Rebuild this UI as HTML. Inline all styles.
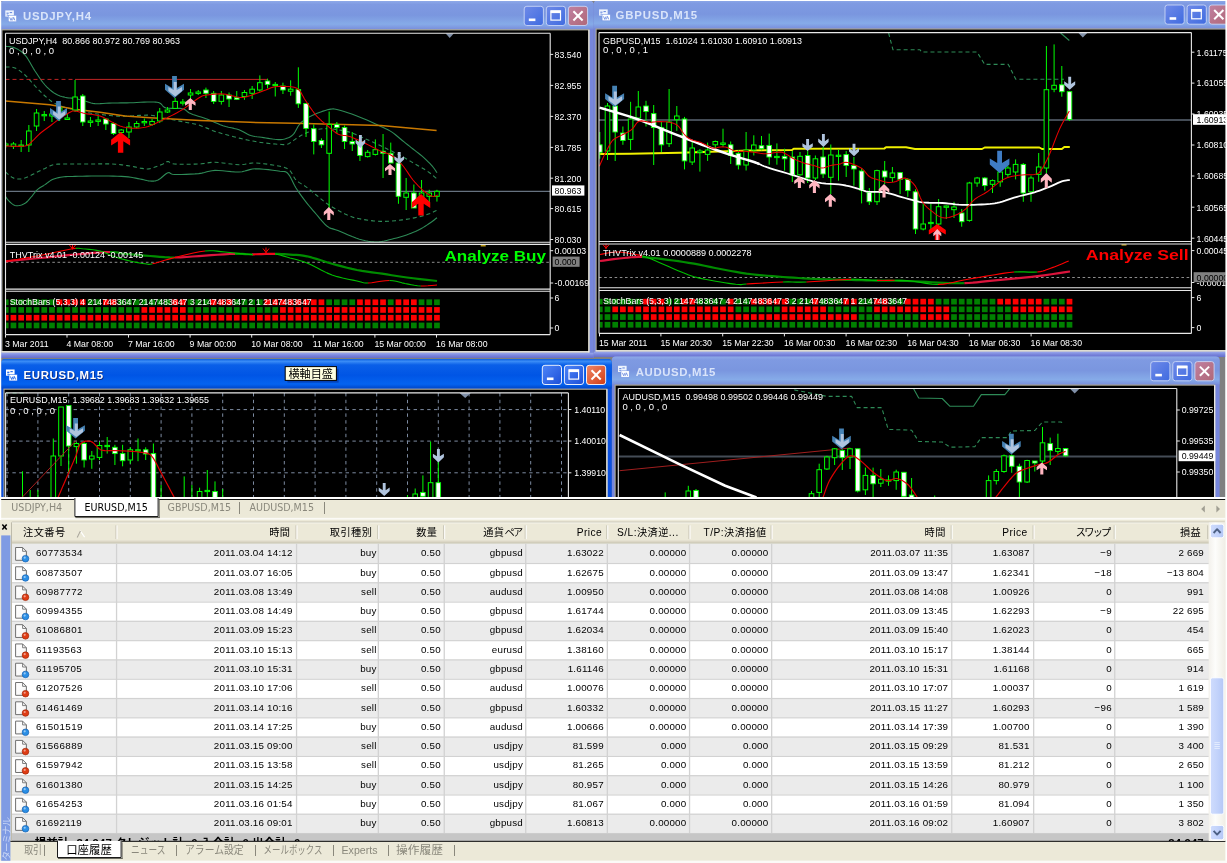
<!DOCTYPE html>
<html lang="ja"><head><meta charset="utf-8"><title>MetaTrader 4</title><style>
html,body{margin:0;padding:0;background:#fff;}
#root{will-change:transform;position:relative;width:1227px;height:863px;overflow:hidden;background:#ece9d8;font-family:"Liberation Sans","Noto Sans CJK JP",sans-serif;}
#root svg{position:absolute;left:0;top:0;}
#ui div,#ui span{position:absolute;white-space:nowrap;}
.ctab{font-family:"DejaVu Sans Condensed","DejaVu Sans","Liberation Sans",sans-serif;font-size:10.6px;line-height:13px;text-align:center;}
.btab{font-size:11.2px;line-height:13px;text-align:center;letter-spacing:-0.4px;}
.th{font-size:10.2px;line-height:14px;color:#000;letter-spacing:0.45px;}
.kn{letter-spacing:-1.7px;}
.td{font-size:9.8px;line-height:14px;color:#000;letter-spacing:0.2px;}
.r{text-align:right;}
.sumclip{overflow:hidden;}
.sum{font-size:11.4px;font-weight:bold;line-height:14px;color:#000;letter-spacing:0.1px;}
.vtxt{transform:rotate(-90deg);transform-origin:center;font-size:9.6px;color:#c9d6f6;width:60px;height:11px;line-height:11px;letter-spacing:-1.1px;text-align:left;}
</style></head><body>
<div id="root">
<svg width="1227" height="863" viewBox="0 0 1227 863">
<defs><linearGradient id="gA" x1="0" y1="0" x2="0" y2="1"><stop offset="0" stop-color="#0a5fe0"/><stop offset="0.08" stop-color="#3a8cf6"/><stop offset="0.2" stop-color="#0a5fe8"/><stop offset="0.55" stop-color="#0055e5"/><stop offset="0.85" stop-color="#0463f0"/><stop offset="1" stop-color="#0046c8"/></linearGradient><linearGradient id="gI" x1="0" y1="0" x2="0" y2="1"><stop offset="0" stop-color="#8ea9e8"/><stop offset="0.12" stop-color="#7f9ae2"/><stop offset="0.5" stop-color="#7a96df"/><stop offset="0.82" stop-color="#86abe8"/><stop offset="1" stop-color="#7a8fdc"/></linearGradient><linearGradient id="bbI" x1="0" y1="0" x2="0" y2="1"><stop offset="0" stop-color="#9aa8ec"/><stop offset="0.5" stop-color="#7a86dc"/><stop offset="1" stop-color="#666ecc"/></linearGradient><linearGradient id="bI" x1="0" y1="0" x2="1" y2="1"><stop offset="0" stop-color="#6f8ae8"/><stop offset="1" stop-color="#3f6be0"/></linearGradient><linearGradient id="bA" x1="0" y1="0" x2="1" y2="1"><stop offset="0" stop-color="#4f86f8"/><stop offset="1" stop-color="#1c4fd8"/></linearGradient><linearGradient id="cI" x1="0" y1="0" x2="1" y2="1"><stop offset="0" stop-color="#c080a0"/><stop offset="1" stop-color="#b06878"/></linearGradient><linearGradient id="cA" x1="0" y1="0" x2="1" y2="1"><stop offset="0" stop-color="#f08868"/><stop offset="1" stop-color="#d03c14"/></linearGradient></defs>
<rect x="0" y="0" width="1227" height="863" fill="#ffffff"/>
<rect x="1" y="1" width="1224.6" height="500" fill="#808080"/>
<path d="M0 358 L0 5 Q0 1 4 1 L589.8 1 Q593.8 1 593.8 5 L593.8 358 Z" fill="#7686dc"/>
<rect x="0" y="352.8" width="593.8" height="5.2" fill="url(#bbI)"/>
<path d="M0 29.2 L0 5 Q0 1 4 1 L589.8 1 Q593.8 1 593.8 5 L593.8 29.2 Z" fill="url(#gI)"/>
<rect x="1.3" y="29.2" width="588.1" height="323.2" fill="#a9a695"/>
<rect x="2.5" y="30.4" width="585.9" height="320.8" fill="#000000"/>
<rect x="588.3" y="29.8" width="1.2" height="322.6" fill="#f4f2e8"/>
<rect x="1.3" y="351.2" width="588.1" height="1.3" fill="#f4f2e8"/>
<rect x="5.3" y="10.4" width="8.6" height="6.2" fill="#eef3fd"/>
<rect x="6.5" y="12.6" width="2.2" height="1.2" fill="#6f8fe0"/>
<rect x="9.7" y="12" width="2.4" height="1.1" fill="#6f8fe0"/>
<rect x="6.7" y="14.6" width="1.4" height="1" fill="#6f8fe0"/>
<rect x="8.3" y="15.4" width="8.2" height="6.4" fill="#ffffff" stroke="#6f8fe0" stroke-width="0.5"/>
<path d="M9.7 17.4 l1.3 3 l1.3 -3 M12.5 20.4 l1.2 -3 l1.2 3" fill="none" stroke="#6f8fe0" stroke-width="0.9"/>
<text x="23" y="20.3" font-family='"Liberation Sans", "Noto Sans CJK JP", sans-serif' font-size="11.4" fill="#d9e4fa" textLength="68" lengthAdjust="spacing" font-weight="bold">USDJPY,H4</text>
<rect x="524.2" y="6.3" width="19.2" height="19.2" fill="url(#bI)" stroke="#c9d6f6" stroke-width="0.9" rx="2.6"/>
<rect x="528.8" y="18.5" width="6.6" height="2.6" fill="#ffffff"/>
<rect x="546.3" y="6.3" width="19.2" height="19.2" fill="url(#bI)" stroke="#c9d6f6" stroke-width="0.9" rx="2.6"/>
<rect x="550.9" y="10.9" width="9.6" height="9.2" fill="none" stroke="#ffffff" stroke-width="1.2"/>
<rect x="550.7" y="10.5" width="10" height="2.6" fill="#ffffff"/>
<rect x="568.4" y="6.3" width="19.2" height="19.2" fill="url(#cI)" stroke="#c9d6f6" stroke-width="0.9" rx="2.6"/>
<line x1="573.4" y1="11.3" x2="582.6" y2="20.5" stroke="#ffffff" stroke-width="2"/>
<line x1="582.6" y1="11.3" x2="573.4" y2="20.5" stroke="#ffffff" stroke-width="2"/>
<clipPath id="cp1"><rect x="5.5" y="33" width="544.7" height="303"/></clipPath><g clip-path="url(#cp1)">
<line x1="5.5" y1="191.4" x2="550.2" y2="191.4" stroke="#66727f" stroke-width="1.3"/>
<polyline points="5.5,46.2 6.53,46.34 7.94,46.47 9.62,46.66 11.44,46.95 13.28,47.38 15,48 16.64,48.76 18.3,49.61 19.97,50.61 21.65,51.81 23.33,53.25 25,55 26.67,57.17 28.33,59.74 30,62.56 31.67,65.48 33.33,68.34 35,71 36.67,73.51 38.33,76.01 40,78.46 41.67,80.81 43.33,83 45,85 46.67,86.8 48.33,88.45 50,89.94 51.67,91.3 53.33,92.51 55,93.6 56.67,94.53 58.33,95.29 60,95.91 61.67,96.43 63.33,96.88 65,97.3 66.67,97.64 68.33,97.87 70,98.03 71.67,98.17 73.33,98.35 75,98.6 76.67,98.93 78.33,99.31 80,99.72 81.67,100.14 83.33,100.58 85,101 86.59,101.46 88.07,101.97 89.56,102.49 91.15,102.96 92.93,103.35 95,103.6 97.42,103.68 100.11,103.62 103,103.47 106,103.29 109.03,103.11 112,103 114.92,102.95 117.85,102.93 120.81,102.91 123.81,102.9 126.87,102.86 130,102.8 133.34,102.68 136.9,102.51 140.52,102.32 144.02,102.16 147.24,102.04 150,102 152.25,102.02 154.12,102.05 155.71,102.14 157.1,102.3 158.4,102.58 159.7,103 160.83,103.65 161.67,104.53 162.42,105.52 163.27,106.5 164.4,107.37 166,108 168.26,108.32 171.06,108.4 174.14,108.36 177.24,108.31 180.12,108.39 182.5,108.7 184.24,109.27 185.52,110 186.57,110.86 187.61,111.77 188.88,112.71 190.6,113.6 192.83,114.46 195.4,115.31 198.19,116.19 201.1,117.09 204.01,118.02 206.8,119 209.5,120.07 212.21,121.23 214.91,122.43 217.61,123.61 220.31,124.72 223,125.7 225.73,126.52 228.51,127.2 231.29,127.81 234,128.41 236.59,129.05 239,129.8 241.17,130.7 243.14,131.71 244.99,132.78 246.79,133.81 248.64,134.74 250.6,135.5 252.69,136.06 254.83,136.47 257.01,136.79 259.21,137.05 261.42,137.3 263.6,137.6 265.82,137.96 268.11,138.34 270.41,138.71 272.63,139.05 274.72,139.32 276.6,139.5 278.23,139.6 279.66,139.65 280.94,139.64 282.17,139.54 283.4,139.33 284.7,139 286.1,138.57 287.54,138.05 288.98,137.43 290.4,136.67 291.75,135.77 293,134.7 294.12,133.35 295.14,131.73 296.1,129.96 297.03,128.16 297.99,126.47 299,125 300.03,123.78 301.03,122.7 302.05,121.73 303.14,120.82 304.34,119.92 305.7,119 307.24,118.05 308.92,117.11 310.72,116.19 312.6,115.29 314.54,114.42 316.5,113.6 318.57,112.78 320.77,111.94 323.04,111.14 325.27,110.41 327.39,109.82 329.3,109.4 330.83,109.12 332,108.94 333.06,108.89 334.23,109 335.77,109.29 337.9,109.8 340.74,110.57 344.11,111.58 347.85,112.77 351.76,114.1 355.67,115.49 359.4,116.9 363.1,118.4 366.93,120.07 370.77,121.81 374.46,123.52 377.85,125.11 380.8,126.5 383.21,127.61 385.19,128.49 386.87,129.26 388.4,130.02 389.93,130.86 391.6,131.9 393.39,133.15 395.17,134.53 396.96,136.01 398.74,137.52 400.52,139.04 402.3,140.5 404.08,141.92 405.86,143.34 407.64,144.75 409.43,146.16 411.21,147.58 413,149 414.82,150.43 416.68,151.86 418.54,153.29 420.37,154.73 422.13,156.17 423.8,157.6 425.39,159.06 426.94,160.54 428.43,162.03 429.83,163.49 431.13,164.89 432.3,166.2 433.36,167.48 434.32,168.76 435.18,169.99 435.92,171.09 436.53,172.02 437,172.7" fill="none" stroke="#2e8b57" stroke-width="1.1" stroke-linejoin="round"/>
<polyline points="5.5,196.6 5.97,197.21 6.6,198.06 7.36,199.06 8.21,200.12 9.1,201.13 10,202 10.9,202.8 11.84,203.62 12.83,204.39 13.88,205.06 15,205.55 16.2,205.8 17.55,205.79 19.04,205.57 20.6,205.18 22.16,204.65 23.65,204.01 25,203.3 26.18,202.48 27.26,201.52 28.26,200.46 29.23,199.32 30.2,198.16 31.2,197 32.22,195.8 33.21,194.53 34.21,193.22 35.23,191.93 36.29,190.71 37.4,189.6 38.59,188.63 39.84,187.76 41.12,186.95 42.43,186.18 43.73,185.41 45,184.6 46.22,183.74 47.39,182.84 48.56,181.95 49.76,181.09 51.02,180.29 52.4,179.6 53.87,179 55.41,178.48 57.02,178.02 58.7,177.63 60.46,177.29 62.3,177 64.11,176.78 65.87,176.64 67.71,176.56 69.75,176.51 72.14,176.47 75,176.4 78.45,176.31 82.42,176.21 86.73,176.13 91.21,176.05 95.69,176.01 100,176 104.28,176.02 108.7,176.06 113.12,176.12 117.41,176.23 121.41,176.38 125,176.6 128.14,176.9 130.93,177.28 133.44,177.71 135.74,178.16 137.91,178.6 140,179 141.98,179.39 143.78,179.81 145.44,180.21 147,180.57 148.51,180.84 150,181 151.43,181.08 152.74,181.12 154.01,181.08 155.27,180.9 156.58,180.56 158,180 159.58,179.06 161.29,177.73 163.04,176.23 164.78,174.77 166.42,173.56 167.9,172.8 168.97,172.6 169.66,172.8 170.25,173.26 171.04,173.8 172.33,174.26 174.4,174.5 177.51,174.53 181.48,174.48 185.94,174.36 190.53,174.17 194.91,173.91 198.7,173.6 201.79,173.14 204.44,172.53 206.87,171.84 209.29,171.2 211.93,170.68 215,170.4 218.64,170.44 222.71,170.76 226.99,171.2 231.27,171.64 235.34,171.96 239,172 242.09,171.68 244.76,171.08 247.22,170.35 249.69,169.63 252.37,169.06 255.5,168.8 259.31,168.88 263.69,169.19 268.28,169.65 272.76,170.19 276.78,170.74 280,171.2 282.29,171.46 283.89,171.56 285.03,171.65 285.94,171.91 286.86,172.51 288,173.6 289.31,175.31 290.6,177.54 291.89,180.1 293.21,182.81 294.57,185.51 296,188 297.51,190.32 299.07,192.62 300.67,194.89 302.32,197.15 304,199.38 305.7,201.6 307.44,203.8 309.22,205.99 311.04,208.16 312.87,210.31 314.69,212.42 316.5,214.5 318.29,216.62 320.07,218.79 321.86,220.94 323.64,222.96 325.42,224.78 327.2,226.3 328.86,227.4 330.37,228.13 331.87,228.65 333.53,229.13 335.49,229.72 337.9,230.6 340.91,231.85 344.43,233.36 348.25,234.99 352.16,236.6 355.95,238.05 359.4,239.2 362.53,240.07 365.5,240.77 368.35,241.31 371.11,241.7 373.82,241.92 376.5,242 379.13,241.87 381.69,241.54 384.18,241.04 386.65,240.45 389.11,239.82 391.6,239.2 394.13,238.58 396.69,237.92 399.24,237.21 401.76,236.47 404.22,235.7 406.6,234.9 408.9,234.08 411.14,233.22 413.33,232.34 415.46,231.42 417.51,230.48 419.5,229.5 421.43,228.47 423.31,227.37 425.12,226.24 426.85,225.12 428.48,224.03 430,223 431.45,221.99 432.85,220.95 434.16,219.94 435.31,219.03 436.28,218.26 437,217.7" fill="none" stroke="#2e8b57" stroke-width="1.1" stroke-linejoin="round"/>
<polyline points="5.5,67 6.53,67.04 7.94,67.04 9.62,67.06 11.44,67.19 13.28,67.47 15,68 16.64,68.77 18.3,69.74 19.97,70.88 21.65,72.15 23.33,73.53 25,75 26.67,76.61 28.33,78.41 30,80.31 31.67,82.26 33.33,84.18 35,86 36.67,87.75 38.33,89.5 40,91.21 41.67,92.88 43.33,94.48 45,96 46.67,97.45 48.33,98.86 50,100.19 51.67,101.44 53.33,102.59 55,103.6 56.67,104.46 58.33,105.17 60,105.77 61.67,106.3 63.33,106.8 65,107.3 66.67,107.79 68.33,108.22 70,108.62 71.67,109.01 73.33,109.4 75,109.8 76.61,110.22 78.15,110.65 79.69,111.08 81.3,111.5 83.04,111.91 85,112.3 87.21,112.67 89.63,113.01 92.19,113.35 94.81,113.67 97.44,113.99 100,114.3 102.5,114.62 105,114.95 107.5,115.27 110,115.57 112.5,115.82 115,116 117.44,116.11 119.81,116.16 122.19,116.16 124.63,116.12 127.21,116.07 130,116 133.09,115.87 136.44,115.64 139.94,115.4 143.44,115.2 146.84,115.11 150,115.2 152.89,115.5 155.61,115.97 158.22,116.54 160.78,117.18 163.35,117.81 166,118.4 168.72,118.94 171.47,119.49 174.24,120.04 177,120.6 179.76,121.15 182.5,121.7 185.22,122.21 187.92,122.69 190.61,123.16 193.3,123.67 196,124.27 198.7,125 201.41,125.91 204.14,126.97 206.86,128.12 209.59,129.29 212.3,130.4 215,131.4 217.68,132.28 220.34,133.09 222.99,133.85 225.65,134.58 228.31,135.29 231,136 233.71,136.72 236.44,137.42 239.19,138.11 241.93,138.78 244.67,139.41 247.4,140 250.11,140.55 252.81,141.07 255.5,141.55 258.19,142 260.89,142.42 263.6,142.8 266.42,143.16 269.36,143.5 272.31,143.8 275.15,144.06 277.75,144.26 280,144.4 281.82,144.51 283.29,144.6 284.52,144.63 285.64,144.57 286.76,144.37 288,144 289.33,143.39 290.67,142.58 292,141.62 293.33,140.61 294.67,139.61 296,138.7 297.28,137.86 298.5,137.04 299.72,136.23 301,135.44 302.41,134.66 304,133.9 305.82,133.13 307.82,132.34 309.95,131.56 312.14,130.84 314.35,130.21 316.5,129.7 318.54,129.3 320.5,128.97 322.47,128.74 324.54,128.6 326.79,128.59 329.3,128.7 332.24,128.98 335.57,129.41 339.08,129.97 342.56,130.6 345.8,131.25 348.6,131.9 350.77,132.49 352.44,133.06 353.87,133.65 355.33,134.33 357.08,135.16 359.4,136.2 362.35,137.48 365.74,138.96 369.43,140.59 373.27,142.31 377.1,144.07 380.8,145.8 384.48,147.57 388.29,149.44 392.09,151.34 395.78,153.21 399.22,154.98 402.3,156.6 404.92,158.03 407.17,159.31 409.18,160.5 411.07,161.64 412.97,162.79 415,164 417.2,165.26 419.46,166.53 421.73,167.8 423.95,169.07 426.06,170.34 428,171.6 429.84,172.93 431.63,174.36 433.31,175.77 434.81,177.09 436.07,178.2 437,179" fill="none" stroke="#2e8b57" stroke-width="1.1" stroke-linejoin="round" stroke-dasharray="4 3"/>
<polyline points="5.5,172 6.26,172.66 7.3,173.61 8.53,174.71 9.87,175.84 11.22,176.84 12.5,177.6 13.72,178.12 14.97,178.5 16.22,178.77 17.49,178.94 18.75,179.01 20,179 21.21,178.9 22.38,178.7 23.54,178.4 24.74,178.01 26.02,177.55 27.4,177 28.94,176.32 30.63,175.5 32.39,174.6 34.15,173.67 35.84,172.79 37.4,172 38.81,171.32 40.12,170.69 41.36,170.1 42.57,169.53 43.77,168.97 45,168.4 46.22,167.79 47.39,167.16 48.56,166.54 49.76,165.95 51.02,165.43 52.4,165 53.73,164.68 54.96,164.45 56.25,164.29 57.79,164.17 59.75,164.08 62.3,164 65.6,163.94 69.53,163.93 73.87,163.94 78.43,163.96 82.98,163.99 87.3,164 91.51,163.98 95.8,163.93 100.09,163.88 104.27,163.85 108.27,163.88 112,164 115.46,164.21 118.72,164.5 121.79,164.85 124.69,165.23 127.42,165.62 130,166 132.39,166.4 134.59,166.85 136.62,167.31 138.52,167.75 140.3,168.12 142,168.4 143.51,168.62 144.78,168.81 145.94,168.94 147.11,168.97 148.42,168.87 150,168.6 151.97,168.09 154.26,167.34 156.69,166.47 159.08,165.56 161.24,164.7 163,164 164.27,163.4 165.17,162.83 165.86,162.31 166.45,161.89 167.08,161.6 167.9,161.5 168.68,161.66 169.29,162.06 169.94,162.59 170.86,163.17 172.27,163.67 174.4,164 177.51,164.16 181.48,164.25 185.94,164.26 190.53,164.22 194.91,164.13 198.7,164 201.79,163.77 204.44,163.41 206.87,163 209.29,162.63 211.93,162.37 215,162.3 218.64,162.51 222.71,162.95 226.99,163.5 231.27,164.05 235.34,164.49 239,164.7 242.09,164.6 244.76,164.25 247.22,163.79 249.69,163.35 252.37,163.04 255.5,163 259.29,163.25 263.63,163.7 268.18,164.29 272.64,164.96 276.69,165.65 280,166.3 282.5,166.87 284.42,167.4 285.93,167.96 287.19,168.6 288.36,169.39 289.6,170.4 290.81,171.72 291.85,173.3 292.79,175.04 293.74,176.82 294.78,178.51 296,180 297.41,181.25 298.95,182.35 300.57,183.36 302.26,184.36 303.98,185.42 305.7,186.6 307.44,187.92 309.22,189.32 311.04,190.77 312.87,192.26 314.69,193.74 316.5,195.2 318.29,196.66 320.07,198.15 321.86,199.64 323.64,201.1 325.42,202.49 327.2,203.8 328.98,205.01 330.77,206.13 332.55,207.2 334.33,208.22 336.12,209.22 337.9,210.2 339.68,211.18 341.46,212.16 343.24,213.1 345.03,214 346.81,214.84 348.6,215.6 350.27,216.27 351.8,216.85 353.33,217.38 355.01,217.86 356.99,218.33 359.4,218.8 362.35,219.32 365.74,219.86 369.43,220.39 373.27,220.86 377.1,221.21 380.8,221.4 384.43,221.41 388.12,221.27 391.81,221.01 395.45,220.68 398.96,220.3 402.3,219.9 405.49,219.47 408.6,218.96 411.59,218.41 414.42,217.84 417.07,217.26 419.5,216.7 421.68,216.15 423.63,215.6 425.39,215.05 427.01,214.5 428.53,213.95 430,213.4 431.45,212.82 432.85,212.21 434.16,211.59 435.31,211.03 436.28,210.55 437,210.2" fill="none" stroke="#2e8b57" stroke-width="1.1" stroke-linejoin="round" stroke-dasharray="4 3"/>
<line x1="5.5" y1="79.4" x2="75" y2="79.4" stroke="#c02424" stroke-width="1" stroke-dasharray="4 3"/>
<line x1="75" y1="79.4" x2="268" y2="79.4" stroke="#c02424" stroke-width="1"/>
<polyline points="5.5,101 50,104.8 75,109.3 100,112.3 125,116 150,117.8 200,120.5 250,122.3 295,123.3 380.8,125.5 436.6,130.4" fill="none" stroke="#c87800" stroke-width="1.5" stroke-linejoin="round"/>
<line x1="5.75" y1="142" x2="5.75" y2="148" stroke="#00ff00" stroke-width="1"/>
<rect x="3.45" y="144" width="4.6" height="1.6" fill="#000000" stroke="#00ff00" stroke-width="1"/>
<line x1="13.45" y1="142" x2="13.45" y2="149" stroke="#00ff00" stroke-width="1"/>
<rect x="11.15" y="144" width="4.6" height="2.4" fill="#000000" stroke="#00ff00" stroke-width="1"/>
<line x1="21.15" y1="140" x2="21.15" y2="152" stroke="#00ff00" stroke-width="1"/>
<rect x="18.85" y="145" width="4.6" height="1.2" fill="#000000" stroke="#00ff00" stroke-width="1"/>
<line x1="28.85" y1="125" x2="28.85" y2="152" stroke="#00ff00" stroke-width="1"/>
<rect x="26.55" y="131" width="4.6" height="14" fill="#000000" stroke="#00ff00" stroke-width="1"/>
<line x1="36.55" y1="109" x2="36.55" y2="131" stroke="#00ff00" stroke-width="1"/>
<rect x="34.25" y="113" width="4.6" height="13" fill="#000000" stroke="#00ff00" stroke-width="1"/>
<line x1="44.25" y1="111" x2="44.25" y2="121" stroke="#00ff00" stroke-width="1"/>
<rect x="41.95" y="114.6" width="4.6" height="1.2" fill="#000000" stroke="#00ff00" stroke-width="1"/>
<line x1="51.95" y1="110" x2="51.95" y2="122" stroke="#00ff00" stroke-width="1"/>
<rect x="49.65" y="114" width="4.6" height="2" fill="#000000" stroke="#00ff00" stroke-width="1"/>
<line x1="59.65" y1="101" x2="59.65" y2="121" stroke="#00ff00" stroke-width="1"/>
<rect x="57.35" y="108" width="4.6" height="8" fill="#000000" stroke="#00ff00" stroke-width="1"/>
<line x1="67.35" y1="114" x2="67.35" y2="120" stroke="#00ff00" stroke-width="1"/>
<rect x="65.05" y="118" width="4.6" height="1.5" fill="#000000" stroke="#00ff00" stroke-width="1"/>
<line x1="75.05" y1="80" x2="75.05" y2="112" stroke="#00ff00" stroke-width="1"/>
<rect x="72.75" y="97" width="4.6" height="13" fill="#000000" stroke="#00ff00" stroke-width="1"/>
<line x1="82.75" y1="94" x2="82.75" y2="126" stroke="#00ff00" stroke-width="1"/>
<rect x="80.45" y="96" width="4.6" height="26" fill="#ffffff" stroke="#00ff00" stroke-width="0.9"/>
<line x1="90.45" y1="117" x2="90.45" y2="127" stroke="#00ff00" stroke-width="1"/>
<rect x="88.15" y="121" width="4.6" height="1.4" fill="#000000" stroke="#00ff00" stroke-width="1"/>
<line x1="98.15" y1="116" x2="98.15" y2="126" stroke="#00ff00" stroke-width="1"/>
<rect x="95.85" y="120" width="4.6" height="1.4" fill="#000000" stroke="#00ff00" stroke-width="1"/>
<line x1="105.85" y1="118" x2="105.85" y2="130" stroke="#00ff00" stroke-width="1"/>
<rect x="103.55" y="119" width="4.6" height="5" fill="#ffffff" stroke="#00ff00" stroke-width="0.9"/>
<line x1="113.55" y1="122" x2="113.55" y2="135" stroke="#00ff00" stroke-width="1"/>
<rect x="111.25" y="123.5" width="4.6" height="10" fill="#ffffff" stroke="#00ff00" stroke-width="0.9"/>
<line x1="121.25" y1="129" x2="121.25" y2="134" stroke="#00ff00" stroke-width="1"/>
<rect x="118.95" y="130" width="4.6" height="2.5" fill="#000000" stroke="#00ff00" stroke-width="1"/>
<line x1="128.95" y1="122" x2="128.95" y2="138" stroke="#00ff00" stroke-width="1"/>
<rect x="126.65" y="127" width="4.6" height="5" fill="#000000" stroke="#00ff00" stroke-width="1"/>
<line x1="136.65" y1="121" x2="136.65" y2="128.5" stroke="#00ff00" stroke-width="1"/>
<rect x="134.35" y="123.5" width="4.6" height="3.5" fill="#000000" stroke="#00ff00" stroke-width="1"/>
<line x1="144.35" y1="118.5" x2="144.35" y2="126" stroke="#00ff00" stroke-width="1"/>
<rect x="142.05" y="121.5" width="4.6" height="1.3" fill="#000000" stroke="#00ff00" stroke-width="1"/>
<line x1="152.05" y1="119" x2="152.05" y2="126" stroke="#00ff00" stroke-width="1"/>
<rect x="149.75" y="121.5" width="4.6" height="3" fill="#000000" stroke="#00ff00" stroke-width="1"/>
<line x1="159.75" y1="108" x2="159.75" y2="123" stroke="#00ff00" stroke-width="1"/>
<rect x="157.45" y="112" width="4.6" height="9" fill="#000000" stroke="#00ff00" stroke-width="1"/>
<line x1="167.45" y1="107" x2="167.45" y2="113" stroke="#00ff00" stroke-width="1"/>
<rect x="165.15" y="110" width="4.6" height="2" fill="#000000" stroke="#00ff00" stroke-width="1"/>
<line x1="175.15" y1="98" x2="175.15" y2="108.4" stroke="#00ff00" stroke-width="1"/>
<rect x="172.85" y="101.4" width="4.6" height="7" fill="#000000" stroke="#00ff00" stroke-width="1"/>
<line x1="182.85" y1="99" x2="182.85" y2="105.5" stroke="#00ff00" stroke-width="1"/>
<rect x="180.55" y="102" width="4.6" height="1.2" fill="#000000" stroke="#00ff00" stroke-width="1"/>
<line x1="190.55" y1="89" x2="190.55" y2="99" stroke="#00ff00" stroke-width="1"/>
<rect x="188.25" y="93" width="4.6" height="2" fill="#000000" stroke="#00ff00" stroke-width="1"/>
<line x1="198.25" y1="90" x2="198.25" y2="95" stroke="#00ff00" stroke-width="1"/>
<rect x="195.95" y="92" width="4.6" height="1.4" fill="#000000" stroke="#00ff00" stroke-width="1"/>
<line x1="205.95" y1="87.6" x2="205.95" y2="98" stroke="#00ff00" stroke-width="1"/>
<rect x="203.65" y="90" width="4.6" height="3.3" fill="#ffffff" stroke="#00ff00" stroke-width="0.9"/>
<line x1="213.65" y1="91" x2="213.65" y2="104" stroke="#00ff00" stroke-width="1"/>
<rect x="211.35" y="93.3" width="4.6" height="8.1" fill="#ffffff" stroke="#00ff00" stroke-width="0.9"/>
<line x1="221.35" y1="91" x2="221.35" y2="104.6" stroke="#00ff00" stroke-width="1"/>
<rect x="219.05" y="95" width="4.6" height="6.4" fill="#000000" stroke="#00ff00" stroke-width="1"/>
<line x1="229.05" y1="92.5" x2="229.05" y2="107" stroke="#00ff00" stroke-width="1"/>
<rect x="226.75" y="95" width="4.6" height="4" fill="#ffffff" stroke="#00ff00" stroke-width="0.9"/>
<line x1="236.75" y1="91" x2="236.75" y2="100" stroke="#00ff00" stroke-width="1"/>
<rect x="234.45" y="97.7" width="4.6" height="1.6" fill="#ffffff" stroke="#00ff00" stroke-width="0.9"/>
<line x1="244.45" y1="90" x2="244.45" y2="99.8" stroke="#00ff00" stroke-width="1"/>
<rect x="242.15" y="92.5" width="4.6" height="4" fill="#000000" stroke="#00ff00" stroke-width="1"/>
<line x1="252.15" y1="86" x2="252.15" y2="99" stroke="#00ff00" stroke-width="1"/>
<rect x="249.85" y="89.2" width="4.6" height="4.1" fill="#000000" stroke="#00ff00" stroke-width="1"/>
<line x1="259.85" y1="75.4" x2="259.85" y2="91.7" stroke="#00ff00" stroke-width="1"/>
<rect x="257.55" y="82.7" width="4.6" height="7.3" fill="#000000" stroke="#00ff00" stroke-width="1"/>
<line x1="267.55" y1="78.7" x2="267.55" y2="88.4" stroke="#00ff00" stroke-width="1"/>
<rect x="265.25" y="81" width="4.6" height="3.4" fill="#ffffff" stroke="#00ff00" stroke-width="0.9"/>
<line x1="275.25" y1="82" x2="275.25" y2="96.5" stroke="#00ff00" stroke-width="1"/>
<rect x="272.95" y="84.4" width="4.6" height="1.2" fill="#000000" stroke="#00ff00" stroke-width="1"/>
<line x1="282.95" y1="82.7" x2="282.95" y2="94" stroke="#00ff00" stroke-width="1"/>
<rect x="280.65" y="86" width="4.6" height="4" fill="#ffffff" stroke="#00ff00" stroke-width="0.9"/>
<line x1="290.65" y1="80.3" x2="290.65" y2="95.7" stroke="#00ff00" stroke-width="1"/>
<rect x="288.35" y="89.2" width="4.6" height="2" fill="#000000" stroke="#00ff00" stroke-width="1"/>
<line x1="298.35" y1="67.3" x2="298.35" y2="107.9" stroke="#00ff00" stroke-width="1"/>
<rect x="296.05" y="89.6" width="4.6" height="14.2" fill="#ffffff" stroke="#00ff00" stroke-width="0.9"/>
<line x1="306.05" y1="103.5" x2="306.05" y2="137" stroke="#00ff00" stroke-width="1"/>
<rect x="303.75" y="103.5" width="4.6" height="24.9" fill="#ffffff" stroke="#00ff00" stroke-width="0.9"/>
<line x1="313.75" y1="124.4" x2="313.75" y2="154.4" stroke="#00ff00" stroke-width="1"/>
<rect x="311.45" y="128.7" width="4.6" height="12.8" fill="#ffffff" stroke="#00ff00" stroke-width="0.9"/>
<line x1="321.45" y1="138.3" x2="321.45" y2="148" stroke="#00ff00" stroke-width="1"/>
<rect x="319.15" y="140.5" width="4.6" height="4.3" fill="#ffffff" stroke="#00ff00" stroke-width="0.9"/>
<line x1="329.15" y1="111.5" x2="329.15" y2="208" stroke="#00ff00" stroke-width="1"/>
<rect x="326.85" y="124.4" width="4.6" height="28.9" fill="#000000" stroke="#00ff00" stroke-width="1"/>
<line x1="336.85" y1="122" x2="336.85" y2="133" stroke="#00ff00" stroke-width="1"/>
<rect x="334.55" y="124.4" width="4.6" height="3.2" fill="#ffffff" stroke="#00ff00" stroke-width="0.9"/>
<line x1="344.55" y1="125.5" x2="344.55" y2="149" stroke="#00ff00" stroke-width="1"/>
<rect x="342.25" y="127.6" width="4.6" height="13.9" fill="#ffffff" stroke="#00ff00" stroke-width="0.9"/>
<line x1="352.25" y1="132" x2="352.25" y2="151" stroke="#00ff00" stroke-width="1"/>
<rect x="349.95" y="141.5" width="4.6" height="2.5" fill="#ffffff" stroke="#00ff00" stroke-width="0.9"/>
<line x1="359.95" y1="140.5" x2="359.95" y2="161" stroke="#00ff00" stroke-width="1"/>
<rect x="357.65" y="141.5" width="4.6" height="14" fill="#ffffff" stroke="#00ff00" stroke-width="0.9"/>
<line x1="367.65" y1="150" x2="367.65" y2="157.5" stroke="#00ff00" stroke-width="1"/>
<rect x="365.35" y="152.3" width="4.6" height="4.3" fill="#000000" stroke="#00ff00" stroke-width="1"/>
<line x1="375.35" y1="139.4" x2="375.35" y2="155.5" stroke="#00ff00" stroke-width="1"/>
<rect x="373.05" y="149.7" width="4.6" height="4.7" fill="#000000" stroke="#00ff00" stroke-width="1"/>
<line x1="383.05" y1="134" x2="383.05" y2="178" stroke="#00ff00" stroke-width="1"/>
<rect x="380.75" y="151.2" width="4.6" height="2.1" fill="#ffffff" stroke="#00ff00" stroke-width="0.9"/>
<line x1="390.75" y1="142.6" x2="390.75" y2="163" stroke="#00ff00" stroke-width="1"/>
<rect x="388.45" y="153.3" width="4.6" height="9.7" fill="#ffffff" stroke="#00ff00" stroke-width="0.9"/>
<line x1="398.45" y1="163" x2="398.45" y2="203.8" stroke="#00ff00" stroke-width="1"/>
<rect x="396.15" y="163" width="4.6" height="33.3" fill="#ffffff" stroke="#00ff00" stroke-width="0.9"/>
<line x1="406.15" y1="178" x2="406.15" y2="210" stroke="#00ff00" stroke-width="1"/>
<rect x="403.85" y="193" width="4.6" height="4.3" fill="#000000" stroke="#00ff00" stroke-width="1"/>
<line x1="413.85" y1="184.5" x2="413.85" y2="208" stroke="#00ff00" stroke-width="1"/>
<rect x="411.55" y="193" width="4.6" height="15" fill="#ffffff" stroke="#00ff00" stroke-width="0.9"/>
<line x1="421.55" y1="180" x2="421.55" y2="199.5" stroke="#00ff00" stroke-width="1"/>
<rect x="419.25" y="193" width="4.6" height="4.3" fill="#000000" stroke="#00ff00" stroke-width="1"/>
<line x1="429.25" y1="189.8" x2="429.25" y2="203.8" stroke="#00ff00" stroke-width="1"/>
<rect x="426.95" y="193" width="4.6" height="3.3" fill="#000000" stroke="#00ff00" stroke-width="1"/>
<line x1="436.95" y1="189.8" x2="436.95" y2="201.6" stroke="#00ff00" stroke-width="1"/>
<rect x="434.65" y="191.3" width="4.6" height="5" fill="#000000" stroke="#00ff00" stroke-width="1"/>
<polyline points="5.5,146 7.76,146.06 11,146.19 14.79,146.31 18.67,146.37 22.22,146.29 25,146 26.93,145.48 28.36,144.8 29.44,143.97 30.37,143.04 31.3,142.04 32.4,141 33.63,139.89 34.83,138.69 36.04,137.41 37.28,136.09 38.59,134.78 40,133.5 41.53,132.25 43.16,131 44.85,129.75 46.58,128.5 48.31,127.25 50,126 51.67,124.73 53.33,123.45 55,122.17 56.67,120.9 58.33,119.67 60,118.5 61.72,117.33 63.52,116.16 65.31,115.01 67.04,113.96 68.62,113.03 70,112.3 71.06,111.76 71.85,111.36 72.5,111.11 73.15,110.97 73.94,110.94 75,111 76.32,111.2 77.78,111.55 79.38,112.01 81.11,112.53 82.99,113.04 85,113.5 87.27,113.89 89.81,114.24 92.5,114.59 95.19,114.98 97.73,115.44 100,116 101.96,116.69 103.7,117.48 105.31,118.34 106.85,119.24 108.39,120.14 110,121 111.67,121.87 113.33,122.78 115,123.69 116.67,124.56 118.33,125.34 120,126 121.67,126.53 123.33,126.96 125,127.31 126.67,127.59 128.33,127.82 130,128 131.67,128.14 133.33,128.23 135,128.27 136.67,128.24 138.33,128.16 140,128 141.6,127.81 143.11,127.59 144.62,127.31 146.22,126.92 147.99,126.4 150,125.7 152.31,124.79 154.87,123.7 157.59,122.46 160.41,121.14 163.23,119.77 166,118.4 168.72,117.04 171.47,115.65 174.24,114.21 177,112.72 179.76,111.15 182.5,109.5 185.31,107.64 188.22,105.54 191.13,103.38 193.91,101.3 196.47,99.45 198.7,98 200.42,96.98 201.7,96.3 202.75,95.84 203.8,95.54 205.07,95.29 206.8,95 209.03,94.67 211.61,94.36 214.41,94.11 217.31,93.94 220.22,93.89 223,94 225.77,94.35 228.63,94.93 231.49,95.64 234.24,96.34 236.78,96.94 239,97.3 240.75,97.46 242.07,97.52 243.19,97.46 244.3,97.28 245.64,96.96 247.4,96.5 249.7,95.81 252.4,94.9 255.31,93.85 258.27,92.76 261.09,91.71 263.6,90.8 265.72,89.99 267.59,89.19 269.31,88.44 271.04,87.77 272.89,87.22 275,86.8 277.49,86.53 280.29,86.39 283.21,86.35 286.09,86.41 288.74,86.57 291,86.8 292.81,87.06 294.31,87.35 295.58,87.72 296.73,88.25 297.83,88.99 299,90 300.14,91.31 301.18,92.88 302.17,94.66 303.21,96.61 304.36,98.67 305.7,100.8 307.26,103.12 309,105.69 310.85,108.37 312.76,111.04 314.66,113.56 316.5,115.8 318.29,117.74 320.07,119.47 321.86,121.06 323.64,122.55 325.42,124.01 327.2,125.5 328.98,127.06 330.77,128.66 332.55,130.22 334.33,131.68 336.12,132.96 337.9,134 339.68,134.71 341.46,135.12 343.24,135.36 345.03,135.54 346.81,135.78 348.6,136.2 350.4,136.78 352.2,137.44 354.01,138.16 355.81,138.91 357.61,139.7 359.4,140.5 361.18,141.32 362.94,142.19 364.7,143.08 366.46,143.99 368.22,144.9 370,145.8 371.79,146.71 373.59,147.63 375.39,148.56 377.19,149.48 379,150.36 380.8,151.2 382.6,151.92 384.4,152.52 386.21,153.09 388.01,153.72 389.81,154.5 391.6,155.5 393.39,156.72 395.17,158.08 396.96,159.58 398.74,161.23 400.52,163.04 402.3,165 404.08,167.23 405.86,169.74 407.64,172.41 409.43,175.09 411.21,177.67 413,180 414.82,182.13 416.68,184.17 418.54,186.11 420.37,187.9 422.13,189.54 423.8,191 425.39,192.29 426.92,193.43 428.39,194.42 429.78,195.23 431.09,195.86 432.3,196.3 433.44,196.45 434.53,196.31 435.53,195.98 436.41,195.58 437.15,195.22 437.7,195" fill="none" stroke="#e80000" stroke-width="1.05" stroke-linejoin="round"/>
<polygon points="56.1,101 60.9,101 60.9,112 67,108 67,113.4 58.5,121 50,113.4 50,108 56.1,112" fill="#4682b4"/>
<polygon points="57.71,106.4 60.69,106.4 60.69,113.66 65.32,111.02 65.32,114.58 59.2,119.6 53.08,114.58 53.08,111.02 57.71,113.66" fill="#b0c4de"/>
<polygon points="172.1,76 176.9,76 176.9,88.1 184,83.7 184,89.64 174.5,98 165,89.64 165,83.7 172.1,88.1" fill="#4682b4"/>
<polygon points="173.71,81.94 176.69,81.94 176.69,89.93 182.04,87.02 182.04,90.94 175.2,96.46 168.36,90.94 168.36,87.02 173.71,89.93" fill="#b0c4de"/>
<polygon points="188.75,110 191.85,110 191.85,103.4 195.55,105.8 195.55,102.56 190.3,98 185.05,102.56 185.05,105.8 188.75,103.4" fill="#ffb6c1"/>
<polygon points="117.9,152.7 123.3,152.7 123.3,141.31 130.1,145.45 130.1,139.87 120.6,132 111.1,139.87 111.1,145.45 117.9,141.31" fill="#ff0000"/>
<polygon points="358.95,135 361.85,135 361.85,142.15 365.2,139.55 365.2,143.06 360.4,148 355.6,143.06 355.6,139.55 358.95,142.15" fill="#b0c4de"/>
<polygon points="397.75,152 400.65,152 400.65,158.6 404,156.2 404,159.44 399.2,164 394.4,159.44 394.4,156.2 397.75,158.6" fill="#b0c4de"/>
<polygon points="388.45,175 391.55,175 391.55,168.95 395,171.15 395,168.18 390,164 385,168.18 385,171.15 388.45,168.95" fill="#ffb6c1"/>
<polygon points="327.25,220 330.35,220 330.35,212.85 333.8,215.45 333.8,211.94 328.8,207 323.8,211.94 323.8,215.45 327.25,212.85" fill="#ffb6c1"/>
<polygon points="418.3,215.6 423.7,215.6 423.7,203.72 430.25,208.04 430.25,202.21 421,194 411.75,202.21 411.75,208.04 418.3,203.72" fill="#ff0000"/>
<polygon points="445.7,33.4 453.7,33.4 449.7,38" fill="#8090a8"/>
<text x="9" y="43.91" font-family='"Liberation Sans", sans-serif' font-size="9.2" fill="#ffffff" textLength="171" lengthAdjust="spacingAndGlyphs">USDJPY,H4  80.866 80.972 80.769 80.963</text>
<text x="9" y="53.71" font-family='"Liberation Sans", sans-serif' font-size="9.2" fill="#ffffff" textLength="45" lengthAdjust="spacingAndGlyphs">0 , 0 , 0 , 0</text>
<line x1="5.5" y1="262.3" x2="550.2" y2="262.3" stroke="#8c8c8c" stroke-width="1" stroke-dasharray="2.6 2.6"/>
<polyline points="5.5,261.3 10.18,260.85 16.79,260.23 24.51,259.49 32.52,258.73 40,258 46.97,257.3 53.96,256.57 60.98,255.84 67.99,255.14 75,254.5 82.32,253.87 89.96,253.22 97.44,252.64 104.28,252.21 110,252" fill="none" stroke="#dc143c" stroke-width="2.2" stroke-linejoin="round"/>
<polyline points="110,252 114.12,252.08 116.96,252.39 119.24,252.84 121.68,253.35 125,253.8 129.36,254.23 134.28,254.68 139.52,255.15 144.84,255.6 150,256 154.92,256.4 159.76,256.81 164.64,257.18 169.68,257.43 175,257.5" fill="none" stroke="#008c00" stroke-width="2.2" stroke-linejoin="round"/>
<polyline points="175,257.5 180.68,257.34 186.64,256.98 192.76,256.52 198.92,256.03 205,255.6 211.21,255.2 217.62,254.76 223.94,254.35 229.83,254.01 235,253.8" fill="none" stroke="#dc143c" stroke-width="2.2" stroke-linejoin="round"/>
<polyline points="235,253.8 239.14,253.77 242.45,253.88 245.39,254.06 248.42,254.23 252,254.3" fill="none" stroke="#008c00" stroke-width="2.2" stroke-linejoin="round"/>
<polyline points="252,254.3 256.34,254.24 261.15,254.11 266.09,253.95 270.82,253.83 275,253.8" fill="none" stroke="#dc143c" stroke-width="2.2" stroke-linejoin="round"/>
<polyline points="275,253.8 278.48,253.86 281.48,253.98 284.24,254.15 287,254.36 290,254.6 293.14,254.79 296.27,254.94 299.53,255.17 303.06,255.58 307,256.3 311.49,257.43 316.42,258.9 321.62,260.55 326.87,262.2 332,263.7 337,265.07 342,266.42 347,267.72 352,268.92 357,270 362,270.9 367,271.66 372,272.34 377,273 382,273.7 386.92,274.46 391.76,275.23 396.64,276 401.68,276.76 407,277.5 413.16,278.28 420.08,279.09 426.92,279.87 432.84,280.53 437,281" fill="none" stroke="#008c00" stroke-width="2.2" stroke-linejoin="round"/>
<polyline points="5.5,261.3 10.22,260.53 16.91,259.44 24.69,258.16 32.68,256.81 40,255.5 46.99,254.11 54.22,252.56 61.22,251.04 67.47,249.73 72.5,248.8 75.82,248.34" fill="none" stroke="#ff0000" stroke-width="1.1" stroke-linejoin="round"/>
<polyline points="75.82,248.34 77.76,248.21 79.04,248.32 80.38,248.55 82.5,248.8 85.6,249.05 89.2,249.39 93,249.81 96.7,250.35 100,251 102.74,251.82 105.12,252.8 107.38,253.87 109.76,254.96 112.5,256 115.72,257.04 119.26,258.11 122.94,259.16 126.58,260.14 130,261 133.28,261.75 136.54,262.41 139.66,262.99 142.52,263.45 145,263.8 146.74,264.08 147.82,264.3 148.78,264.39 150.16,264.25 152.5,263.8" fill="none" stroke="#00c000" stroke-width="1.1" stroke-linejoin="round"/>
<polyline points="152.5,263.8 155.92,262.95 160.06,261.74 164.74,260.34 169.78,258.87 175,257.5 180.68,256.09 186.94,254.55 193.36,253.07 199.52,251.82 205,251" fill="none" stroke="#ff0000" stroke-width="1.1" stroke-linejoin="round"/>
<polyline points="205,251 209.56,250.7 213.48,250.79 217.12,251.13 220.84,251.58 225,252 229.89,252.45 235.26,253.04 240.7,253.64 245.75,254.17 250,254.5 253.22,254.58" fill="none" stroke="#00c000" stroke-width="1.1" stroke-linejoin="round"/>
<polyline points="253.22,254.58 255.69,254.49 257.75,254.31 259.74,254.12 262,254 264.5,253.9 267.03,253.77 269.61,253.69 272.26,253.74 275,254" fill="none" stroke="#ff0000" stroke-width="1.1" stroke-linejoin="round"/>
<polyline points="275,254 277.84,254.53 280.76,255.26 283.76,256.14 286.84,257.07 290,258 293.14,258.82 296.27,259.59 299.53,260.45 303.06,261.54 307,263 311.49,265.05 316.42,267.58 321.62,270.3 326.87,272.87 332,275 337.22,276.65 342.67,278.02 348.01,279.18 352.9,280.15 357,281 359.93,281.73 361.9,282.3 363.52,282.72 365.35,282.95 368,283" fill="none" stroke="#00c000" stroke-width="1.1" stroke-linejoin="round"/>
<polyline points="368,283 371.72,282.7 376.13,282.06 380.83,281.32 385.42,280.72 389.5,280.5" fill="none" stroke="#ff0000" stroke-width="1.1" stroke-linejoin="round"/>
<polyline points="389.5,280.5 392.98,280.76 396.12,281.33 399.07,282.07 401.98,282.84 405,283.5 408.12,284.09 411.24,284.7 414.37,285.28 417.52,285.73 420.7,286" fill="none" stroke="#00c000" stroke-width="1.1" stroke-linejoin="round"/>
<polyline points="420.7,286 424.18,286.01 427.96,285.8 431.62,285.5 434.77,285.19 437,285" fill="none" stroke="#ff0000" stroke-width="1.1" stroke-linejoin="round"/>
<line x1="72.5" y1="244" x2="72.5" y2="249.5" stroke="#ff0000" stroke-width="1"/>
<line x1="69.5" y1="245" x2="72.5" y2="249" stroke="#ff0000" stroke-width="1"/>
<line x1="75.5" y1="245" x2="72.5" y2="249" stroke="#ff0000" stroke-width="1"/>
<line x1="266" y1="247.5" x2="266" y2="253" stroke="#ff0000" stroke-width="1"/>
<line x1="263" y1="248.5" x2="266" y2="252.5" stroke="#ff0000" stroke-width="1"/>
<line x1="269" y1="248.5" x2="266" y2="252.5" stroke="#ff0000" stroke-width="1"/>
<text x="9.7" y="257.51" font-family='"Liberation Sans", sans-serif' font-size="9.2" fill="#ffffff" textLength="133.5" lengthAdjust="spacingAndGlyphs">THVTrix v4.01 -0.00124 -0.00145</text>
<text x="444.5" y="260.58" font-family='"Liberation Sans", "Noto Sans CJK JP", sans-serif' font-size="15.5" fill="#00ff00" textLength="101.5" lengthAdjust="spacingAndGlyphs" font-weight="bold">Analyze Buy</text>
<rect x="480.7" y="245.2" width="5" height="1.2" fill="#e8c020"/>
<rect x="6.1" y="299.4" width="2.5" height="5.7" fill="#008000"/>
<rect x="10.6" y="299.4" width="5.7" height="5.7" fill="#008000"/>
<rect x="18.3" y="299.4" width="5.7" height="5.7" fill="#008000"/>
<rect x="26" y="299.4" width="5.7" height="5.7" fill="#008000"/>
<rect x="33.7" y="299.4" width="5.7" height="5.7" fill="#008000"/>
<rect x="41.4" y="299.4" width="5.7" height="5.7" fill="#008000"/>
<rect x="49.1" y="299.4" width="5.7" height="5.7" fill="#008000"/>
<rect x="56.8" y="299.4" width="5.7" height="5.7" fill="#ff0000"/>
<rect x="64.5" y="299.4" width="5.7" height="5.7" fill="#ff0000"/>
<rect x="72.2" y="299.4" width="5.7" height="5.7" fill="#ff0000"/>
<rect x="79.9" y="299.4" width="5.7" height="5.7" fill="#ff0000"/>
<rect x="87.6" y="299.4" width="5.7" height="5.7" fill="#008000"/>
<rect x="95.3" y="299.4" width="5.7" height="5.7" fill="#008000"/>
<rect x="103" y="299.4" width="5.7" height="5.7" fill="#ff0000"/>
<rect x="110.7" y="299.4" width="5.7" height="5.7" fill="#ff0000"/>
<rect x="118.4" y="299.4" width="5.7" height="5.7" fill="#008000"/>
<rect x="126.1" y="299.4" width="5.7" height="5.7" fill="#008000"/>
<rect x="133.8" y="299.4" width="5.7" height="5.7" fill="#008000"/>
<rect x="141.5" y="299.4" width="5.7" height="5.7" fill="#008000"/>
<rect x="149.2" y="299.4" width="5.7" height="5.7" fill="#008000"/>
<rect x="156.9" y="299.4" width="5.7" height="5.7" fill="#008000"/>
<rect x="164.6" y="299.4" width="5.7" height="5.7" fill="#008000"/>
<rect x="172.3" y="299.4" width="5.7" height="5.7" fill="#ff0000"/>
<rect x="180" y="299.4" width="5.7" height="5.7" fill="#ff0000"/>
<rect x="187.7" y="299.4" width="5.7" height="5.7" fill="#008000"/>
<rect x="195.4" y="299.4" width="5.7" height="5.7" fill="#008000"/>
<rect x="203.1" y="299.4" width="5.7" height="5.7" fill="#008000"/>
<rect x="210.8" y="299.4" width="5.7" height="5.7" fill="#ff0000"/>
<rect x="218.5" y="299.4" width="5.7" height="5.7" fill="#ff0000"/>
<rect x="226.2" y="299.4" width="5.7" height="5.7" fill="#ff0000"/>
<rect x="233.9" y="299.4" width="5.7" height="5.7" fill="#008000"/>
<rect x="241.6" y="299.4" width="5.7" height="5.7" fill="#008000"/>
<rect x="249.3" y="299.4" width="5.7" height="5.7" fill="#008000"/>
<rect x="257" y="299.4" width="5.7" height="5.7" fill="#008000"/>
<rect x="264.7" y="299.4" width="5.7" height="5.7" fill="#ff0000"/>
<rect x="272.4" y="299.4" width="5.7" height="5.7" fill="#ff0000"/>
<rect x="280.1" y="299.4" width="5.7" height="5.7" fill="#ff0000"/>
<rect x="287.8" y="299.4" width="5.7" height="5.7" fill="#ff0000"/>
<rect x="295.5" y="299.4" width="5.7" height="5.7" fill="#ff0000"/>
<rect x="303.2" y="299.4" width="5.7" height="5.7" fill="#ff0000"/>
<rect x="310.9" y="299.4" width="5.7" height="5.7" fill="#ff0000"/>
<rect x="318.6" y="299.4" width="5.7" height="5.7" fill="#ff0000"/>
<rect x="326.3" y="299.4" width="5.7" height="5.7" fill="#008000"/>
<rect x="334" y="299.4" width="5.7" height="5.7" fill="#008000"/>
<rect x="341.7" y="299.4" width="5.7" height="5.7" fill="#008000"/>
<rect x="349.4" y="299.4" width="5.7" height="5.7" fill="#008000"/>
<rect x="357.1" y="299.4" width="5.7" height="5.7" fill="#ff0000"/>
<rect x="364.8" y="299.4" width="5.7" height="5.7" fill="#ff0000"/>
<rect x="372.5" y="299.4" width="5.7" height="5.7" fill="#ff0000"/>
<rect x="380.2" y="299.4" width="5.7" height="5.7" fill="#ff0000"/>
<rect x="387.9" y="299.4" width="5.7" height="5.7" fill="#008000"/>
<rect x="395.6" y="299.4" width="5.7" height="5.7" fill="#ff0000"/>
<rect x="403.3" y="299.4" width="5.7" height="5.7" fill="#ff0000"/>
<rect x="411" y="299.4" width="5.7" height="5.7" fill="#ff0000"/>
<rect x="418.7" y="299.4" width="5.7" height="5.7" fill="#008000"/>
<rect x="426.4" y="299.4" width="5.7" height="5.7" fill="#008000"/>
<rect x="434.1" y="299.4" width="5.7" height="5.7" fill="#008000"/>
<rect x="6.1" y="307.1" width="2.5" height="5.7" fill="#008000"/>
<rect x="10.6" y="307.1" width="5.7" height="5.7" fill="#008000"/>
<rect x="18.3" y="307.1" width="5.7" height="5.7" fill="#008000"/>
<rect x="26" y="307.1" width="5.7" height="5.7" fill="#008000"/>
<rect x="33.7" y="307.1" width="5.7" height="5.7" fill="#008000"/>
<rect x="41.4" y="307.1" width="5.7" height="5.7" fill="#008000"/>
<rect x="49.1" y="307.1" width="5.7" height="5.7" fill="#008000"/>
<rect x="56.8" y="307.1" width="5.7" height="5.7" fill="#008000"/>
<rect x="64.5" y="307.1" width="5.7" height="5.7" fill="#008000"/>
<rect x="72.2" y="307.1" width="5.7" height="5.7" fill="#008000"/>
<rect x="79.9" y="307.1" width="5.7" height="5.7" fill="#008000"/>
<rect x="87.6" y="307.1" width="5.7" height="5.7" fill="#008000"/>
<rect x="95.3" y="307.1" width="5.7" height="5.7" fill="#008000"/>
<rect x="103" y="307.1" width="5.7" height="5.7" fill="#008000"/>
<rect x="110.7" y="307.1" width="5.7" height="5.7" fill="#008000"/>
<rect x="118.4" y="307.1" width="5.7" height="5.7" fill="#008000"/>
<rect x="126.1" y="307.1" width="5.7" height="5.7" fill="#008000"/>
<rect x="133.8" y="307.1" width="5.7" height="5.7" fill="#008000"/>
<rect x="141.5" y="307.1" width="5.7" height="5.7" fill="#ff0000"/>
<rect x="149.2" y="307.1" width="5.7" height="5.7" fill="#ff0000"/>
<rect x="156.9" y="307.1" width="5.7" height="5.7" fill="#ff0000"/>
<rect x="164.6" y="307.1" width="5.7" height="5.7" fill="#ff0000"/>
<rect x="172.3" y="307.1" width="5.7" height="5.7" fill="#ff0000"/>
<rect x="180" y="307.1" width="5.7" height="5.7" fill="#ff0000"/>
<rect x="187.7" y="307.1" width="5.7" height="5.7" fill="#008000"/>
<rect x="195.4" y="307.1" width="5.7" height="5.7" fill="#008000"/>
<rect x="203.1" y="307.1" width="5.7" height="5.7" fill="#008000"/>
<rect x="210.8" y="307.1" width="5.7" height="5.7" fill="#008000"/>
<rect x="218.5" y="307.1" width="5.7" height="5.7" fill="#008000"/>
<rect x="226.2" y="307.1" width="5.7" height="5.7" fill="#008000"/>
<rect x="233.9" y="307.1" width="5.7" height="5.7" fill="#008000"/>
<rect x="241.6" y="307.1" width="5.7" height="5.7" fill="#008000"/>
<rect x="249.3" y="307.1" width="5.7" height="5.7" fill="#008000"/>
<rect x="257" y="307.1" width="5.7" height="5.7" fill="#008000"/>
<rect x="264.7" y="307.1" width="5.7" height="5.7" fill="#008000"/>
<rect x="272.4" y="307.1" width="5.7" height="5.7" fill="#008000"/>
<rect x="280.1" y="307.1" width="5.7" height="5.7" fill="#ff0000"/>
<rect x="287.8" y="307.1" width="5.7" height="5.7" fill="#ff0000"/>
<rect x="295.5" y="307.1" width="5.7" height="5.7" fill="#ff0000"/>
<rect x="303.2" y="307.1" width="5.7" height="5.7" fill="#ff0000"/>
<rect x="310.9" y="307.1" width="5.7" height="5.7" fill="#ff0000"/>
<rect x="318.6" y="307.1" width="5.7" height="5.7" fill="#ff0000"/>
<rect x="326.3" y="307.1" width="5.7" height="5.7" fill="#ff0000"/>
<rect x="334" y="307.1" width="5.7" height="5.7" fill="#ff0000"/>
<rect x="341.7" y="307.1" width="5.7" height="5.7" fill="#ff0000"/>
<rect x="349.4" y="307.1" width="5.7" height="5.7" fill="#ff0000"/>
<rect x="357.1" y="307.1" width="5.7" height="5.7" fill="#ff0000"/>
<rect x="364.8" y="307.1" width="5.7" height="5.7" fill="#ff0000"/>
<rect x="372.5" y="307.1" width="5.7" height="5.7" fill="#ff0000"/>
<rect x="380.2" y="307.1" width="5.7" height="5.7" fill="#ff0000"/>
<rect x="387.9" y="307.1" width="5.7" height="5.7" fill="#ff0000"/>
<rect x="395.6" y="307.1" width="5.7" height="5.7" fill="#ff0000"/>
<rect x="403.3" y="307.1" width="5.7" height="5.7" fill="#ff0000"/>
<rect x="411" y="307.1" width="5.7" height="5.7" fill="#ff0000"/>
<rect x="418.7" y="307.1" width="5.7" height="5.7" fill="#ff0000"/>
<rect x="426.4" y="307.1" width="5.7" height="5.7" fill="#ff0000"/>
<rect x="434.1" y="307.1" width="5.7" height="5.7" fill="#ff0000"/>
<rect x="6.1" y="314.9" width="2.5" height="5.7" fill="#ff0000"/>
<rect x="10.6" y="314.9" width="5.7" height="5.7" fill="#ff0000"/>
<rect x="18.3" y="314.9" width="5.7" height="5.7" fill="#ff0000"/>
<rect x="26" y="314.9" width="5.7" height="5.7" fill="#ff0000"/>
<rect x="33.7" y="314.9" width="5.7" height="5.7" fill="#ff0000"/>
<rect x="41.4" y="314.9" width="5.7" height="5.7" fill="#ff0000"/>
<rect x="49.1" y="314.9" width="5.7" height="5.7" fill="#ff0000"/>
<rect x="56.8" y="314.9" width="5.7" height="5.7" fill="#ff0000"/>
<rect x="64.5" y="314.9" width="5.7" height="5.7" fill="#ff0000"/>
<rect x="72.2" y="314.9" width="5.7" height="5.7" fill="#ff0000"/>
<rect x="79.9" y="314.9" width="5.7" height="5.7" fill="#ff0000"/>
<rect x="87.6" y="314.9" width="5.7" height="5.7" fill="#ff0000"/>
<rect x="95.3" y="314.9" width="5.7" height="5.7" fill="#ff0000"/>
<rect x="103" y="314.9" width="5.7" height="5.7" fill="#ff0000"/>
<rect x="110.7" y="314.9" width="5.7" height="5.7" fill="#ff0000"/>
<rect x="118.4" y="314.9" width="5.7" height="5.7" fill="#ff0000"/>
<rect x="126.1" y="314.9" width="5.7" height="5.7" fill="#ff0000"/>
<rect x="133.8" y="314.9" width="5.7" height="5.7" fill="#ff0000"/>
<rect x="141.5" y="314.9" width="5.7" height="5.7" fill="#ff0000"/>
<rect x="149.2" y="314.9" width="5.7" height="5.7" fill="#ff0000"/>
<rect x="156.9" y="314.9" width="5.7" height="5.7" fill="#ff0000"/>
<rect x="164.6" y="314.9" width="5.7" height="5.7" fill="#ff0000"/>
<rect x="172.3" y="314.9" width="5.7" height="5.7" fill="#ff0000"/>
<rect x="180" y="314.9" width="5.7" height="5.7" fill="#ff0000"/>
<rect x="187.7" y="314.9" width="5.7" height="5.7" fill="#ff0000"/>
<rect x="195.4" y="314.9" width="5.7" height="5.7" fill="#ff0000"/>
<rect x="203.1" y="314.9" width="5.7" height="5.7" fill="#ff0000"/>
<rect x="210.8" y="314.9" width="5.7" height="5.7" fill="#ff0000"/>
<rect x="218.5" y="314.9" width="5.7" height="5.7" fill="#ff0000"/>
<rect x="226.2" y="314.9" width="5.7" height="5.7" fill="#ff0000"/>
<rect x="233.9" y="314.9" width="5.7" height="5.7" fill="#ff0000"/>
<rect x="241.6" y="314.9" width="5.7" height="5.7" fill="#ff0000"/>
<rect x="249.3" y="314.9" width="5.7" height="5.7" fill="#ff0000"/>
<rect x="257" y="314.9" width="5.7" height="5.7" fill="#ff0000"/>
<rect x="264.7" y="314.9" width="5.7" height="5.7" fill="#ff0000"/>
<rect x="272.4" y="314.9" width="5.7" height="5.7" fill="#ff0000"/>
<rect x="280.1" y="314.9" width="5.7" height="5.7" fill="#ff0000"/>
<rect x="287.8" y="314.9" width="5.7" height="5.7" fill="#ff0000"/>
<rect x="295.5" y="314.9" width="5.7" height="5.7" fill="#ff0000"/>
<rect x="303.2" y="314.9" width="5.7" height="5.7" fill="#ff0000"/>
<rect x="310.9" y="314.9" width="5.7" height="5.7" fill="#ff0000"/>
<rect x="318.6" y="314.9" width="5.7" height="5.7" fill="#ff0000"/>
<rect x="326.3" y="314.9" width="5.7" height="5.7" fill="#ff0000"/>
<rect x="334" y="314.9" width="5.7" height="5.7" fill="#ff0000"/>
<rect x="341.7" y="314.9" width="5.7" height="5.7" fill="#ff0000"/>
<rect x="349.4" y="314.9" width="5.7" height="5.7" fill="#ff0000"/>
<rect x="357.1" y="314.9" width="5.7" height="5.7" fill="#ff0000"/>
<rect x="364.8" y="314.9" width="5.7" height="5.7" fill="#ff0000"/>
<rect x="372.5" y="314.9" width="5.7" height="5.7" fill="#ff0000"/>
<rect x="380.2" y="314.9" width="5.7" height="5.7" fill="#ff0000"/>
<rect x="387.9" y="314.9" width="5.7" height="5.7" fill="#ff0000"/>
<rect x="395.6" y="314.9" width="5.7" height="5.7" fill="#ff0000"/>
<rect x="403.3" y="314.9" width="5.7" height="5.7" fill="#ff0000"/>
<rect x="411" y="314.9" width="5.7" height="5.7" fill="#ff0000"/>
<rect x="418.7" y="314.9" width="5.7" height="5.7" fill="#ff0000"/>
<rect x="426.4" y="314.9" width="5.7" height="5.7" fill="#ff0000"/>
<rect x="434.1" y="314.9" width="5.7" height="5.7" fill="#ff0000"/>
<rect x="6.1" y="322.6" width="2.5" height="5.7" fill="#008000"/>
<rect x="10.6" y="322.6" width="5.7" height="5.7" fill="#008000"/>
<rect x="18.3" y="322.6" width="5.7" height="5.7" fill="#008000"/>
<rect x="26" y="322.6" width="5.7" height="5.7" fill="#008000"/>
<rect x="33.7" y="322.6" width="5.7" height="5.7" fill="#008000"/>
<rect x="41.4" y="322.6" width="5.7" height="5.7" fill="#008000"/>
<rect x="49.1" y="322.6" width="5.7" height="5.7" fill="#008000"/>
<rect x="56.8" y="322.6" width="5.7" height="5.7" fill="#008000"/>
<rect x="64.5" y="322.6" width="5.7" height="5.7" fill="#008000"/>
<rect x="72.2" y="322.6" width="5.7" height="5.7" fill="#008000"/>
<rect x="79.9" y="322.6" width="5.7" height="5.7" fill="#008000"/>
<rect x="87.6" y="322.6" width="5.7" height="5.7" fill="#008000"/>
<rect x="95.3" y="322.6" width="5.7" height="5.7" fill="#008000"/>
<rect x="103" y="322.6" width="5.7" height="5.7" fill="#008000"/>
<rect x="110.7" y="322.6" width="5.7" height="5.7" fill="#008000"/>
<rect x="118.4" y="322.6" width="5.7" height="5.7" fill="#008000"/>
<rect x="126.1" y="322.6" width="5.7" height="5.7" fill="#008000"/>
<rect x="133.8" y="322.6" width="5.7" height="5.7" fill="#008000"/>
<rect x="141.5" y="322.6" width="5.7" height="5.7" fill="#008000"/>
<rect x="149.2" y="322.6" width="5.7" height="5.7" fill="#008000"/>
<rect x="156.9" y="322.6" width="5.7" height="5.7" fill="#008000"/>
<rect x="164.6" y="322.6" width="5.7" height="5.7" fill="#008000"/>
<rect x="172.3" y="322.6" width="5.7" height="5.7" fill="#008000"/>
<rect x="180" y="322.6" width="5.7" height="5.7" fill="#008000"/>
<rect x="187.7" y="322.6" width="5.7" height="5.7" fill="#008000"/>
<rect x="195.4" y="322.6" width="5.7" height="5.7" fill="#008000"/>
<rect x="203.1" y="322.6" width="5.7" height="5.7" fill="#008000"/>
<rect x="210.8" y="322.6" width="5.7" height="5.7" fill="#008000"/>
<rect x="218.5" y="322.6" width="5.7" height="5.7" fill="#008000"/>
<rect x="226.2" y="322.6" width="5.7" height="5.7" fill="#008000"/>
<rect x="233.9" y="322.6" width="5.7" height="5.7" fill="#008000"/>
<rect x="241.6" y="322.6" width="5.7" height="5.7" fill="#008000"/>
<rect x="249.3" y="322.6" width="5.7" height="5.7" fill="#008000"/>
<rect x="257" y="322.6" width="5.7" height="5.7" fill="#008000"/>
<rect x="264.7" y="322.6" width="5.7" height="5.7" fill="#008000"/>
<rect x="272.4" y="322.6" width="5.7" height="5.7" fill="#008000"/>
<rect x="280.1" y="322.6" width="5.7" height="5.7" fill="#008000"/>
<rect x="287.8" y="322.6" width="5.7" height="5.7" fill="#008000"/>
<rect x="295.5" y="322.6" width="5.7" height="5.7" fill="#008000"/>
<rect x="303.2" y="322.6" width="5.7" height="5.7" fill="#008000"/>
<rect x="310.9" y="322.6" width="5.7" height="5.7" fill="#008000"/>
<rect x="318.6" y="322.6" width="5.7" height="5.7" fill="#008000"/>
<rect x="326.3" y="322.6" width="5.7" height="5.7" fill="#008000"/>
<rect x="334" y="322.6" width="5.7" height="5.7" fill="#008000"/>
<rect x="341.7" y="322.6" width="5.7" height="5.7" fill="#008000"/>
<rect x="349.4" y="322.6" width="5.7" height="5.7" fill="#008000"/>
<rect x="357.1" y="322.6" width="5.7" height="5.7" fill="#008000"/>
<rect x="364.8" y="322.6" width="5.7" height="5.7" fill="#008000"/>
<rect x="372.5" y="322.6" width="5.7" height="5.7" fill="#008000"/>
<rect x="380.2" y="322.6" width="5.7" height="5.7" fill="#008000"/>
<rect x="387.9" y="322.6" width="5.7" height="5.7" fill="#008000"/>
<rect x="395.6" y="322.6" width="5.7" height="5.7" fill="#008000"/>
<rect x="403.3" y="322.6" width="5.7" height="5.7" fill="#008000"/>
<rect x="411" y="322.6" width="5.7" height="5.7" fill="#008000"/>
<rect x="418.7" y="322.6" width="5.7" height="5.7" fill="#008000"/>
<rect x="426.4" y="322.6" width="5.7" height="5.7" fill="#008000"/>
<rect x="434.1" y="322.6" width="5.7" height="5.7" fill="#008000"/>
<text x="9.7" y="305.31" font-family='"Liberation Sans", sans-serif' font-size="9.2" fill="#ffffff" textLength="302" lengthAdjust="spacingAndGlyphs">StochBars (5,3,3) 4 2147483647 2147483647 3 2147483647 2 1 2147483647</text>
</g>
<line x1="5.5" y1="33.3" x2="550.2" y2="33.3" stroke="#e8e8e8" stroke-width="1.1"/>
<line x1="5.5" y1="242.2" x2="550.2" y2="242.2" stroke="#e8e8e8" stroke-width="1.1"/>
<line x1="5.5" y1="244.4" x2="550.2" y2="244.4" stroke="#e8e8e8" stroke-width="1.1"/>
<line x1="5.5" y1="289.1" x2="550.2" y2="289.1" stroke="#e8e8e8" stroke-width="1.1"/>
<line x1="5.5" y1="291.3" x2="550.2" y2="291.3" stroke="#e8e8e8" stroke-width="1.1"/>
<line x1="5.5" y1="334.6" x2="550.2" y2="334.6" stroke="#e8e8e8" stroke-width="1.1"/>
<line x1="5.5" y1="33.3" x2="5.5" y2="334.6" stroke="#e8e8e8" stroke-width="1.1"/>
<line x1="550.2" y1="33.3" x2="550.2" y2="334.6" stroke="#e8e8e8" stroke-width="1.1"/>
<line x1="550.2" y1="54.4" x2="553.2" y2="54.4" stroke="#e8e8e8" stroke-width="1"/>
<text x="554.6" y="57.71" font-family='"Liberation Sans", sans-serif' font-size="9.2" fill="#ffffff" textLength="26.73" lengthAdjust="spacingAndGlyphs">83.540</text>
<line x1="550.2" y1="85.4" x2="553.2" y2="85.4" stroke="#e8e8e8" stroke-width="1"/>
<text x="554.6" y="88.71" font-family='"Liberation Sans", sans-serif' font-size="9.2" fill="#ffffff" textLength="26.73" lengthAdjust="spacingAndGlyphs">82.955</text>
<line x1="550.2" y1="116.4" x2="553.2" y2="116.4" stroke="#e8e8e8" stroke-width="1"/>
<text x="554.6" y="119.71" font-family='"Liberation Sans", sans-serif' font-size="9.2" fill="#ffffff" textLength="26.73" lengthAdjust="spacingAndGlyphs">82.370</text>
<line x1="550.2" y1="147.4" x2="553.2" y2="147.4" stroke="#e8e8e8" stroke-width="1"/>
<text x="554.6" y="150.71" font-family='"Liberation Sans", sans-serif' font-size="9.2" fill="#ffffff" textLength="26.73" lengthAdjust="spacingAndGlyphs">81.785</text>
<line x1="550.2" y1="178.2" x2="553.2" y2="178.2" stroke="#e8e8e8" stroke-width="1"/>
<text x="554.6" y="181.51" font-family='"Liberation Sans", sans-serif' font-size="9.2" fill="#ffffff" textLength="26.73" lengthAdjust="spacingAndGlyphs">81.200</text>
<line x1="550.2" y1="208.6" x2="553.2" y2="208.6" stroke="#e8e8e8" stroke-width="1"/>
<text x="554.6" y="211.91" font-family='"Liberation Sans", sans-serif' font-size="9.2" fill="#ffffff" textLength="26.73" lengthAdjust="spacingAndGlyphs">80.615</text>
<line x1="550.2" y1="239.5" x2="553.2" y2="239.5" stroke="#e8e8e8" stroke-width="1"/>
<text x="554.6" y="242.81" font-family='"Liberation Sans", sans-serif' font-size="9.2" fill="#ffffff" textLength="26.73" lengthAdjust="spacingAndGlyphs">80.030</text>
<line x1="550.2" y1="250.7" x2="553.2" y2="250.7" stroke="#e8e8e8" stroke-width="1"/>
<text x="554.6" y="254.01" font-family='"Liberation Sans", sans-serif' font-size="9.2" fill="#ffffff" textLength="31.59" lengthAdjust="spacingAndGlyphs">0.00103</text>
<line x1="550.2" y1="283" x2="553.2" y2="283" stroke="#e8e8e8" stroke-width="1"/>
<text x="554.6" y="286.31" font-family='"Liberation Sans", sans-serif' font-size="9.2" fill="#ffffff" textLength="34.5" lengthAdjust="spacingAndGlyphs">-0.00169</text>
<line x1="550.2" y1="298" x2="553.2" y2="298" stroke="#e8e8e8" stroke-width="1"/>
<text x="554.6" y="301.31" font-family='"Liberation Sans", sans-serif' font-size="9.2" fill="#ffffff" textLength="4.86" lengthAdjust="spacingAndGlyphs">6</text>
<line x1="550.2" y1="328" x2="553.2" y2="328" stroke="#e8e8e8" stroke-width="1"/>
<text x="554.6" y="331.31" font-family='"Liberation Sans", sans-serif' font-size="9.2" fill="#ffffff" textLength="4.86" lengthAdjust="spacingAndGlyphs">0</text>
<line x1="5.5" y1="334.6" x2="5.5" y2="337.6" stroke="#e8e8e8" stroke-width="1"/>
<text x="5" y="347.31" font-family='"Liberation Sans", sans-serif' font-size="9.2" fill="#ffffff" textLength="43.56" lengthAdjust="spacingAndGlyphs">3 Mar 2011</text>
<line x1="67" y1="334.6" x2="67" y2="337.6" stroke="#e8e8e8" stroke-width="1"/>
<text x="66.5" y="347.31" font-family='"Liberation Sans", sans-serif' font-size="9.2" fill="#ffffff" textLength="46.64" lengthAdjust="spacingAndGlyphs">4 Mar 08:00</text>
<line x1="128.5" y1="334.6" x2="128.5" y2="337.6" stroke="#e8e8e8" stroke-width="1"/>
<text x="128" y="347.31" font-family='"Liberation Sans", sans-serif' font-size="9.2" fill="#ffffff" textLength="46.64" lengthAdjust="spacingAndGlyphs">7 Mar 16:00</text>
<line x1="190.1" y1="334.6" x2="190.1" y2="337.6" stroke="#e8e8e8" stroke-width="1"/>
<text x="189.6" y="347.31" font-family='"Liberation Sans", sans-serif' font-size="9.2" fill="#ffffff" textLength="46.64" lengthAdjust="spacingAndGlyphs">9 Mar 00:00</text>
<line x1="251.7" y1="334.6" x2="251.7" y2="337.6" stroke="#e8e8e8" stroke-width="1"/>
<text x="251.2" y="347.31" font-family='"Liberation Sans", sans-serif' font-size="9.2" fill="#ffffff" textLength="51.5" lengthAdjust="spacingAndGlyphs">10 Mar 08:00</text>
<line x1="313.3" y1="334.6" x2="313.3" y2="337.6" stroke="#e8e8e8" stroke-width="1"/>
<text x="312.8" y="347.31" font-family='"Liberation Sans", sans-serif' font-size="9.2" fill="#ffffff" textLength="50.85" lengthAdjust="spacingAndGlyphs">11 Mar 16:00</text>
<line x1="374.9" y1="334.6" x2="374.9" y2="337.6" stroke="#e8e8e8" stroke-width="1"/>
<text x="374.4" y="347.31" font-family='"Liberation Sans", sans-serif' font-size="9.2" fill="#ffffff" textLength="51.5" lengthAdjust="spacingAndGlyphs">15 Mar 00:00</text>
<line x1="436.5" y1="334.6" x2="436.5" y2="337.6" stroke="#e8e8e8" stroke-width="1"/>
<text x="436" y="347.31" font-family='"Liberation Sans", sans-serif' font-size="9.2" fill="#ffffff" textLength="51.5" lengthAdjust="spacingAndGlyphs">16 Mar 08:00</text>
<rect x="552" y="185.4" width="32.4" height="10.2" fill="#ffffff"/>
<text x="554.6" y="194.01" font-family='"Liberation Sans", sans-serif' font-size="9.2" fill="#000000" textLength="26.73" lengthAdjust="spacingAndGlyphs">80.963</text>
<rect x="552.6" y="256.6" width="27" height="10.2" fill="#808080"/>
<text x="554.6" y="265.01" font-family='"Liberation Sans", sans-serif' font-size="9.2" fill="#000000" textLength="21.87" lengthAdjust="spacingAndGlyphs">0.000</text>
<path d="M593.8 357 L593.8 4.2 Q593.8 0.2 597.8 0.2 L1236 0.2 Q1240 0.2 1240 4.2 L1240 357 Z" fill="#7686dc"/>
<rect x="593.8" y="351.8" width="646.2" height="5.2" fill="url(#bbI)"/>
<path d="M593.8 28.4 L593.8 4.2 Q593.8 0.2 597.8 0.2 L1236 0.2 Q1240 0.2 1240 4.2 L1240 28.4 Z" fill="url(#gI)"/>
<rect x="595.5" y="28.4" width="640.1" height="323" fill="#a9a695"/>
<rect x="596.7" y="29.6" width="637.9" height="320.6" fill="#000000"/>
<rect x="1234.5" y="29" width="1.2" height="322.4" fill="#f4f2e8"/>
<rect x="595.5" y="350.2" width="640.1" height="1.3" fill="#f4f2e8"/>
<rect x="599.1" y="9.4" width="8.6" height="6.2" fill="#eef3fd"/>
<rect x="600.3" y="11.6" width="2.2" height="1.2" fill="#6f8fe0"/>
<rect x="603.5" y="11" width="2.4" height="1.1" fill="#6f8fe0"/>
<rect x="600.5" y="13.6" width="1.4" height="1" fill="#6f8fe0"/>
<rect x="602.1" y="14.4" width="8.2" height="6.4" fill="#ffffff" stroke="#6f8fe0" stroke-width="0.5"/>
<path d="M603.5 16.4 l1.3 3 l1.3 -3 M606.3 19.4 l1.2 -3 l1.2 3" fill="none" stroke="#6f8fe0" stroke-width="0.9"/>
<text x="615.6" y="19.3" font-family='"Liberation Sans", "Noto Sans CJK JP", sans-serif' font-size="11.4" fill="#d9e4fa" textLength="81.4" lengthAdjust="spacing" font-weight="bold">GBPUSD,M15</text>
<rect x="1165" y="5" width="19.2" height="19.2" fill="url(#bI)" stroke="#c9d6f6" stroke-width="0.9" rx="2.6"/>
<rect x="1169.6" y="17.2" width="6.6" height="2.6" fill="#ffffff"/>
<rect x="1187.1" y="5" width="19.2" height="19.2" fill="url(#bI)" stroke="#c9d6f6" stroke-width="0.9" rx="2.6"/>
<rect x="1191.7" y="9.6" width="9.6" height="9.2" fill="none" stroke="#ffffff" stroke-width="1.2"/>
<rect x="1191.5" y="9.2" width="10" height="2.6" fill="#ffffff"/>
<rect x="1209.2" y="5" width="19.2" height="19.2" fill="url(#cI)" stroke="#c9d6f6" stroke-width="0.9" rx="2.6"/>
<line x1="1214.2" y1="10" x2="1223.4" y2="19.2" stroke="#ffffff" stroke-width="2"/>
<line x1="1223.4" y1="10" x2="1214.2" y2="19.2" stroke="#ffffff" stroke-width="2"/>
<clipPath id="cp2"><rect x="599" y="32.4" width="592.4" height="303"/></clipPath><g clip-path="url(#cp2)">
<line x1="599" y1="120" x2="1191.4" y2="120" stroke="#444c56" stroke-width="2"/>
<polyline points="888.6,33 893,49.8 920,49.8 921.5,52 977,52 984.7,64.4 1008.3,64.4 1015.8,79.3 1064,79.3" fill="none" stroke="#2e8b57" stroke-width="1.1" stroke-linejoin="round" stroke-dasharray="4 3"/>
<line x1="1060.6" y1="33" x2="1069.3" y2="40.5" stroke="#2e8b57" stroke-width="1.1"/>
<polyline points="599.4,154 630.5,153.8 680,152.7 750,150.4 792,150 793.7,148.7 884.5,148.4 886,147.2 906,147.2 915,149 982,149 984.7,147.5 1039.4,147.5 1042,149 1061.8,149 1064.3,147 1069.8,147" fill="none" stroke="#f0f000" stroke-width="2" stroke-linejoin="round"/>
<line x1="599.8" y1="132" x2="599.8" y2="158.7" stroke="#00ff00" stroke-width="1"/>
<rect x="597.5" y="144.8" width="4.6" height="7.5" fill="#ffffff" stroke="#00ff00" stroke-width="0.9"/>
<line x1="607.5" y1="103" x2="607.5" y2="160" stroke="#00ff00" stroke-width="1"/>
<rect x="605.2" y="106" width="4.6" height="45" fill="#000000" stroke="#00ff00" stroke-width="1"/>
<line x1="615.2" y1="106" x2="615.2" y2="161" stroke="#00ff00" stroke-width="1"/>
<rect x="612.9" y="106" width="4.6" height="26" fill="#ffffff" stroke="#00ff00" stroke-width="0.9"/>
<line x1="622.9" y1="126.5" x2="622.9" y2="144.8" stroke="#00ff00" stroke-width="1"/>
<rect x="620.6" y="133" width="4.6" height="7.5" fill="#ffffff" stroke="#00ff00" stroke-width="0.9"/>
<line x1="630.6" y1="101.8" x2="630.6" y2="150" stroke="#00ff00" stroke-width="1"/>
<rect x="628.3" y="119" width="4.6" height="20.4" fill="#000000" stroke="#00ff00" stroke-width="1"/>
<line x1="638.3" y1="91" x2="638.3" y2="122" stroke="#00ff00" stroke-width="1"/>
<rect x="636" y="107" width="4.6" height="11" fill="#000000" stroke="#00ff00" stroke-width="1"/>
<line x1="646" y1="100.8" x2="646" y2="126.5" stroke="#00ff00" stroke-width="1"/>
<rect x="643.7" y="106" width="4.6" height="5.5" fill="#ffffff" stroke="#00ff00" stroke-width="0.9"/>
<line x1="653.7" y1="105" x2="653.7" y2="165" stroke="#00ff00" stroke-width="1"/>
<rect x="651.4" y="113.6" width="4.6" height="14" fill="#ffffff" stroke="#00ff00" stroke-width="0.9"/>
<line x1="661.4" y1="122" x2="661.4" y2="152" stroke="#00ff00" stroke-width="1"/>
<rect x="659.1" y="127.6" width="4.6" height="17.2" fill="#ffffff" stroke="#00ff00" stroke-width="0.9"/>
<line x1="669.1" y1="89" x2="669.1" y2="147" stroke="#00ff00" stroke-width="1"/>
<rect x="666.8" y="122" width="4.6" height="21.7" fill="#000000" stroke="#00ff00" stroke-width="1"/>
<line x1="676.8" y1="106" x2="676.8" y2="130.8" stroke="#00ff00" stroke-width="1"/>
<rect x="674.5" y="116" width="4.6" height="3.7" fill="#000000" stroke="#00ff00" stroke-width="1"/>
<line x1="684.5" y1="116.9" x2="684.5" y2="169.4" stroke="#00ff00" stroke-width="1"/>
<rect x="682.2" y="119" width="4.6" height="41.9" fill="#ffffff" stroke="#00ff00" stroke-width="0.9"/>
<line x1="692.2" y1="141.5" x2="692.2" y2="165" stroke="#00ff00" stroke-width="1"/>
<rect x="689.9" y="148" width="4.6" height="14" fill="#000000" stroke="#00ff00" stroke-width="1"/>
<line x1="699.9" y1="149" x2="699.9" y2="171.6" stroke="#00ff00" stroke-width="1"/>
<rect x="697.6" y="151" width="4.6" height="1.6" fill="#000000" stroke="#00ff00" stroke-width="1"/>
<line x1="707.6" y1="142.6" x2="707.6" y2="160.9" stroke="#00ff00" stroke-width="1"/>
<rect x="705.3" y="150" width="4.6" height="4.4" fill="#000000" stroke="#00ff00" stroke-width="1"/>
<line x1="715.3" y1="140.5" x2="715.3" y2="150" stroke="#00ff00" stroke-width="1"/>
<rect x="713" y="141.5" width="4.6" height="3.3" fill="#000000" stroke="#00ff00" stroke-width="1"/>
<line x1="723" y1="128.7" x2="723" y2="147" stroke="#00ff00" stroke-width="1"/>
<rect x="720.7" y="143" width="4.6" height="1.4" fill="#000000" stroke="#00ff00" stroke-width="1"/>
<line x1="730.7" y1="141.5" x2="730.7" y2="164" stroke="#00ff00" stroke-width="1"/>
<rect x="728.4" y="144.8" width="4.6" height="10.7" fill="#ffffff" stroke="#00ff00" stroke-width="0.9"/>
<line x1="738.4" y1="150" x2="738.4" y2="169.4" stroke="#00ff00" stroke-width="1"/>
<rect x="736.1" y="153.3" width="4.6" height="11.7" fill="#ffffff" stroke="#00ff00" stroke-width="0.9"/>
<line x1="746.1" y1="132" x2="746.1" y2="170.5" stroke="#00ff00" stroke-width="1"/>
<rect x="743.8" y="150" width="4.6" height="15" fill="#000000" stroke="#00ff00" stroke-width="1"/>
<line x1="753.8" y1="135.3" x2="753.8" y2="155.5" stroke="#00ff00" stroke-width="1"/>
<rect x="751.5" y="145" width="4.6" height="5" fill="#000000" stroke="#00ff00" stroke-width="1"/>
<line x1="761.5" y1="136" x2="761.5" y2="150.4" stroke="#00ff00" stroke-width="1"/>
<rect x="759.2" y="145.7" width="4.6" height="3" fill="#ffffff" stroke="#00ff00" stroke-width="0.9"/>
<line x1="769.2" y1="133.6" x2="769.2" y2="164.7" stroke="#00ff00" stroke-width="1"/>
<rect x="766.9" y="145.4" width="4.6" height="11.6" fill="#ffffff" stroke="#00ff00" stroke-width="0.9"/>
<line x1="776.9" y1="143.4" x2="776.9" y2="164.7" stroke="#00ff00" stroke-width="1"/>
<rect x="774.6" y="156.4" width="4.6" height="1.2" fill="#000000" stroke="#00ff00" stroke-width="1"/>
<line x1="784.6" y1="148.7" x2="784.6" y2="170.6" stroke="#00ff00" stroke-width="1"/>
<rect x="782.3" y="156.3" width="4.6" height="2.5" fill="#ffffff" stroke="#00ff00" stroke-width="0.9"/>
<line x1="792.3" y1="151" x2="792.3" y2="182" stroke="#00ff00" stroke-width="1"/>
<rect x="790" y="157" width="4.6" height="17.8" fill="#ffffff" stroke="#00ff00" stroke-width="0.9"/>
<line x1="800" y1="152" x2="800" y2="175.6" stroke="#00ff00" stroke-width="1"/>
<rect x="797.7" y="156.3" width="4.6" height="18.5" fill="#000000" stroke="#00ff00" stroke-width="1"/>
<line x1="807.7" y1="150.4" x2="807.7" y2="183" stroke="#00ff00" stroke-width="1"/>
<rect x="805.4" y="155.5" width="4.6" height="22.5" fill="#ffffff" stroke="#00ff00" stroke-width="0.9"/>
<line x1="815.4" y1="155.5" x2="815.4" y2="180" stroke="#00ff00" stroke-width="1"/>
<rect x="813.1" y="158.8" width="4.6" height="19.2" fill="#000000" stroke="#00ff00" stroke-width="1"/>
<line x1="823.1" y1="147" x2="823.1" y2="178" stroke="#00ff00" stroke-width="1"/>
<rect x="820.8" y="157" width="4.6" height="17" fill="#ffffff" stroke="#00ff00" stroke-width="0.9"/>
<line x1="830.8" y1="144.5" x2="830.8" y2="194" stroke="#00ff00" stroke-width="1"/>
<rect x="828.5" y="155" width="4.6" height="22.3" fill="#000000" stroke="#00ff00" stroke-width="1"/>
<line x1="838.5" y1="149.6" x2="838.5" y2="180.7" stroke="#00ff00" stroke-width="1"/>
<rect x="836.2" y="155.2" width="4.6" height="1.2" fill="#000000" stroke="#00ff00" stroke-width="1"/>
<line x1="846.2" y1="151" x2="846.2" y2="177" stroke="#00ff00" stroke-width="1"/>
<rect x="843.9" y="154.6" width="4.6" height="10.9" fill="#ffffff" stroke="#00ff00" stroke-width="0.9"/>
<line x1="853.9" y1="157" x2="853.9" y2="185.7" stroke="#00ff00" stroke-width="1"/>
<rect x="851.6" y="165.5" width="4.6" height="3.5" fill="#ffffff" stroke="#00ff00" stroke-width="0.9"/>
<line x1="861.6" y1="168" x2="861.6" y2="203.4" stroke="#00ff00" stroke-width="1"/>
<rect x="859.3" y="171" width="4.6" height="19" fill="#ffffff" stroke="#00ff00" stroke-width="0.9"/>
<line x1="869.3" y1="188" x2="869.3" y2="205" stroke="#00ff00" stroke-width="1"/>
<rect x="867" y="192.4" width="4.6" height="9.3" fill="#ffffff" stroke="#00ff00" stroke-width="0.9"/>
<line x1="877" y1="169.7" x2="877" y2="205" stroke="#00ff00" stroke-width="1"/>
<rect x="874.7" y="170.6" width="4.6" height="31.1" fill="#000000" stroke="#00ff00" stroke-width="1"/>
<line x1="884.7" y1="161" x2="884.7" y2="184" stroke="#00ff00" stroke-width="1"/>
<rect x="882.4" y="171" width="4.6" height="6" fill="#ffffff" stroke="#00ff00" stroke-width="0.9"/>
<line x1="892.4" y1="167" x2="892.4" y2="182" stroke="#00ff00" stroke-width="1"/>
<rect x="890.1" y="173" width="4.6" height="4.6" fill="#000000" stroke="#00ff00" stroke-width="1"/>
<line x1="900.1" y1="172" x2="900.1" y2="194" stroke="#00ff00" stroke-width="1"/>
<rect x="897.8" y="172.6" width="4.6" height="6.7" fill="#ffffff" stroke="#00ff00" stroke-width="0.9"/>
<line x1="907.8" y1="178" x2="907.8" y2="196.8" stroke="#00ff00" stroke-width="1"/>
<rect x="905.5" y="179.4" width="4.6" height="11.2" fill="#ffffff" stroke="#00ff00" stroke-width="0.9"/>
<line x1="915.5" y1="189.3" x2="915.5" y2="234" stroke="#00ff00" stroke-width="1"/>
<rect x="913.2" y="191.8" width="4.6" height="37.2" fill="#ffffff" stroke="#00ff00" stroke-width="0.9"/>
<line x1="923.2" y1="204" x2="923.2" y2="230.4" stroke="#00ff00" stroke-width="1"/>
<rect x="920.9" y="224" width="4.6" height="5" fill="#000000" stroke="#00ff00" stroke-width="1"/>
<line x1="930.9" y1="204" x2="930.9" y2="229" stroke="#00ff00" stroke-width="1"/>
<rect x="928.6" y="222.4" width="4.6" height="1.2" fill="#000000" stroke="#00ff00" stroke-width="1"/>
<line x1="938.6" y1="199" x2="938.6" y2="225.4" stroke="#00ff00" stroke-width="1"/>
<rect x="936.3" y="206.7" width="4.6" height="17.3" fill="#000000" stroke="#00ff00" stroke-width="1"/>
<line x1="946.3" y1="205.5" x2="946.3" y2="219" stroke="#00ff00" stroke-width="1"/>
<rect x="944" y="206" width="4.6" height="1.3" fill="#000000" stroke="#00ff00" stroke-width="1"/>
<line x1="954" y1="201.8" x2="954" y2="218" stroke="#00ff00" stroke-width="1"/>
<rect x="951.7" y="207" width="4.6" height="2.7" fill="#000000" stroke="#00ff00" stroke-width="1"/>
<line x1="961.7" y1="209" x2="961.7" y2="226.7" stroke="#00ff00" stroke-width="1"/>
<rect x="959.4" y="213" width="4.6" height="8.7" fill="#ffffff" stroke="#00ff00" stroke-width="0.9"/>
<line x1="969.4" y1="181.8" x2="969.4" y2="221.7" stroke="#00ff00" stroke-width="1"/>
<rect x="967.1" y="183" width="4.6" height="37.4" fill="#000000" stroke="#00ff00" stroke-width="1"/>
<line x1="977.1" y1="176.9" x2="977.1" y2="186.8" stroke="#00ff00" stroke-width="1"/>
<rect x="974.8" y="178" width="4.6" height="5" fill="#000000" stroke="#00ff00" stroke-width="1"/>
<line x1="984.8" y1="177" x2="984.8" y2="190.6" stroke="#00ff00" stroke-width="1"/>
<rect x="982.5" y="178" width="4.6" height="7.6" fill="#ffffff" stroke="#00ff00" stroke-width="0.9"/>
<line x1="992.5" y1="179.4" x2="992.5" y2="193" stroke="#00ff00" stroke-width="1"/>
<rect x="990.2" y="180.6" width="4.6" height="3.7" fill="#000000" stroke="#00ff00" stroke-width="1"/>
<line x1="1000.2" y1="170.6" x2="1000.2" y2="186.8" stroke="#00ff00" stroke-width="1"/>
<rect x="997.9" y="172" width="4.6" height="9.8" fill="#000000" stroke="#00ff00" stroke-width="1"/>
<line x1="1007.9" y1="165.7" x2="1007.9" y2="176.9" stroke="#00ff00" stroke-width="1"/>
<rect x="1005.6" y="168" width="4.6" height="6.4" fill="#000000" stroke="#00ff00" stroke-width="1"/>
<line x1="1015.6" y1="159.4" x2="1015.6" y2="179.4" stroke="#00ff00" stroke-width="1"/>
<rect x="1013.3" y="164.4" width="4.6" height="7.6" fill="#000000" stroke="#00ff00" stroke-width="1"/>
<line x1="1023.3" y1="163" x2="1023.3" y2="201.8" stroke="#00ff00" stroke-width="1"/>
<rect x="1021" y="164.4" width="4.6" height="28.6" fill="#ffffff" stroke="#00ff00" stroke-width="0.9"/>
<line x1="1031" y1="175.6" x2="1031" y2="201.8" stroke="#00ff00" stroke-width="1"/>
<rect x="1028.7" y="178" width="4.6" height="13.8" fill="#000000" stroke="#00ff00" stroke-width="1"/>
<line x1="1038.7" y1="153" x2="1038.7" y2="181.8" stroke="#00ff00" stroke-width="1"/>
<rect x="1036.4" y="167" width="4.6" height="7.4" fill="#000000" stroke="#00ff00" stroke-width="1"/>
<line x1="1046.4" y1="46" x2="1046.4" y2="173" stroke="#00ff00" stroke-width="1"/>
<rect x="1044.1" y="89.7" width="4.6" height="78.3" fill="#000000" stroke="#00ff00" stroke-width="1"/>
<line x1="1054.1" y1="44.4" x2="1054.1" y2="92.2" stroke="#00ff00" stroke-width="1"/>
<rect x="1051.8" y="85.3" width="4.6" height="3.9" fill="#000000" stroke="#00ff00" stroke-width="1"/>
<line x1="1061.8" y1="66" x2="1061.8" y2="96.7" stroke="#00ff00" stroke-width="1"/>
<rect x="1059.5" y="84.8" width="4.6" height="6.9" fill="#ffffff" stroke="#00ff00" stroke-width="0.9"/>
<line x1="1069.5" y1="91" x2="1069.5" y2="120.9" stroke="#00ff00" stroke-width="1"/>
<rect x="1067.2" y="91.7" width="4.6" height="27.9" fill="#ffffff" stroke="#00ff00" stroke-width="0.9"/>
<polyline points="599.4,107.6 603.43,108.77 608.95,110.34 615.51,112.22 622.67,114.35 629.99,116.63 637,119 643.86,121.54 650.94,124.34 658.18,127.31 665.49,130.33 672.79,133.33 680,136.2 687.27,139.02 694.68,141.89 702.08,144.72 709.32,147.45 716.25,150 722.7,152.3 728.79,154.34 734.66,156.17 740.22,157.83 745.36,159.34 749.99,160.72 754,162 757.06,163.1 759.18,163.98" fill="none" stroke="#ffffff" stroke-width="2.5" stroke-linejoin="round"/>
<polyline points="754,162 757.06,163.1 759.18,163.98 760.78,164.73 762.3,165.46 764.16,166.25 766.8,167.2 770.28,168.33 774.28,169.56 778.62,170.85 783.14,172.18 787.66,173.51 792,174.8 796.2,176.13 800.4,177.52 804.6,178.92 808.8,180.24 813,181.43 817.2,182.4 821.5,183.09 825.92,183.55 830.34,183.87 834.64,184.14 838.7,184.45 842.4,184.9 845.76,185.51 848.87,186.2 851.74,186.94 854.38,187.69 856.8,188.38 859,189 860.8,189.54 862.15,190.04 863.28,190.51 864.41,190.92 865.78,191.29 867.6,191.6 869.89,191.78 872.49,191.82 875.31,191.81 878.29,191.84 881.38,192.01 884.5,192.4 887.74,193.07 891.18,193.96 894.72,194.98 898.26,196.05 901.72,197.09 905,198 908.05,198.83 910.94,199.66 913.74,200.46 916.53,201.18 919.39,201.81 922.4,202.3 925.57,202.61 928.84,202.76 932.19,202.81 935.57,202.82 938.95,202.86 942.3,203 945.6,203.26 948.87,203.6 952.14,203.97 955.45,204.33 958.83,204.62 962.3,204.8 965.98,204.87 969.87,204.86 973.82,204.79 977.7,204.66 981.37,204.5 984.7,204.3 987.59,204.09 990.13,203.87 992.46,203.61 994.73,203.28 997.06,202.85 999.6,202.3 1002.36,201.57 1005.21,200.69 1008.14,199.71 1011.11,198.69 1014.07,197.7 1017,196.8 1019.93,196 1022.89,195.26 1025.85,194.55 1028.78,193.84 1031.64,193.1 1034.4,192.3 1037.07,191.44 1039.67,190.54 1042.21,189.61 1044.68,188.66 1047.08,187.72 1049.4,186.8 1051.67,185.85 1053.89,184.85 1056.04,183.85 1058.09,182.91 1060.02,182.07 1061.8,181.4 1063.48,180.91 1065.09,180.56 1066.58,180.31 1067.89,180.14 1068.98,180.02 1069.8,179.9" fill="none" stroke="#ffffff" stroke-width="1.8" stroke-linejoin="round"/>
<polyline points="599.4,166.2 600.33,164.08 601.66,161.04 603.18,157.63 604.7,154.4 606.25,151.27 607.9,148.03 609.53,145.02 611,142.6 612.11,141.02 612.99,140.04 614,139.27 615.5,138.3 617.79,137.02 620.62,135.65 623.51,134.28 626,133 627.93,131.93 629.56,130.99 631.06,129.98 632.6,128.7 634.11,126.85 635.54,124.62 637.1,122.55 639,121.2 641.44,120.89 644.26,121.27 647.15,121.86 649.8,122.2 652.06,122.13 654.11,121.92 656.16,121.7 658.4,121.6 660.95,121.6 663.69,121.66 666.44,121.83 669,122.2 671.36,122.71 673.62,123.36 675.74,124.25 677.7,125.5 679.44,127.33 680.98,129.62 682.46,131.97 684,134 685.53,135.62 687.02,137.03 688.65,138.28 690.6,139.4 692.99,140.3 695.69,141 698.53,141.7 701.3,142.6 704.02,143.95 706.78,145.57 709.47,147.06 712,148 714.35,148.14 716.57,147.75 718.65,147.21 720.6,146.9 722.3,146.86 723.8,146.9 725.3,147.09 727,147.5 729,148.29 731.16,149.39 733.4,150.46 735.6,151.2 737.72,151.43 739.83,151.36 741.97,151.21 744.2,151.2 746.5,151.39 748.84,151.66 751.31,151.97 754,152.3 756.98,152.72 760.19,153.23 763.5,153.65 766.8,153.8 770.22,153.48 773.76,152.83 777.13,152.22 780,152 782.19,152.3 783.91,152.93 785.42,153.73 787,154.6 788.62,155.54 790.16,156.6 791.79,157.71 793.7,158.8 795.99,159.89 798.54,161.01 801.2,162.07 803.8,163 806.37,163.74 808.97,164.36 811.52,164.91 813.9,165.5 816.05,166.24 818.04,167.06 819.98,167.73 822,168 824.14,167.7 826.34,166.99 828.54,166.16 830.7,165.5 832.84,165.11 834.97,164.82 837.04,164.55 839,164.2 840.77,163.64 842.41,162.96 844.04,162.4 845.8,162.2 847.74,162.47 849.79,163.06 851.89,163.84 854,164.7 856.17,165.57 858.39,166.54 860.57,167.66 862.6,169 864.37,170.75 865.96,172.81 867.55,174.85 869.3,176.5 871.24,177.64 873.29,178.46 875.44,179.12 877.7,179.8 880.15,180.58 882.76,181.36 885.37,182.01 887.8,182.4 889.96,182.48 891.97,182.33 893.94,181.99 896,181.5 898.17,180.55 900.39,179.22 902.66,178.16 905,178 907.49,178.92 910.1,180.57 912.66,182.84 915,185.6 916.97,189.19 918.7,193.56 920.43,197.99 922.4,201.8 924.66,204.8 927.09,207.37 929.67,209.63 932.4,211.7 935.21,213.82 938.13,215.86 941.29,217.4 944.8,218 948.94,217.45 953.55,216.02 958.16,214 962.3,211.7 965.76,208.91 968.81,205.57 971.71,202.2 974.7,199.3 977.82,197.14 980.95,195.39 984.08,193.73 987.2,191.8 990.36,189.38 993.56,186.69 996.67,184.09 999.6,181.9 1002.21,180.23 1004.6,178.9 1006.99,177.82 1009.6,176.9 1012.53,176.18 1015.65,175.68 1018.84,175.31 1022,175 1025.24,174.83 1028.58,174.81 1031.73,174.74 1034.4,174.4 1036.35,173.99 1037.78,173.52 1039.1,172.58 1040.7,170.7 1042.68,167.73 1044.83,163.92 1047.08,159.45 1049.4,154.5 1051.79,148.74 1054.27,142.2 1056.79,135.59 1059.3,129.6 1062.03,124.07 1064.92,118.74 1067.5,114.19 1069.3,111" fill="none" stroke="#e80000" stroke-width="1.05" stroke-linejoin="round"/>
<polygon points="612.2,85.7 617,85.7 617,97.42 624.1,93.16 624.1,98.91 614.6,107 605.1,98.91 605.1,93.16 612.2,97.42" fill="#4682b4"/>
<polygon points="613.81,91.45 616.79,91.45 616.79,99.18 622.14,96.37 622.14,100.17 615.3,105.51 608.46,100.17 608.46,96.37 613.81,99.18" fill="#b0c4de"/>
<polygon points="806.15,139 809.05,139 809.05,145.6 812.8,143.2 812.8,146.44 807.6,151 802.4,146.44 802.4,143.2 806.15,145.6" fill="#b0c4de"/>
<polygon points="821.95,134 824.85,134 824.85,141.15 828.6,138.55 828.6,142.06 823.4,147 818.2,142.06 818.2,138.55 821.95,141.15" fill="#b0c4de"/>
<polygon points="852.55,143.7 855.45,143.7 855.45,150.63 859,148.11 859,151.51 854,156.3 849,151.51 849,148.11 852.55,150.63" fill="#b0c4de"/>
<polygon points="797.85,188 800.95,188 800.95,181.68 804.6,183.97 804.6,180.87 799.4,176.5 794.2,180.87 794.2,183.97 797.85,181.68" fill="#ffb6c1"/>
<polygon points="812.85,193 815.95,193 815.95,185.85 819.6,188.45 819.6,184.94 814.4,180 809.2,184.94 809.2,188.45 812.85,185.85" fill="#ffb6c1"/>
<polygon points="828.75,206.7 831.85,206.7 831.85,199.72 835.6,202.25 835.6,198.83 830.3,194 825,198.83 825,202.25 828.75,199.72" fill="#ffb6c1"/>
<polygon points="882.45,197.5 885.55,197.5 885.55,190.07 889.3,192.78 889.3,189.13 884,184 878.7,189.13 878.7,192.78 882.45,190.07" fill="#ffb6c1"/>
<polygon points="997.2,150.7 1002,150.7 1002,162.97 1009.4,158.5 1009.4,164.53 999.6,173 989.8,164.53 989.8,158.5 997.2,162.97" fill="#3f7cc4"/>
<polygon points="1068.25,76.8 1071.15,76.8 1071.15,83.89 1075.2,81.31 1075.2,84.8 1069.7,89.7 1064.2,84.8 1064.2,81.31 1068.25,83.89" fill="#b0c4de"/>
<polygon points="1044.75,188 1047.85,188 1047.85,179.75 1051.8,182.75 1051.8,178.7 1046.3,173 1040.8,178.7 1040.8,182.75 1044.75,179.75" fill="#ffb6c1"/>
<polygon points="934.8,240 939.8,240 939.8,231.2 945.8,234.4 945.8,230.08 937.3,224 928.8,230.08 928.8,234.4 934.8,231.2" fill="#ff0000"/>
<polygon points="936.2,240 938.4,240 938.4,233.95 941.3,236.15 941.3,233.18 937.3,229 933.3,233.18 933.3,236.15 936.2,233.95" fill="#ffb6c1"/>
<polygon points="1078,32.6 1087.7,32.6 1082.8,37.4" fill="#8090a8"/>
<text x="603" y="43.71" font-family='"Liberation Sans", sans-serif' font-size="9.2" fill="#ffffff" textLength="199" lengthAdjust="spacingAndGlyphs">GBPUSD,M15  1.61024 1.61030 1.60910 1.60913</text>
<text x="603" y="53.31" font-family='"Liberation Sans", sans-serif' font-size="9.2" fill="#ffffff" textLength="45" lengthAdjust="spacingAndGlyphs">0 , 0 , 0 , 1</text>
<line x1="599" y1="277.5" x2="1191.4" y2="277.5" stroke="#8c8c8c" stroke-width="1" stroke-dasharray="2.6 2.6"/>
<polyline points="600,261 603.36,260.56 608.16,259.92 613.68,259.2 619.2,258.52 624,258 627.86,257.61 631.25,257.27 634.51,257.03 637.98,256.92 642,257" fill="none" stroke="#dc143c" stroke-width="2.2" stroke-linejoin="round"/>
<polyline points="642,257 646.69,257.3 651.82,257.79 657.22,258.42 662.67,259.11 668,259.8 673.19,260.49 678.38,261.21 683.57,261.99 688.77,262.81 694,263.7 699.26,264.68 704.55,265.75 709.84,266.86 715.13,267.96 720.4,269 725.64,270 730.86,270.99 736.07,271.94 741.28,272.82 746.5,273.6 751.72,274.26 756.94,274.82 762.16,275.31 767.38,275.76 772.6,276.2 777.82,276.62 783.04,277 788.27,277.35 793.49,277.68 798.7,278 803.9,278.3 809.09,278.59 814.28,278.85 819.48,279.09 824.7,279.3 829.95,279.46 835.21,279.59 840.49,279.69 845.75,279.78 851,279.9 856.16,280.04 861.23,280.19 866.33,280.34 871.55,280.48 877,280.6 882.73,280.68 888.66,280.72 894.74,280.77 900.87,280.85 907,281 913.21,281.26 919.55,281.6 925.88,281.97 932.08,282.32 938,282.6 943.67,282.82 949.17,283.03 954.48,283.18 959.56,283.25 964.4,283.2" fill="none" stroke="#008c00" stroke-width="2.2" stroke-linejoin="round"/>
<polyline points="964.4,283.2 968.8,283.01 972.8,282.69 976.65,282.29 980.63,281.85 985,281.4 989.85,280.93 994.99,280.42 1000.31,279.88 1005.69,279.33 1011,278.8 1016.16,278.31 1021.23,277.86 1026.37,277.39 1031.72,276.85 1037.4,276.2 1044.04,275.32 1051.56,274.25 1059.01,273.14 1065.47,272.17 1070,271.5" fill="none" stroke="#dc143c" stroke-width="2.2" stroke-linejoin="round"/>
<polyline points="600,254.5 602.21,254.1 605.34,253.49 608.98,252.83 612.67,252.28 616,252 618.9,252.01 621.65,252.22 624.35,252.56 627.1,253.01 630,253.5 632.98,253.98 635.97,254.48 639.07,255.09 642.38,255.9" fill="none" stroke="#ff0000" stroke-width="1.1" stroke-linejoin="round"/>
<polyline points="642.38,255.9 646,257 649.95,258.47 654.18,260.25 658.62,262.22 663.25,264.28 668,266.3 672.94,268.39 678.09,270.63 683.38,272.85 688.71,274.93 694,276.7 699.38,278.13 704.92,279.32 710.4,280.33 715.63,281.2 720.4,282 724.75,282.73 728.81,283.35 732.52,283.85 735.84,284.24 738.7,284.5 740.47,284.62 741.2,284.59 741.82,284.45 743.27,284.24 746.5,284" fill="none" stroke="#00c000" stroke-width="1.1" stroke-linejoin="round"/>
<polyline points="746.5,284 752.17,283.66 759.66,283.21 767.96,282.73 776.07,282.3 783,282" fill="none" stroke="#ff0000" stroke-width="1.1" stroke-linejoin="round"/>
<polyline points="783,282 788.2,281.92 792.33,281.99 796.21,282.1 800.66,282.14 806.5,282" fill="none" stroke="#00c000" stroke-width="1.1" stroke-linejoin="round"/>
<polyline points="806.5,282 814.35,281.57 823.68,280.93 833.52,280.24 842.95,279.64 851,279.3" fill="none" stroke="#ff0000" stroke-width="1.1" stroke-linejoin="round"/>
<polyline points="851,279.3 857.32,279.29 862.54,279.51 867.2,279.84 871.84,280.18 877,280.4" fill="none" stroke="#00c000" stroke-width="1.1" stroke-linejoin="round"/>
<polyline points="877,280.4 882.73,280.44 888.66,280.37 894.74,280.3" fill="none" stroke="#ff0000" stroke-width="1.1" stroke-linejoin="round"/>
<polyline points="894.74,280.3 900.87,280.34 907,280.6 913.22,281.28 919.57,282.3 925.91,283.37 932.1,284.2 938,284.5" fill="none" stroke="#00c000" stroke-width="1.1" stroke-linejoin="round"/>
<polyline points="938,284.5 943.52,284.14 948.76,283.3 953.84,282.2 958.88,281.03 964,280 969.23,279.08 974.5,278.15 979.74,277.23 984.93,276.34 990,275.5 994.94,274.68 999.77,273.86 1004.54,273.1 1009.27,272.46 1014,272" fill="none" stroke="#ff0000" stroke-width="1.1" stroke-linejoin="round"/>
<polyline points="1014,272 1018.89,271.83 1023.92,271.92 1028.85,272.08 1033.42,272.17 1037.4,272" fill="none" stroke="#00c000" stroke-width="1.1" stroke-linejoin="round"/>
<polyline points="1037.4,272 1040.51,271.59 1042.92,271.04 1045.04,270.36 1047.26,269.51 1050,268.5 1053.65,267.14 1057.94,265.43 1062.27,263.65 1066.06,262.08 1068.7,261" fill="none" stroke="#ff0000" stroke-width="1.1" stroke-linejoin="round"/>
<line x1="606" y1="243.7" x2="606" y2="249.2" stroke="#ff0000" stroke-width="1"/>
<line x1="603" y1="244.7" x2="606" y2="248.2" stroke="#ff0000" stroke-width="1"/>
<line x1="609" y1="244.7" x2="606" y2="248.2" stroke="#ff0000" stroke-width="1"/>
<text x="603" y="256.31" font-family='"Liberation Sans", sans-serif' font-size="9.2" fill="#ffffff" textLength="148.5" lengthAdjust="spacingAndGlyphs">THVTrix v4.01 0.0000889 0.0002278</text>
<text x="1085.7" y="259.58" font-family='"Liberation Sans", "Noto Sans CJK JP", sans-serif' font-size="15.5" fill="#ff0000" textLength="103" lengthAdjust="spacingAndGlyphs" font-weight="bold">Analyze Sell</text>
<rect x="1121.5" y="244.3" width="5" height="1.2" fill="#e8c020"/>
<rect x="599.6" y="298.8" width="3.05" height="5.7" fill="#008000"/>
<rect x="604.65" y="298.8" width="5.7" height="5.7" fill="#008000"/>
<rect x="612.35" y="298.8" width="5.7" height="5.7" fill="#008000"/>
<rect x="620.05" y="298.8" width="5.7" height="5.7" fill="#008000"/>
<rect x="627.75" y="298.8" width="5.7" height="5.7" fill="#008000"/>
<rect x="635.45" y="298.8" width="5.7" height="5.7" fill="#008000"/>
<rect x="643.15" y="298.8" width="5.7" height="5.7" fill="#ff0000"/>
<rect x="650.85" y="298.8" width="5.7" height="5.7" fill="#ff0000"/>
<rect x="658.55" y="298.8" width="5.7" height="5.7" fill="#ff0000"/>
<rect x="666.25" y="298.8" width="5.7" height="5.7" fill="#008000"/>
<rect x="673.95" y="298.8" width="5.7" height="5.7" fill="#008000"/>
<rect x="681.65" y="298.8" width="5.7" height="5.7" fill="#ff0000"/>
<rect x="689.35" y="298.8" width="5.7" height="5.7" fill="#ff0000"/>
<rect x="697.05" y="298.8" width="5.7" height="5.7" fill="#008000"/>
<rect x="704.75" y="298.8" width="5.7" height="5.7" fill="#008000"/>
<rect x="712.45" y="298.8" width="5.7" height="5.7" fill="#008000"/>
<rect x="720.15" y="298.8" width="5.7" height="5.7" fill="#008000"/>
<rect x="727.85" y="298.8" width="5.7" height="5.7" fill="#ff0000"/>
<rect x="735.55" y="298.8" width="5.7" height="5.7" fill="#008000"/>
<rect x="743.25" y="298.8" width="5.7" height="5.7" fill="#008000"/>
<rect x="750.95" y="298.8" width="5.7" height="5.7" fill="#ff0000"/>
<rect x="758.65" y="298.8" width="5.7" height="5.7" fill="#ff0000"/>
<rect x="766.35" y="298.8" width="5.7" height="5.7" fill="#ff0000"/>
<rect x="774.05" y="298.8" width="5.7" height="5.7" fill="#ff0000"/>
<rect x="781.75" y="298.8" width="5.7" height="5.7" fill="#ff0000"/>
<rect x="789.45" y="298.8" width="5.7" height="5.7" fill="#008000"/>
<rect x="797.15" y="298.8" width="5.7" height="5.7" fill="#008000"/>
<rect x="804.85" y="298.8" width="5.7" height="5.7" fill="#008000"/>
<rect x="812.55" y="298.8" width="5.7" height="5.7" fill="#ff0000"/>
<rect x="820.25" y="298.8" width="5.7" height="5.7" fill="#008000"/>
<rect x="827.95" y="298.8" width="5.7" height="5.7" fill="#008000"/>
<rect x="835.65" y="298.8" width="5.7" height="5.7" fill="#008000"/>
<rect x="843.35" y="298.8" width="5.7" height="5.7" fill="#ff0000"/>
<rect x="851.05" y="298.8" width="5.7" height="5.7" fill="#ff0000"/>
<rect x="858.75" y="298.8" width="5.7" height="5.7" fill="#008000"/>
<rect x="866.45" y="298.8" width="5.7" height="5.7" fill="#008000"/>
<rect x="874.15" y="298.8" width="5.7" height="5.7" fill="#ff0000"/>
<rect x="881.85" y="298.8" width="5.7" height="5.7" fill="#ff0000"/>
<rect x="889.55" y="298.8" width="5.7" height="5.7" fill="#008000"/>
<rect x="897.25" y="298.8" width="5.7" height="5.7" fill="#008000"/>
<rect x="904.95" y="298.8" width="5.7" height="5.7" fill="#ff0000"/>
<rect x="912.65" y="298.8" width="5.7" height="5.7" fill="#ff0000"/>
<rect x="920.35" y="298.8" width="5.7" height="5.7" fill="#ff0000"/>
<rect x="928.05" y="298.8" width="5.7" height="5.7" fill="#ff0000"/>
<rect x="935.75" y="298.8" width="5.7" height="5.7" fill="#008000"/>
<rect x="943.45" y="298.8" width="5.7" height="5.7" fill="#008000"/>
<rect x="951.15" y="298.8" width="5.7" height="5.7" fill="#008000"/>
<rect x="958.85" y="298.8" width="5.7" height="5.7" fill="#008000"/>
<rect x="966.55" y="298.8" width="5.7" height="5.7" fill="#008000"/>
<rect x="974.25" y="298.8" width="5.7" height="5.7" fill="#008000"/>
<rect x="981.95" y="298.8" width="5.7" height="5.7" fill="#008000"/>
<rect x="989.65" y="298.8" width="5.7" height="5.7" fill="#008000"/>
<rect x="997.35" y="298.8" width="5.7" height="5.7" fill="#ff0000"/>
<rect x="1005.05" y="298.8" width="5.7" height="5.7" fill="#ff0000"/>
<rect x="1012.75" y="298.8" width="5.7" height="5.7" fill="#ff0000"/>
<rect x="1020.45" y="298.8" width="5.7" height="5.7" fill="#ff0000"/>
<rect x="1028.15" y="298.8" width="5.7" height="5.7" fill="#ff0000"/>
<rect x="1035.85" y="298.8" width="5.7" height="5.7" fill="#ff0000"/>
<rect x="1043.55" y="298.8" width="5.7" height="5.7" fill="#008000"/>
<rect x="1051.25" y="298.8" width="5.7" height="5.7" fill="#008000"/>
<rect x="1058.95" y="298.8" width="5.7" height="5.7" fill="#008000"/>
<rect x="1066.65" y="298.8" width="5.7" height="5.7" fill="#ff0000"/>
<rect x="599.6" y="306.5" width="3.05" height="5.7" fill="#008000"/>
<rect x="604.65" y="306.5" width="5.7" height="5.7" fill="#008000"/>
<rect x="612.35" y="306.5" width="5.7" height="5.7" fill="#ff0000"/>
<rect x="620.05" y="306.5" width="5.7" height="5.7" fill="#ff0000"/>
<rect x="627.75" y="306.5" width="5.7" height="5.7" fill="#ff0000"/>
<rect x="635.45" y="306.5" width="5.7" height="5.7" fill="#ff0000"/>
<rect x="643.15" y="306.5" width="5.7" height="5.7" fill="#ff0000"/>
<rect x="650.85" y="306.5" width="5.7" height="5.7" fill="#ff0000"/>
<rect x="658.55" y="306.5" width="5.7" height="5.7" fill="#ff0000"/>
<rect x="666.25" y="306.5" width="5.7" height="5.7" fill="#ff0000"/>
<rect x="673.95" y="306.5" width="5.7" height="5.7" fill="#ff0000"/>
<rect x="681.65" y="306.5" width="5.7" height="5.7" fill="#ff0000"/>
<rect x="689.35" y="306.5" width="5.7" height="5.7" fill="#ff0000"/>
<rect x="697.05" y="306.5" width="5.7" height="5.7" fill="#ff0000"/>
<rect x="704.75" y="306.5" width="5.7" height="5.7" fill="#ff0000"/>
<rect x="712.45" y="306.5" width="5.7" height="5.7" fill="#ff0000"/>
<rect x="720.15" y="306.5" width="5.7" height="5.7" fill="#ff0000"/>
<rect x="727.85" y="306.5" width="5.7" height="5.7" fill="#ff0000"/>
<rect x="735.55" y="306.5" width="5.7" height="5.7" fill="#008000"/>
<rect x="743.25" y="306.5" width="5.7" height="5.7" fill="#008000"/>
<rect x="750.95" y="306.5" width="5.7" height="5.7" fill="#008000"/>
<rect x="758.65" y="306.5" width="5.7" height="5.7" fill="#008000"/>
<rect x="766.35" y="306.5" width="5.7" height="5.7" fill="#008000"/>
<rect x="774.05" y="306.5" width="5.7" height="5.7" fill="#008000"/>
<rect x="781.75" y="306.5" width="5.7" height="5.7" fill="#ff0000"/>
<rect x="789.45" y="306.5" width="5.7" height="5.7" fill="#ff0000"/>
<rect x="797.15" y="306.5" width="5.7" height="5.7" fill="#ff0000"/>
<rect x="804.85" y="306.5" width="5.7" height="5.7" fill="#ff0000"/>
<rect x="812.55" y="306.5" width="5.7" height="5.7" fill="#ff0000"/>
<rect x="820.25" y="306.5" width="5.7" height="5.7" fill="#ff0000"/>
<rect x="827.95" y="306.5" width="5.7" height="5.7" fill="#008000"/>
<rect x="835.65" y="306.5" width="5.7" height="5.7" fill="#008000"/>
<rect x="843.35" y="306.5" width="5.7" height="5.7" fill="#008000"/>
<rect x="851.05" y="306.5" width="5.7" height="5.7" fill="#008000"/>
<rect x="858.75" y="306.5" width="5.7" height="5.7" fill="#008000"/>
<rect x="866.45" y="306.5" width="5.7" height="5.7" fill="#008000"/>
<rect x="874.15" y="306.5" width="5.7" height="5.7" fill="#ff0000"/>
<rect x="881.85" y="306.5" width="5.7" height="5.7" fill="#ff0000"/>
<rect x="889.55" y="306.5" width="5.7" height="5.7" fill="#ff0000"/>
<rect x="897.25" y="306.5" width="5.7" height="5.7" fill="#ff0000"/>
<rect x="904.95" y="306.5" width="5.7" height="5.7" fill="#ff0000"/>
<rect x="912.65" y="306.5" width="5.7" height="5.7" fill="#ff0000"/>
<rect x="920.35" y="306.5" width="5.7" height="5.7" fill="#ff0000"/>
<rect x="928.05" y="306.5" width="5.7" height="5.7" fill="#ff0000"/>
<rect x="935.75" y="306.5" width="5.7" height="5.7" fill="#ff0000"/>
<rect x="943.45" y="306.5" width="5.7" height="5.7" fill="#ff0000"/>
<rect x="951.15" y="306.5" width="5.7" height="5.7" fill="#008000"/>
<rect x="958.85" y="306.5" width="5.7" height="5.7" fill="#008000"/>
<rect x="966.55" y="306.5" width="5.7" height="5.7" fill="#008000"/>
<rect x="974.25" y="306.5" width="5.7" height="5.7" fill="#008000"/>
<rect x="981.95" y="306.5" width="5.7" height="5.7" fill="#008000"/>
<rect x="989.65" y="306.5" width="5.7" height="5.7" fill="#008000"/>
<rect x="997.35" y="306.5" width="5.7" height="5.7" fill="#008000"/>
<rect x="1005.05" y="306.5" width="5.7" height="5.7" fill="#008000"/>
<rect x="1012.75" y="306.5" width="5.7" height="5.7" fill="#ff0000"/>
<rect x="1020.45" y="306.5" width="5.7" height="5.7" fill="#ff0000"/>
<rect x="1028.15" y="306.5" width="5.7" height="5.7" fill="#ff0000"/>
<rect x="1035.85" y="306.5" width="5.7" height="5.7" fill="#ff0000"/>
<rect x="1043.55" y="306.5" width="5.7" height="5.7" fill="#ff0000"/>
<rect x="1051.25" y="306.5" width="5.7" height="5.7" fill="#ff0000"/>
<rect x="1058.95" y="306.5" width="5.7" height="5.7" fill="#ff0000"/>
<rect x="1066.65" y="306.5" width="5.7" height="5.7" fill="#ff0000"/>
<rect x="599.6" y="314.2" width="3.05" height="5.7" fill="#008000"/>
<rect x="604.65" y="314.2" width="5.7" height="5.7" fill="#008000"/>
<rect x="612.35" y="314.2" width="5.7" height="5.7" fill="#008000"/>
<rect x="620.05" y="314.2" width="5.7" height="5.7" fill="#008000"/>
<rect x="627.75" y="314.2" width="5.7" height="5.7" fill="#008000"/>
<rect x="635.45" y="314.2" width="5.7" height="5.7" fill="#008000"/>
<rect x="643.15" y="314.2" width="5.7" height="5.7" fill="#ff0000"/>
<rect x="650.85" y="314.2" width="5.7" height="5.7" fill="#ff0000"/>
<rect x="658.55" y="314.2" width="5.7" height="5.7" fill="#ff0000"/>
<rect x="666.25" y="314.2" width="5.7" height="5.7" fill="#ff0000"/>
<rect x="673.95" y="314.2" width="5.7" height="5.7" fill="#ff0000"/>
<rect x="681.65" y="314.2" width="5.7" height="5.7" fill="#ff0000"/>
<rect x="689.35" y="314.2" width="5.7" height="5.7" fill="#ff0000"/>
<rect x="697.05" y="314.2" width="5.7" height="5.7" fill="#ff0000"/>
<rect x="704.75" y="314.2" width="5.7" height="5.7" fill="#ff0000"/>
<rect x="712.45" y="314.2" width="5.7" height="5.7" fill="#ff0000"/>
<rect x="720.15" y="314.2" width="5.7" height="5.7" fill="#ff0000"/>
<rect x="727.85" y="314.2" width="5.7" height="5.7" fill="#ff0000"/>
<rect x="735.55" y="314.2" width="5.7" height="5.7" fill="#ff0000"/>
<rect x="743.25" y="314.2" width="5.7" height="5.7" fill="#ff0000"/>
<rect x="750.95" y="314.2" width="5.7" height="5.7" fill="#ff0000"/>
<rect x="758.65" y="314.2" width="5.7" height="5.7" fill="#ff0000"/>
<rect x="766.35" y="314.2" width="5.7" height="5.7" fill="#ff0000"/>
<rect x="774.05" y="314.2" width="5.7" height="5.7" fill="#ff0000"/>
<rect x="781.75" y="314.2" width="5.7" height="5.7" fill="#ff0000"/>
<rect x="789.45" y="314.2" width="5.7" height="5.7" fill="#ff0000"/>
<rect x="797.15" y="314.2" width="5.7" height="5.7" fill="#ff0000"/>
<rect x="804.85" y="314.2" width="5.7" height="5.7" fill="#ff0000"/>
<rect x="812.55" y="314.2" width="5.7" height="5.7" fill="#ff0000"/>
<rect x="820.25" y="314.2" width="5.7" height="5.7" fill="#ff0000"/>
<rect x="827.95" y="314.2" width="5.7" height="5.7" fill="#ff0000"/>
<rect x="835.65" y="314.2" width="5.7" height="5.7" fill="#ff0000"/>
<rect x="843.35" y="314.2" width="5.7" height="5.7" fill="#ff0000"/>
<rect x="851.05" y="314.2" width="5.7" height="5.7" fill="#ff0000"/>
<rect x="858.75" y="314.2" width="5.7" height="5.7" fill="#008000"/>
<rect x="866.45" y="314.2" width="5.7" height="5.7" fill="#008000"/>
<rect x="874.15" y="314.2" width="5.7" height="5.7" fill="#008000"/>
<rect x="881.85" y="314.2" width="5.7" height="5.7" fill="#008000"/>
<rect x="889.55" y="314.2" width="5.7" height="5.7" fill="#008000"/>
<rect x="897.25" y="314.2" width="5.7" height="5.7" fill="#008000"/>
<rect x="904.95" y="314.2" width="5.7" height="5.7" fill="#008000"/>
<rect x="912.65" y="314.2" width="5.7" height="5.7" fill="#008000"/>
<rect x="920.35" y="314.2" width="5.7" height="5.7" fill="#ff0000"/>
<rect x="928.05" y="314.2" width="5.7" height="5.7" fill="#ff0000"/>
<rect x="935.75" y="314.2" width="5.7" height="5.7" fill="#ff0000"/>
<rect x="943.45" y="314.2" width="5.7" height="5.7" fill="#ff0000"/>
<rect x="951.15" y="314.2" width="5.7" height="5.7" fill="#008000"/>
<rect x="958.85" y="314.2" width="5.7" height="5.7" fill="#008000"/>
<rect x="966.55" y="314.2" width="5.7" height="5.7" fill="#008000"/>
<rect x="974.25" y="314.2" width="5.7" height="5.7" fill="#008000"/>
<rect x="981.95" y="314.2" width="5.7" height="5.7" fill="#008000"/>
<rect x="989.65" y="314.2" width="5.7" height="5.7" fill="#008000"/>
<rect x="997.35" y="314.2" width="5.7" height="5.7" fill="#008000"/>
<rect x="1005.05" y="314.2" width="5.7" height="5.7" fill="#008000"/>
<rect x="1012.75" y="314.2" width="5.7" height="5.7" fill="#008000"/>
<rect x="1020.45" y="314.2" width="5.7" height="5.7" fill="#008000"/>
<rect x="1028.15" y="314.2" width="5.7" height="5.7" fill="#008000"/>
<rect x="1035.85" y="314.2" width="5.7" height="5.7" fill="#008000"/>
<rect x="1043.55" y="314.2" width="5.7" height="5.7" fill="#008000"/>
<rect x="1051.25" y="314.2" width="5.7" height="5.7" fill="#008000"/>
<rect x="1058.95" y="314.2" width="5.7" height="5.7" fill="#008000"/>
<rect x="1066.65" y="314.2" width="5.7" height="5.7" fill="#008000"/>
<rect x="599.6" y="321.9" width="3.05" height="5.7" fill="#008000"/>
<rect x="604.65" y="321.9" width="5.7" height="5.7" fill="#008000"/>
<rect x="612.35" y="321.9" width="5.7" height="5.7" fill="#008000"/>
<rect x="620.05" y="321.9" width="5.7" height="5.7" fill="#008000"/>
<rect x="627.75" y="321.9" width="5.7" height="5.7" fill="#008000"/>
<rect x="635.45" y="321.9" width="5.7" height="5.7" fill="#008000"/>
<rect x="643.15" y="321.9" width="5.7" height="5.7" fill="#008000"/>
<rect x="650.85" y="321.9" width="5.7" height="5.7" fill="#008000"/>
<rect x="658.55" y="321.9" width="5.7" height="5.7" fill="#008000"/>
<rect x="666.25" y="321.9" width="5.7" height="5.7" fill="#008000"/>
<rect x="673.95" y="321.9" width="5.7" height="5.7" fill="#008000"/>
<rect x="681.65" y="321.9" width="5.7" height="5.7" fill="#008000"/>
<rect x="689.35" y="321.9" width="5.7" height="5.7" fill="#008000"/>
<rect x="697.05" y="321.9" width="5.7" height="5.7" fill="#008000"/>
<rect x="704.75" y="321.9" width="5.7" height="5.7" fill="#008000"/>
<rect x="712.45" y="321.9" width="5.7" height="5.7" fill="#008000"/>
<rect x="720.15" y="321.9" width="5.7" height="5.7" fill="#008000"/>
<rect x="727.85" y="321.9" width="5.7" height="5.7" fill="#008000"/>
<rect x="735.55" y="321.9" width="5.7" height="5.7" fill="#008000"/>
<rect x="743.25" y="321.9" width="5.7" height="5.7" fill="#008000"/>
<rect x="750.95" y="321.9" width="5.7" height="5.7" fill="#008000"/>
<rect x="758.65" y="321.9" width="5.7" height="5.7" fill="#008000"/>
<rect x="766.35" y="321.9" width="5.7" height="5.7" fill="#008000"/>
<rect x="774.05" y="321.9" width="5.7" height="5.7" fill="#008000"/>
<rect x="781.75" y="321.9" width="5.7" height="5.7" fill="#008000"/>
<rect x="789.45" y="321.9" width="5.7" height="5.7" fill="#008000"/>
<rect x="797.15" y="321.9" width="5.7" height="5.7" fill="#008000"/>
<rect x="804.85" y="321.9" width="5.7" height="5.7" fill="#008000"/>
<rect x="812.55" y="321.9" width="5.7" height="5.7" fill="#008000"/>
<rect x="820.25" y="321.9" width="5.7" height="5.7" fill="#008000"/>
<rect x="827.95" y="321.9" width="5.7" height="5.7" fill="#008000"/>
<rect x="835.65" y="321.9" width="5.7" height="5.7" fill="#008000"/>
<rect x="843.35" y="321.9" width="5.7" height="5.7" fill="#008000"/>
<rect x="851.05" y="321.9" width="5.7" height="5.7" fill="#008000"/>
<rect x="858.75" y="321.9" width="5.7" height="5.7" fill="#008000"/>
<rect x="866.45" y="321.9" width="5.7" height="5.7" fill="#008000"/>
<rect x="874.15" y="321.9" width="5.7" height="5.7" fill="#008000"/>
<rect x="881.85" y="321.9" width="5.7" height="5.7" fill="#008000"/>
<rect x="889.55" y="321.9" width="5.7" height="5.7" fill="#008000"/>
<rect x="897.25" y="321.9" width="5.7" height="5.7" fill="#008000"/>
<rect x="904.95" y="321.9" width="5.7" height="5.7" fill="#008000"/>
<rect x="912.65" y="321.9" width="5.7" height="5.7" fill="#008000"/>
<rect x="920.35" y="321.9" width="5.7" height="5.7" fill="#008000"/>
<rect x="928.05" y="321.9" width="5.7" height="5.7" fill="#008000"/>
<rect x="935.75" y="321.9" width="5.7" height="5.7" fill="#008000"/>
<rect x="943.45" y="321.9" width="5.7" height="5.7" fill="#008000"/>
<rect x="951.15" y="321.9" width="5.7" height="5.7" fill="#008000"/>
<rect x="958.85" y="321.9" width="5.7" height="5.7" fill="#008000"/>
<rect x="966.55" y="321.9" width="5.7" height="5.7" fill="#008000"/>
<rect x="974.25" y="321.9" width="5.7" height="5.7" fill="#008000"/>
<rect x="981.95" y="321.9" width="5.7" height="5.7" fill="#008000"/>
<rect x="989.65" y="321.9" width="5.7" height="5.7" fill="#008000"/>
<rect x="997.35" y="321.9" width="5.7" height="5.7" fill="#008000"/>
<rect x="1005.05" y="321.9" width="5.7" height="5.7" fill="#008000"/>
<rect x="1012.75" y="321.9" width="5.7" height="5.7" fill="#008000"/>
<rect x="1020.45" y="321.9" width="5.7" height="5.7" fill="#008000"/>
<rect x="1028.15" y="321.9" width="5.7" height="5.7" fill="#008000"/>
<rect x="1035.85" y="321.9" width="5.7" height="5.7" fill="#008000"/>
<rect x="1043.55" y="321.9" width="5.7" height="5.7" fill="#008000"/>
<rect x="1051.25" y="321.9" width="5.7" height="5.7" fill="#008000"/>
<rect x="1058.95" y="321.9" width="5.7" height="5.7" fill="#008000"/>
<rect x="1066.65" y="321.9" width="5.7" height="5.7" fill="#008000"/>
<text x="603" y="304.11" font-family='"Liberation Sans", sans-serif' font-size="9.2" fill="#ffffff" textLength="304" lengthAdjust="spacingAndGlyphs">StochBars (5,3,3) 2147483647 4 2147483647 3 2 2147483647 1 2147483647</text>
</g>
<line x1="599" y1="32.6" x2="1191.4" y2="32.6" stroke="#e8e8e8" stroke-width="1.1"/>
<line x1="599" y1="241.5" x2="1191.4" y2="241.5" stroke="#e8e8e8" stroke-width="1.1"/>
<line x1="599" y1="244" x2="1191.4" y2="244" stroke="#e8e8e8" stroke-width="1.1"/>
<line x1="599" y1="287.8" x2="1191.4" y2="287.8" stroke="#e8e8e8" stroke-width="1.1"/>
<line x1="599" y1="290.5" x2="1191.4" y2="290.5" stroke="#e8e8e8" stroke-width="1.1"/>
<line x1="599" y1="333.4" x2="1191.4" y2="333.4" stroke="#e8e8e8" stroke-width="1.1"/>
<line x1="599" y1="32.6" x2="599" y2="333.4" stroke="#e8e8e8" stroke-width="1.1"/>
<line x1="1191.4" y1="32.6" x2="1191.4" y2="333.4" stroke="#e8e8e8" stroke-width="1.1"/>
<line x1="1191.4" y1="52.2" x2="1194.4" y2="52.2" stroke="#e8e8e8" stroke-width="1"/>
<text x="1196.6" y="55.51" font-family='"Liberation Sans", sans-serif' font-size="9.2" fill="#ffffff" textLength="30.94" lengthAdjust="spacingAndGlyphs">1.61175</text>
<line x1="1191.4" y1="83.1" x2="1194.4" y2="83.1" stroke="#e8e8e8" stroke-width="1"/>
<text x="1196.6" y="86.41" font-family='"Liberation Sans", sans-serif' font-size="9.2" fill="#ffffff" textLength="31.59" lengthAdjust="spacingAndGlyphs">1.61055</text>
<line x1="1191.4" y1="114" x2="1194.4" y2="114" stroke="#e8e8e8" stroke-width="1"/>
<text x="1196.6" y="117.31" font-family='"Liberation Sans", sans-serif' font-size="9.2" fill="#ffffff" textLength="31.59" lengthAdjust="spacingAndGlyphs">1.60935</text>
<line x1="1191.4" y1="145" x2="1194.4" y2="145" stroke="#e8e8e8" stroke-width="1"/>
<text x="1196.6" y="148.31" font-family='"Liberation Sans", sans-serif' font-size="9.2" fill="#ffffff" textLength="31.59" lengthAdjust="spacingAndGlyphs">1.60810</text>
<line x1="1191.4" y1="176" x2="1194.4" y2="176" stroke="#e8e8e8" stroke-width="1"/>
<text x="1196.6" y="179.31" font-family='"Liberation Sans", sans-serif' font-size="9.2" fill="#ffffff" textLength="31.59" lengthAdjust="spacingAndGlyphs">1.60685</text>
<line x1="1191.4" y1="207.2" x2="1194.4" y2="207.2" stroke="#e8e8e8" stroke-width="1"/>
<text x="1196.6" y="210.51" font-family='"Liberation Sans", sans-serif' font-size="9.2" fill="#ffffff" textLength="31.59" lengthAdjust="spacingAndGlyphs">1.60565</text>
<line x1="1191.4" y1="238.2" x2="1194.4" y2="238.2" stroke="#e8e8e8" stroke-width="1"/>
<text x="1196.6" y="241.51" font-family='"Liberation Sans", sans-serif' font-size="9.2" fill="#ffffff" textLength="31.59" lengthAdjust="spacingAndGlyphs">1.60445</text>
<line x1="1191.4" y1="250.6" x2="1194.4" y2="250.6" stroke="#e8e8e8" stroke-width="1"/>
<text x="1196.6" y="253.91" font-family='"Liberation Sans", sans-serif' font-size="9.2" fill="#ffffff" textLength="31.59" lengthAdjust="spacingAndGlyphs">0.00045</text>
<line x1="1191.4" y1="282.5" x2="1194.4" y2="282.5" stroke="#e8e8e8" stroke-width="1"/>
<text x="1196.6" y="285.81" font-family='"Liberation Sans", sans-serif' font-size="9.2" fill="#ffffff" textLength="29.64" lengthAdjust="spacingAndGlyphs">-0.0001</text>
<line x1="1191.4" y1="297.6" x2="1194.4" y2="297.6" stroke="#e8e8e8" stroke-width="1"/>
<text x="1196.6" y="300.91" font-family='"Liberation Sans", sans-serif' font-size="9.2" fill="#ffffff" textLength="4.86" lengthAdjust="spacingAndGlyphs">6</text>
<line x1="1191.4" y1="327.6" x2="1194.4" y2="327.6" stroke="#e8e8e8" stroke-width="1"/>
<text x="1196.6" y="330.91" font-family='"Liberation Sans", sans-serif' font-size="9.2" fill="#ffffff" textLength="4.86" lengthAdjust="spacingAndGlyphs">0</text>
<line x1="599.5" y1="333.4" x2="599.5" y2="336.4" stroke="#e8e8e8" stroke-width="1"/>
<text x="599" y="345.91" font-family='"Liberation Sans", sans-serif' font-size="9.2" fill="#ffffff" textLength="48.42" lengthAdjust="spacingAndGlyphs">15 Mar 2011</text>
<line x1="660.9" y1="333.4" x2="660.9" y2="336.4" stroke="#e8e8e8" stroke-width="1"/>
<text x="660.4" y="345.91" font-family='"Liberation Sans", sans-serif' font-size="9.2" fill="#ffffff" textLength="51.5" lengthAdjust="spacingAndGlyphs">15 Mar 20:30</text>
<line x1="722.7" y1="333.4" x2="722.7" y2="336.4" stroke="#e8e8e8" stroke-width="1"/>
<text x="722.2" y="345.91" font-family='"Liberation Sans", sans-serif' font-size="9.2" fill="#ffffff" textLength="51.5" lengthAdjust="spacingAndGlyphs">15 Mar 22:30</text>
<line x1="784.4" y1="333.4" x2="784.4" y2="336.4" stroke="#e8e8e8" stroke-width="1"/>
<text x="783.9" y="345.91" font-family='"Liberation Sans", sans-serif' font-size="9.2" fill="#ffffff" textLength="51.5" lengthAdjust="spacingAndGlyphs">16 Mar 00:30</text>
<line x1="846.1" y1="333.4" x2="846.1" y2="336.4" stroke="#e8e8e8" stroke-width="1"/>
<text x="845.6" y="345.91" font-family='"Liberation Sans", sans-serif' font-size="9.2" fill="#ffffff" textLength="51.5" lengthAdjust="spacingAndGlyphs">16 Mar 02:30</text>
<line x1="907.7" y1="333.4" x2="907.7" y2="336.4" stroke="#e8e8e8" stroke-width="1"/>
<text x="907.2" y="345.91" font-family='"Liberation Sans", sans-serif' font-size="9.2" fill="#ffffff" textLength="51.5" lengthAdjust="spacingAndGlyphs">16 Mar 04:30</text>
<line x1="969.3" y1="333.4" x2="969.3" y2="336.4" stroke="#e8e8e8" stroke-width="1"/>
<text x="968.8" y="345.91" font-family='"Liberation Sans", sans-serif' font-size="9.2" fill="#ffffff" textLength="51.5" lengthAdjust="spacingAndGlyphs">16 Mar 06:30</text>
<line x1="1031.1" y1="333.4" x2="1031.1" y2="336.4" stroke="#e8e8e8" stroke-width="1"/>
<text x="1030.6" y="345.91" font-family='"Liberation Sans", sans-serif' font-size="9.2" fill="#ffffff" textLength="51.5" lengthAdjust="spacingAndGlyphs">16 Mar 08:30</text>
<rect x="1193" y="114.2" width="33" height="10.6" fill="#ffffff"/>
<text x="1196.6" y="122.91" font-family='"Liberation Sans", sans-serif' font-size="9.2" fill="#000000" textLength="31.59" lengthAdjust="spacingAndGlyphs">1.60913</text>
<rect x="1193.6" y="272.2" width="32" height="10" fill="#808080"/>
<text x="1196.6" y="280.61" font-family='"Liberation Sans", sans-serif' font-size="9.2" fill="#000000" textLength="31.59" lengthAdjust="spacingAndGlyphs">0.00000</text>
<path d="M611.8 560 L611.8 360.5 Q611.8 356.5 615.8 356.5 L1215.6 356.5 Q1219.6 356.5 1219.6 360.5 L1219.6 560 Z" fill="#7686dc"/>
<rect x="611.8" y="554.8" width="607.8" height="5.2" fill="url(#bbI)"/>
<path d="M611.8 384.5 L611.8 360.5 Q611.8 356.5 615.8 356.5 L1215.6 356.5 Q1219.6 356.5 1219.6 360.5 L1219.6 384.5 Z" fill="url(#gI)"/>
<rect x="614.5" y="384.5" width="600.7" height="169.9" fill="#a9a695"/>
<rect x="615.7" y="385.7" width="598.5" height="167.5" fill="#000000"/>
<rect x="1214.1" y="385.1" width="1.2" height="169.3" fill="#f4f2e8"/>
<rect x="614.5" y="553.2" width="600.7" height="1.3" fill="#f4f2e8"/>
<rect x="618" y="365.8" width="8.6" height="6.2" fill="#eef3fd"/>
<rect x="619.2" y="368" width="2.2" height="1.2" fill="#6f8fe0"/>
<rect x="622.4" y="367.4" width="2.4" height="1.1" fill="#6f8fe0"/>
<rect x="619.4" y="370" width="1.4" height="1" fill="#6f8fe0"/>
<rect x="621" y="370.8" width="8.2" height="6.4" fill="#ffffff" stroke="#6f8fe0" stroke-width="0.5"/>
<path d="M622.4 372.8 l1.3 3 l1.3 -3 M625.2 375.8 l1.2 -3 l1.2 3" fill="none" stroke="#6f8fe0" stroke-width="0.9"/>
<text x="635.7" y="375.7" font-family='"Liberation Sans", "Noto Sans CJK JP", sans-serif' font-size="11.4" fill="#d9e4fa" textLength="79.6" lengthAdjust="spacing" font-weight="bold">AUDUSD,M15</text>
<rect x="1150.7" y="361.6" width="19.2" height="19.2" fill="url(#bI)" stroke="#c9d6f6" stroke-width="0.9" rx="2.6"/>
<rect x="1155.3" y="373.8" width="6.6" height="2.6" fill="#ffffff"/>
<rect x="1172.8" y="361.6" width="19.2" height="19.2" fill="url(#bI)" stroke="#c9d6f6" stroke-width="0.9" rx="2.6"/>
<rect x="1177.4" y="366.2" width="9.6" height="9.2" fill="none" stroke="#ffffff" stroke-width="1.2"/>
<rect x="1177.2" y="365.8" width="10" height="2.6" fill="#ffffff"/>
<rect x="1194.9" y="361.6" width="19.2" height="19.2" fill="url(#cI)" stroke="#c9d6f6" stroke-width="0.9" rx="2.6"/>
<line x1="1199.9" y1="366.6" x2="1209.1" y2="375.8" stroke="#ffffff" stroke-width="2"/>
<line x1="1209.1" y1="366.6" x2="1199.9" y2="375.8" stroke="#ffffff" stroke-width="2"/>
<clipPath id="cp3"><rect x="618.3" y="388.4" width="558.5" height="110"/></clipPath><g clip-path="url(#cp3)">
<line x1="618.3" y1="456.4" x2="1176.8" y2="456.4" stroke="#444c56" stroke-width="2"/>
<polyline points="794.3,389.9 827,396.4 851.7,396.4 857,407.6 881.7,407.6 888.2,429.4 911.7,430.2 918.7,441.5 942.2,442 950,447.2 974.8,446.7 981.3,437.6 1007.4,437.6 1011.3,431 1034.8,430.5 1042.6,422 1060.9,422 1063.5,423.2" fill="none" stroke="#2e8b57" stroke-width="1.1" stroke-linejoin="round" stroke-dasharray="4 3"/>
<polyline points="911,384 918.7,398 942.2,398.5 950,406.3 973.5,406.3 981.3,394.6 1004.8,394.6 1012,386" fill="none" stroke="#2e8b57" stroke-width="1.1" stroke-linejoin="round"/>
<line x1="619.6" y1="470.7" x2="850.4" y2="448" stroke="#a82020" stroke-width="0.95"/>
<polyline points="619.6,435 678.2,463.7 725.2,485.8 756.5,497.5" fill="none" stroke="#ffffff" stroke-width="2.6" stroke-linejoin="round"/>
<line x1="665.2" y1="492.4" x2="665.2" y2="498" stroke="#00ff00" stroke-width="1"/>
<line x1="688.3" y1="485.8" x2="688.3" y2="498" stroke="#00ff00" stroke-width="1"/>
<rect x="686" y="491" width="4.6" height="7" fill="#000000" stroke="#00ff00" stroke-width="1"/>
<line x1="696" y1="489" x2="696" y2="498" stroke="#00ff00" stroke-width="1"/>
<rect x="693.7" y="490.5" width="4.6" height="7.5" fill="#ffffff" stroke="#00ff00" stroke-width="0.9"/>
<line x1="811.5" y1="491" x2="811.5" y2="498" stroke="#00ff00" stroke-width="1"/>
<rect x="809.2" y="493.7" width="4.6" height="4.3" fill="#000000" stroke="#00ff00" stroke-width="1"/>
<line x1="819.2" y1="463.7" x2="819.2" y2="498" stroke="#00ff00" stroke-width="1"/>
<rect x="816.9" y="469.7" width="4.6" height="22.7" fill="#000000" stroke="#00ff00" stroke-width="1"/>
<line x1="826.9" y1="455.8" x2="826.9" y2="470" stroke="#00ff00" stroke-width="1"/>
<rect x="824.6" y="457" width="4.6" height="12" fill="#000000" stroke="#00ff00" stroke-width="1"/>
<line x1="834.6" y1="448" x2="834.6" y2="465" stroke="#00ff00" stroke-width="1"/>
<rect x="832.3" y="448.8" width="4.6" height="8.9" fill="#000000" stroke="#00ff00" stroke-width="1"/>
<line x1="842.3" y1="449.3" x2="842.3" y2="470" stroke="#00ff00" stroke-width="1"/>
<rect x="840" y="450.6" width="4.6" height="7.1" fill="#ffffff" stroke="#00ff00" stroke-width="0.9"/>
<line x1="850" y1="448" x2="850" y2="469" stroke="#00ff00" stroke-width="1"/>
<rect x="847.7" y="448.8" width="4.6" height="8.2" fill="#000000" stroke="#00ff00" stroke-width="1"/>
<line x1="857.7" y1="448.8" x2="857.7" y2="492.4" stroke="#00ff00" stroke-width="1"/>
<rect x="855.4" y="448.8" width="4.6" height="42.2" fill="#ffffff" stroke="#00ff00" stroke-width="0.9"/>
<line x1="865.4" y1="467.6" x2="865.4" y2="495" stroke="#00ff00" stroke-width="1"/>
<rect x="863.1" y="475.4" width="4.6" height="14.4" fill="#000000" stroke="#00ff00" stroke-width="1"/>
<line x1="873.1" y1="467.6" x2="873.1" y2="498" stroke="#00ff00" stroke-width="1"/>
<rect x="870.8" y="475.4" width="4.6" height="8.4" fill="#ffffff" stroke="#00ff00" stroke-width="0.9"/>
<line x1="880.8" y1="469" x2="880.8" y2="487" stroke="#00ff00" stroke-width="1"/>
<rect x="878.5" y="479.3" width="4.6" height="3.9" fill="#000000" stroke="#00ff00" stroke-width="1"/>
<line x1="888.5" y1="475.4" x2="888.5" y2="485.8" stroke="#00ff00" stroke-width="1"/>
<rect x="886.2" y="480" width="4.6" height="1.2" fill="#000000" stroke="#00ff00" stroke-width="1"/>
<line x1="896.2" y1="469.7" x2="896.2" y2="489.8" stroke="#00ff00" stroke-width="1"/>
<rect x="893.9" y="472" width="4.6" height="8.6" fill="#000000" stroke="#00ff00" stroke-width="1"/>
<line x1="903.9" y1="472" x2="903.9" y2="498" stroke="#00ff00" stroke-width="1"/>
<rect x="901.6" y="472.3" width="4.6" height="24" fill="#ffffff" stroke="#00ff00" stroke-width="0.9"/>
<line x1="911.6" y1="478" x2="911.6" y2="498" stroke="#00ff00" stroke-width="1"/>
<rect x="909.3" y="495" width="4.6" height="3" fill="#ffffff" stroke="#00ff00" stroke-width="0.9"/>
<line x1="934.7" y1="495.5" x2="934.7" y2="498" stroke="#00ff00" stroke-width="1"/>
<line x1="988.6" y1="475.4" x2="988.6" y2="498" stroke="#00ff00" stroke-width="1"/>
<rect x="986.3" y="480.6" width="4.6" height="17.4" fill="#000000" stroke="#00ff00" stroke-width="1"/>
<line x1="996.3" y1="469" x2="996.3" y2="484.5" stroke="#00ff00" stroke-width="1"/>
<rect x="994" y="471.5" width="4.6" height="9.1" fill="#000000" stroke="#00ff00" stroke-width="1"/>
<line x1="1004" y1="454.5" x2="1004" y2="472.8" stroke="#00ff00" stroke-width="1"/>
<rect x="1001.7" y="455.8" width="4.6" height="15.7" fill="#000000" stroke="#00ff00" stroke-width="1"/>
<line x1="1011.7" y1="454.5" x2="1011.7" y2="472.8" stroke="#00ff00" stroke-width="1"/>
<rect x="1009.4" y="455.8" width="4.6" height="10.5" fill="#ffffff" stroke="#00ff00" stroke-width="0.9"/>
<line x1="1019.4" y1="463.7" x2="1019.4" y2="498" stroke="#00ff00" stroke-width="1"/>
<rect x="1017.1" y="466.3" width="4.6" height="15.7" fill="#ffffff" stroke="#00ff00" stroke-width="0.9"/>
<line x1="1027.1" y1="459.8" x2="1027.1" y2="483" stroke="#00ff00" stroke-width="1"/>
<rect x="1024.8" y="460.5" width="4.6" height="21.5" fill="#000000" stroke="#00ff00" stroke-width="1"/>
<line x1="1034.8" y1="461" x2="1034.8" y2="471.5" stroke="#00ff00" stroke-width="1"/>
<rect x="1032.5" y="461" width="4.6" height="2" fill="#ffffff" stroke="#00ff00" stroke-width="0.9"/>
<line x1="1042.5" y1="427" x2="1042.5" y2="469" stroke="#00ff00" stroke-width="1"/>
<rect x="1040.2" y="442.8" width="4.6" height="18.2" fill="#000000" stroke="#00ff00" stroke-width="1"/>
<line x1="1050.2" y1="437.6" x2="1050.2" y2="465" stroke="#00ff00" stroke-width="1"/>
<rect x="1047.9" y="443.6" width="4.6" height="7" fill="#ffffff" stroke="#00ff00" stroke-width="0.9"/>
<line x1="1057.9" y1="433.7" x2="1057.9" y2="454.5" stroke="#00ff00" stroke-width="1"/>
<rect x="1055.6" y="448.5" width="4.6" height="2.9" fill="#000000" stroke="#00ff00" stroke-width="1"/>
<line x1="1065.6" y1="448" x2="1065.6" y2="456.6" stroke="#00ff00" stroke-width="1"/>
<rect x="1063.3" y="448.5" width="4.6" height="7.3" fill="#ffffff" stroke="#00ff00" stroke-width="0.9"/>
<polyline points="823,497.5 823.66,495.65 824.54,493.07 825.59,490.02 826.8,486.76 828.11,483.54 829.5,480.6 831.02,477.85 832.71,475.07 834.51,472.32 836.36,469.68 838.21,467.21 840,465 841.74,462.93 843.47,460.93 845.21,459.1 846.94,457.56 848.67,456.43 850.4,455.8 852.1,455.76 853.77,456.22 855.43,457.09 857.13,458.24 858.91,459.58 860.8,461 862.83,462.63 864.97,464.59 867.19,466.74 869.44,468.92 871.69,470.99 873.9,472.8 876.11,474.45 878.36,476.06 880.61,477.57 882.81,478.88 884.93,479.92 886.9,480.6 888.69,480.73 890.32,480.33 891.86,479.66 893.38,478.97 894.93,478.5 896.6,478.5 898.4,478.95 900.28,479.64 902.21,480.56 904.13,481.68 906.01,483 907.8,484.5 909.6,486.41 911.47,488.8 913.3,491.38 914.97,493.87 916.37,496 917.4,497.5" fill="none" stroke="#e00000" stroke-width="1.2" stroke-linejoin="round"/>
<polyline points="995.7,497.5 996.48,496.47 997.56,495.06 998.83,493.38 1000.22,491.56 1001.64,489.72 1003,488 1004.33,486.32 1005.71,484.57 1007.12,482.81 1008.54,481.09 1009.94,479.47 1011.3,478 1012.49,476.71 1013.51,475.57 1014.52,474.53 1015.66,473.54 1017.1,472.54 1019,471.5 1021.54,470.37 1024.64,469.19 1028.03,468.01 1031.46,466.88 1034.67,465.86 1037.4,465 1039.6,464.4 1041.46,464.04 1043.09,463.79 1044.62,463.51 1046.15,463.09 1047.8,462.4 1049.58,461.33 1051.41,459.98 1053.24,458.48 1055.03,456.97 1056.73,455.6 1058.3,454.5 1059.79,453.67 1061.24,453 1062.61,452.46 1063.83,452.03 1064.84,451.68 1065.6,451.4" fill="none" stroke="#e00000" stroke-width="1.2" stroke-linejoin="round"/>
<polygon points="839.1,428.5 843.9,428.5 843.9,439.94 850.8,435.78 850.8,441.4 841.5,449.3 832.2,441.4 832.2,435.78 839.1,439.94" fill="#4682b4"/>
<polygon points="840.71,434.12 843.69,434.12 843.69,441.67 848.9,438.92 848.9,442.63 842.2,447.84 835.5,442.63 835.5,438.92 840.71,441.67" fill="#b0c4de"/>
<polygon points="1009,433.7 1013.8,433.7 1013.8,445.14 1020.7,440.98 1020.7,446.6 1011.4,454.5 1002.1,446.6 1002.1,440.98 1009,445.14" fill="#4682b4"/>
<polygon points="1010.61,439.32 1013.59,439.32 1013.59,446.87 1018.8,444.12 1018.8,447.83 1012.1,453.04 1005.4,447.83 1005.4,444.12 1010.61,446.87" fill="#b0c4de"/>
<polygon points="1040.25,474.6 1043.35,474.6 1043.35,467.89 1047,470.33 1047,467.04 1041.8,462.4 1036.6,467.04 1036.6,470.33 1040.25,467.89" fill="#ffb6c1"/>
<polygon points="1070,388.8 1079.4,388.8 1074.7,393.6" fill="#8090a8"/>
<text x="622.4" y="399.91" font-family='"Liberation Sans", sans-serif' font-size="9.2" fill="#ffffff" textLength="200.6" lengthAdjust="spacingAndGlyphs">AUDUSD,M15  0.99498 0.99502 0.99446 0.99449</text>
<text x="622.4" y="409.61" font-family='"Liberation Sans", sans-serif' font-size="9.2" fill="#ffffff" textLength="45" lengthAdjust="spacingAndGlyphs">0 , 0 , 0 , 0</text>
</g>
<line x1="618.3" y1="388.5" x2="1176.8" y2="388.5" stroke="#e8e8e8" stroke-width="1.1"/>
<line x1="618.3" y1="388.5" x2="618.3" y2="500" stroke="#e8e8e8" stroke-width="1.1"/>
<line x1="1176.8" y1="388.5" x2="1176.8" y2="500" stroke="#e8e8e8" stroke-width="1.1"/>
<line x1="1176.8" y1="410" x2="1179.8" y2="410" stroke="#e8e8e8" stroke-width="1"/>
<text x="1181.7" y="413.31" font-family='"Liberation Sans", sans-serif' font-size="9.2" fill="#ffffff" textLength="31.59" lengthAdjust="spacingAndGlyphs">0.99725</text>
<line x1="1176.8" y1="441" x2="1179.8" y2="441" stroke="#e8e8e8" stroke-width="1"/>
<text x="1181.7" y="444.31" font-family='"Liberation Sans", sans-serif' font-size="9.2" fill="#ffffff" textLength="31.59" lengthAdjust="spacingAndGlyphs">0.99535</text>
<line x1="1176.8" y1="472" x2="1179.8" y2="472" stroke="#e8e8e8" stroke-width="1"/>
<text x="1181.7" y="475.31" font-family='"Liberation Sans", sans-serif' font-size="9.2" fill="#ffffff" textLength="31.59" lengthAdjust="spacingAndGlyphs">0.99350</text>
<rect x="1178.6" y="450.4" width="36.6" height="10.8" fill="#ffffff"/>
<text x="1181.7" y="459.11" font-family='"Liberation Sans", sans-serif' font-size="9.2" fill="#000000" textLength="31.59" lengthAdjust="spacingAndGlyphs">0.99449</text>
<path d="M1.2 560 L1.2 363 Q1.2 359 5.2 359 L607.8 359 Q611.8 359 611.8 363 L611.8 560 Z" fill="#0a50e0"/>
<path d="M1.2 388.6 L1.2 363 Q1.2 359 5.2 359 L607.8 359 Q611.8 359 611.8 363 L611.8 388.6 Z" fill="url(#gA)"/>
<rect x="3.4" y="388.6" width="604" height="165.8" fill="#a9a695"/>
<rect x="4.6" y="389.8" width="601.8" height="163.4" fill="#000000"/>
<rect x="606.3" y="389.2" width="1.2" height="165.2" fill="#f4f2e8"/>
<rect x="3.4" y="553.2" width="604" height="1.3" fill="#f4f2e8"/>
<rect x="6" y="369.5" width="8.6" height="6.2" fill="#ffffff"/>
<rect x="7.2" y="371.7" width="2.2" height="1.2" fill="#1560e8"/>
<rect x="10.4" y="371.1" width="2.4" height="1.1" fill="#1560e8"/>
<rect x="7.4" y="373.7" width="1.4" height="1" fill="#1560e8"/>
<rect x="9" y="374.5" width="8.2" height="6.4" fill="#ffffff" stroke="#1560e8" stroke-width="0.5"/>
<path d="M10.4 376.5 l1.3 3 l1.3 -3 M13.2 379.5 l1.2 -3 l1.2 3" fill="none" stroke="#1560e8" stroke-width="0.9"/>
<text x="24.4" y="380.3" font-family='"Liberation Sans", "Noto Sans CJK JP", sans-serif' font-size="11.4" fill="#0a2a80" textLength="79.5" lengthAdjust="spacing" font-weight="bold">EURUSD,M15</text>
<text x="23.5" y="379.4" font-family='"Liberation Sans", "Noto Sans CJK JP", sans-serif' font-size="11.4" fill="#ffffff" textLength="79.5" lengthAdjust="spacing" font-weight="bold">EURUSD,M15</text>
<rect x="542.3" y="365.3" width="19.2" height="19.2" fill="url(#bA)" stroke="#ffffff" stroke-width="0.9" rx="2.6"/>
<rect x="546.9" y="377.5" width="6.6" height="2.6" fill="#ffffff"/>
<rect x="564.4" y="365.3" width="19.2" height="19.2" fill="url(#bA)" stroke="#ffffff" stroke-width="0.9" rx="2.6"/>
<rect x="569" y="369.9" width="9.6" height="9.2" fill="none" stroke="#ffffff" stroke-width="1.2"/>
<rect x="568.8" y="369.5" width="10" height="2.6" fill="#ffffff"/>
<rect x="586.5" y="365.3" width="19.2" height="19.2" fill="url(#cA)" stroke="#ffffff" stroke-width="0.9" rx="2.6"/>
<line x1="591.5" y1="370.3" x2="600.7" y2="379.5" stroke="#ffffff" stroke-width="2"/>
<line x1="600.7" y1="370.3" x2="591.5" y2="379.5" stroke="#ffffff" stroke-width="2"/>
<clipPath id="cp4"><rect x="5.6" y="392.6" width="562.8" height="106"/></clipPath><g clip-path="url(#cp4)">
<line x1="7.1" y1="393" x2="7.1" y2="498" stroke="#7c8aa0" stroke-width="1" stroke-dasharray="3.4 3.4"/>
<line x1="37.9" y1="393" x2="37.9" y2="498" stroke="#7c8aa0" stroke-width="1" stroke-dasharray="3.4 3.4"/>
<line x1="68.7" y1="393" x2="68.7" y2="498" stroke="#7c8aa0" stroke-width="1" stroke-dasharray="3.4 3.4"/>
<line x1="99.5" y1="393" x2="99.5" y2="498" stroke="#7c8aa0" stroke-width="1" stroke-dasharray="3.4 3.4"/>
<line x1="130.3" y1="393" x2="130.3" y2="498" stroke="#7c8aa0" stroke-width="1" stroke-dasharray="3.4 3.4"/>
<line x1="161.1" y1="393" x2="161.1" y2="498" stroke="#7c8aa0" stroke-width="1" stroke-dasharray="3.4 3.4"/>
<line x1="191.9" y1="393" x2="191.9" y2="498" stroke="#7c8aa0" stroke-width="1" stroke-dasharray="3.4 3.4"/>
<line x1="222.7" y1="393" x2="222.7" y2="498" stroke="#7c8aa0" stroke-width="1" stroke-dasharray="3.4 3.4"/>
<line x1="253.5" y1="393" x2="253.5" y2="498" stroke="#7c8aa0" stroke-width="1" stroke-dasharray="3.4 3.4"/>
<line x1="284.3" y1="393" x2="284.3" y2="498" stroke="#7c8aa0" stroke-width="1" stroke-dasharray="3.4 3.4"/>
<line x1="315.1" y1="393" x2="315.1" y2="498" stroke="#7c8aa0" stroke-width="1" stroke-dasharray="3.4 3.4"/>
<line x1="345.9" y1="393" x2="345.9" y2="498" stroke="#7c8aa0" stroke-width="1" stroke-dasharray="3.4 3.4"/>
<line x1="376.7" y1="393" x2="376.7" y2="498" stroke="#7c8aa0" stroke-width="1" stroke-dasharray="3.4 3.4"/>
<line x1="407.5" y1="393" x2="407.5" y2="498" stroke="#7c8aa0" stroke-width="1" stroke-dasharray="3.4 3.4"/>
<line x1="438.3" y1="393" x2="438.3" y2="498" stroke="#7c8aa0" stroke-width="1" stroke-dasharray="3.4 3.4"/>
<line x1="469.1" y1="393" x2="469.1" y2="498" stroke="#7c8aa0" stroke-width="1" stroke-dasharray="3.4 3.4"/>
<line x1="499.9" y1="393" x2="499.9" y2="498" stroke="#7c8aa0" stroke-width="1" stroke-dasharray="3.4 3.4"/>
<line x1="530.7" y1="393" x2="530.7" y2="498" stroke="#7c8aa0" stroke-width="1" stroke-dasharray="3.4 3.4"/>
<line x1="561.5" y1="393" x2="561.5" y2="498" stroke="#7c8aa0" stroke-width="1" stroke-dasharray="3.4 3.4"/>
<line x1="592.3" y1="393" x2="592.3" y2="498" stroke="#7c8aa0" stroke-width="1" stroke-dasharray="3.4 3.4"/>
<line x1="5.6" y1="409.6" x2="568.4" y2="409.6" stroke="#7c8aa0" stroke-width="1" stroke-dasharray="3.4 3.4"/>
<line x1="5.6" y1="441.1" x2="568.4" y2="441.1" stroke="#7c8aa0" stroke-width="1" stroke-dasharray="3.4 3.4"/>
<line x1="5.6" y1="472.8" x2="568.4" y2="472.8" stroke="#7c8aa0" stroke-width="1" stroke-dasharray="3.4 3.4"/>
<line x1="5.6" y1="392.9" x2="27" y2="392.9" stroke="#2e8b57" stroke-width="1.2" stroke-dasharray="4 3"/>
<line x1="22.5" y1="471.3" x2="22.5" y2="498" stroke="#00ff00" stroke-width="1"/>
<line x1="30.2" y1="490" x2="30.2" y2="498" stroke="#00ff00" stroke-width="1"/>
<line x1="37.9" y1="490" x2="37.9" y2="498" stroke="#00ff00" stroke-width="1"/>
<line x1="53.3" y1="438.5" x2="53.3" y2="498" stroke="#00ff00" stroke-width="1"/>
<rect x="51" y="456" width="4.6" height="42" fill="#000000" stroke="#00ff00" stroke-width="1"/>
<line x1="61" y1="407" x2="61" y2="466" stroke="#00ff00" stroke-width="1"/>
<rect x="58.7" y="407" width="4.6" height="49" fill="#000000" stroke="#00ff00" stroke-width="1"/>
<line x1="68.7" y1="405.6" x2="68.7" y2="474" stroke="#00ff00" stroke-width="1"/>
<rect x="66.4" y="405.6" width="4.6" height="40.4" fill="#ffffff" stroke="#00ff00" stroke-width="0.9"/>
<line x1="76.4" y1="442" x2="76.4" y2="463.7" stroke="#00ff00" stroke-width="1"/>
<rect x="74.1" y="443.5" width="4.6" height="3.1" fill="#000000" stroke="#00ff00" stroke-width="1"/>
<line x1="84.1" y1="442" x2="84.1" y2="467.5" stroke="#00ff00" stroke-width="1"/>
<rect x="81.8" y="443.5" width="4.6" height="16.5" fill="#ffffff" stroke="#00ff00" stroke-width="0.9"/>
<line x1="91.8" y1="451" x2="91.8" y2="468.8" stroke="#00ff00" stroke-width="1"/>
<rect x="89.5" y="456" width="4.6" height="3" fill="#000000" stroke="#00ff00" stroke-width="1"/>
<line x1="99.5" y1="442" x2="99.5" y2="460" stroke="#00ff00" stroke-width="1"/>
<rect x="97.2" y="445.5" width="4.6" height="11.9" fill="#000000" stroke="#00ff00" stroke-width="1"/>
<line x1="107.2" y1="437" x2="107.2" y2="453.6" stroke="#00ff00" stroke-width="1"/>
<rect x="104.9" y="445.4" width="4.6" height="1.2" fill="#000000" stroke="#00ff00" stroke-width="1"/>
<line x1="114.9" y1="444.8" x2="114.9" y2="465" stroke="#00ff00" stroke-width="1"/>
<rect x="112.6" y="447.3" width="4.6" height="6.3" fill="#ffffff" stroke="#00ff00" stroke-width="0.9"/>
<line x1="122.6" y1="444.8" x2="122.6" y2="466.3" stroke="#00ff00" stroke-width="1"/>
<rect x="120.3" y="453.6" width="4.6" height="7.1" fill="#ffffff" stroke="#00ff00" stroke-width="0.9"/>
<line x1="130.3" y1="447.3" x2="130.3" y2="463.7" stroke="#00ff00" stroke-width="1"/>
<rect x="128" y="449.8" width="4.6" height="10.2" fill="#000000" stroke="#00ff00" stroke-width="1"/>
<line x1="138" y1="438.5" x2="138" y2="461.2" stroke="#00ff00" stroke-width="1"/>
<rect x="135.7" y="449.8" width="4.6" height="1.2" fill="#000000" stroke="#00ff00" stroke-width="1"/>
<line x1="145.7" y1="447.3" x2="145.7" y2="460" stroke="#00ff00" stroke-width="1"/>
<rect x="143.4" y="449.8" width="4.6" height="4.2" fill="#ffffff" stroke="#00ff00" stroke-width="0.9"/>
<line x1="153.4" y1="443.5" x2="153.4" y2="498" stroke="#00ff00" stroke-width="1"/>
<rect x="151.1" y="453.6" width="4.6" height="44.4" fill="#ffffff" stroke="#00ff00" stroke-width="0.9"/>
<line x1="161.1" y1="485" x2="161.1" y2="498" stroke="#00ff00" stroke-width="1"/>
<line x1="184.2" y1="476.4" x2="184.2" y2="498" stroke="#00ff00" stroke-width="1"/>
<line x1="191.9" y1="485" x2="191.9" y2="498" stroke="#00ff00" stroke-width="1"/>
<line x1="199.6" y1="487.7" x2="199.6" y2="498" stroke="#00ff00" stroke-width="1"/>
<rect x="197.3" y="491.5" width="4.6" height="6.5" fill="#000000" stroke="#00ff00" stroke-width="1"/>
<line x1="207.3" y1="470" x2="207.3" y2="498" stroke="#00ff00" stroke-width="1"/>
<rect x="205" y="490.4" width="4.6" height="1.2" fill="#000000" stroke="#00ff00" stroke-width="1"/>
<line x1="215" y1="481.4" x2="215" y2="498" stroke="#00ff00" stroke-width="1"/>
<rect x="212.7" y="491.5" width="4.6" height="6.5" fill="#ffffff" stroke="#00ff00" stroke-width="0.9"/>
<line x1="222.7" y1="489" x2="222.7" y2="498" stroke="#00ff00" stroke-width="1"/>
<line x1="407.5" y1="495" x2="407.5" y2="498" stroke="#00ff00" stroke-width="1"/>
<line x1="415.2" y1="488.5" x2="415.2" y2="498" stroke="#00ff00" stroke-width="1"/>
<rect x="412.9" y="494" width="4.6" height="4" fill="#000000" stroke="#00ff00" stroke-width="1"/>
<line x1="422.9" y1="475.4" x2="422.9" y2="498" stroke="#00ff00" stroke-width="1"/>
<rect x="420.6" y="492.4" width="4.6" height="3.9" fill="#ffffff" stroke="#00ff00" stroke-width="0.9"/>
<line x1="430.6" y1="441.5" x2="430.6" y2="498" stroke="#00ff00" stroke-width="1"/>
<rect x="428.3" y="482.7" width="4.6" height="15.3" fill="#000000" stroke="#00ff00" stroke-width="1"/>
<line x1="438.3" y1="459.8" x2="438.3" y2="498" stroke="#00ff00" stroke-width="1"/>
<rect x="436" y="482.7" width="4.6" height="15.3" fill="#ffffff" stroke="#00ff00" stroke-width="0.9"/>
<line x1="22" y1="497.5" x2="76" y2="440.5" stroke="#b02020" stroke-width="0.95"/>
<polyline points="58,497.5 59.14,494.87 60.74,491.17 62.62,486.82 64.61,482.22 66.53,477.78 68.2,473.9 69.65,470.52 71.02,467.31 72.33,464.26 73.56,461.36 74.71,458.6 75.8,456 76.72,453.48 77.47,451.04 78.14,448.76 78.84,446.69 79.7,444.91 80.8,443.5 82.2,442.44 83.82,441.67 85.59,441.19 87.42,441.01 89.25,441.11 91,441.5 92.65,442.39 94.25,443.81 95.84,445.53 97.47,447.29 99.18,448.83 101,449.9 102.96,450.47 105.04,450.71 107.19,450.75 109.37,450.67 111.56,450.59 113.7,450.6 115.78,450.67 117.81,450.72 119.84,450.76 121.91,450.8 124.05,450.88 126.3,451 128.74,451.15 131.36,451.31 134.06,451.5 136.71,451.73 139.23,452.03 141.5,452.4 143.48,452.71 145.24,452.91 146.87,453.17 148.42,453.66 149.98,454.55 151.6,456 153.25,458.09 154.87,460.7 156.49,463.7 158.15,466.98 159.87,470.42 161.7,473.9 163.8,477.78 166.18,482.22 168.63,486.82 170.94,491.17 172.9,494.87 174.3,497.5" fill="none" stroke="#e00000" stroke-width="1.2" stroke-linejoin="round"/>
<polygon points="73.2,418 78,418 78,429.27 84.9,425.18 84.9,430.71 75.6,438.5 66.3,430.71 66.3,425.18 73.2,429.27" fill="#4682b4"/>
<polygon points="74.81,423.54 77.79,423.54 77.79,430.98 83,428.27 83,431.92 76.3,437.06 69.6,431.92 69.6,428.27 74.81,430.98" fill="#b0c4de"/>
<polygon points="382.75,483 385.65,483 385.65,490.15 389.7,487.55 389.7,491.06 384.2,496 378.7,491.06 378.7,487.55 382.75,490.15" fill="#b0c4de"/>
<polygon points="436.95,449 439.85,449 439.85,456.37 443.9,453.69 443.9,457.31 438.4,462.4 432.9,457.31 432.9,453.69 436.95,456.37" fill="#b0c4de"/>
<polygon points="459.6,393 470.8,393 465.2,398" fill="#8090a8"/>
<text x="10" y="403.31" font-family='"Liberation Sans", sans-serif' font-size="9.2" fill="#ffffff" textLength="199" lengthAdjust="spacingAndGlyphs">EURUSD,M15  1.39682 1.39683 1.39632 1.39655</text>
<text x="10" y="413.51" font-family='"Liberation Sans", sans-serif' font-size="9.2" fill="#ffffff" textLength="45" lengthAdjust="spacingAndGlyphs">0 , 0 , 0 , 0</text>
</g>
<line x1="5.6" y1="392.9" x2="568.4" y2="392.9" stroke="#e8e8e8" stroke-width="1.1"/>
<line x1="5.6" y1="392.9" x2="5.6" y2="500" stroke="#e8e8e8" stroke-width="1.1"/>
<line x1="568.4" y1="392.9" x2="568.4" y2="500" stroke="#e8e8e8" stroke-width="1.1"/>
<line x1="568.4" y1="409.5" x2="571.4" y2="409.5" stroke="#e8e8e8" stroke-width="1"/>
<text x="574.3" y="412.81" font-family='"Liberation Sans", sans-serif' font-size="9.2" fill="#ffffff" textLength="30.94" lengthAdjust="spacingAndGlyphs">1.40110</text>
<line x1="568.4" y1="441" x2="571.4" y2="441" stroke="#e8e8e8" stroke-width="1"/>
<text x="574.3" y="444.31" font-family='"Liberation Sans", sans-serif' font-size="9.2" fill="#ffffff" textLength="31.59" lengthAdjust="spacingAndGlyphs">1.40010</text>
<line x1="568.4" y1="472.8" x2="571.4" y2="472.8" stroke="#e8e8e8" stroke-width="1"/>
<text x="574.3" y="476.11" font-family='"Liberation Sans", sans-serif' font-size="9.2" fill="#ffffff" textLength="31.59" lengthAdjust="spacingAndGlyphs">1.39910</text>
<rect x="287.4" y="368.8" width="51.2" height="13.8" fill="#062a8c" opacity="0.55"/>
<rect x="285.2" y="366.6" width="51.2" height="13.8" fill="#ffffe1" stroke="#000000" stroke-width="1"/>
<text x="288.4" y="377.98" font-family='"Liberation Sans", "Noto Sans CJK JP", sans-serif' font-size="11.6" fill="#000000" textLength="44.6" lengthAdjust="spacingAndGlyphs">横軸目盛</text>
<rect x="0" y="497" width="1227" height="366" fill="#ece9d8"/>
<rect x="0" y="497" width="1225.4" height="2" fill="#ffffff"/>
<rect x="0" y="499" width="1225.4" height="1" fill="#101010"/>
<rect x="0" y="517.8" width="1225.4" height="1.9" fill="#fbfaf6"/>
<rect x="1225.4" y="0" width="2" height="863" fill="#ffffff"/>
<rect x="0" y="0" width="1.2" height="520" fill="#ffffff"/>
<rect x="0" y="0" width="1227" height="1" fill="#ffffff"/>
<rect x="0" y="860.6" width="1227" height="3" fill="#fbfaf7"/>
<rect x="75.4" y="517" width="84.4" height="1.1" fill="#6a6a60"/>
<rect x="158.6" y="499.4" width="1.1" height="18.4" fill="#6a6a60"/>
<rect x="74.4" y="498" width="84.2" height="19" fill="#ffffff"/>
<path d="M74.9 498 V516.5 H158.1 V498" fill="none" stroke="#1a1a1a" stroke-width="1"/>
<polygon points="1204.8,505.6 1204.8,512.4 1201.2,509" fill="#a09e92"/>
<polygon points="1216.4,505.6 1216.4,512.4 1220,509" fill="#a09e92"/>
<rect x="1.2" y="535.4" width="9.2" height="325.4" fill="#7f9be3"/>
<line x1="2.3" y1="524.6" x2="6.7" y2="529.6" stroke="#000000" stroke-width="1.5"/>
<line x1="6.7" y1="524.6" x2="2.3" y2="529.6" stroke="#000000" stroke-width="1.5"/>
<rect x="11.8" y="522.3" width="1197" height="21.4" fill="#ece9d8"/>
<rect x="11.8" y="522.3" width="1197" height="1" fill="#fbfaf5"/>
<rect x="11.8" y="521.5" width="1213" height="0.9" fill="#c9c6b6"/>
<rect x="11.8" y="540.5" width="1197" height="1.1" fill="#dedac9"/>
<rect x="11.8" y="541.6" width="1197" height="1.1" fill="#cfcbb9"/>
<rect x="11.8" y="542.7" width="1197" height="1" fill="#c2beab"/>
<rect x="115.5" y="525.3" width="1" height="13.8" fill="#c5c2b2"/>
<rect x="116.5" y="525.3" width="1" height="13.8" fill="#ffffff"/>
<rect x="295.5" y="525.3" width="1" height="13.8" fill="#c5c2b2"/>
<rect x="296.5" y="525.3" width="1" height="13.8" fill="#ffffff"/>
<rect x="377.3" y="525.3" width="1" height="13.8" fill="#c5c2b2"/>
<rect x="378.3" y="525.3" width="1" height="13.8" fill="#ffffff"/>
<rect x="443.2" y="525.3" width="1" height="13.8" fill="#c5c2b2"/>
<rect x="444.2" y="525.3" width="1" height="13.8" fill="#ffffff"/>
<rect x="524.7" y="525.3" width="1" height="13.8" fill="#c5c2b2"/>
<rect x="525.7" y="525.3" width="1" height="13.8" fill="#ffffff"/>
<rect x="606.3" y="525.3" width="1" height="13.8" fill="#c5c2b2"/>
<rect x="607.3" y="525.3" width="1" height="13.8" fill="#ffffff"/>
<rect x="688.5" y="525.3" width="1" height="13.8" fill="#c5c2b2"/>
<rect x="689.5" y="525.3" width="1" height="13.8" fill="#ffffff"/>
<rect x="770.6" y="525.3" width="1" height="13.8" fill="#c5c2b2"/>
<rect x="771.6" y="525.3" width="1" height="13.8" fill="#ffffff"/>
<rect x="950.7" y="525.3" width="1" height="13.8" fill="#c5c2b2"/>
<rect x="951.7" y="525.3" width="1" height="13.8" fill="#ffffff"/>
<rect x="1032.6" y="525.3" width="1" height="13.8" fill="#c5c2b2"/>
<rect x="1033.6" y="525.3" width="1" height="13.8" fill="#ffffff"/>
<rect x="1113.7" y="525.3" width="1" height="13.8" fill="#c5c2b2"/>
<rect x="1114.7" y="525.3" width="1" height="13.8" fill="#ffffff"/>
<rect x="1207.2" y="525.3" width="1" height="13.8" fill="#c5c2b2"/>
<polyline points="77.2,537.2 80.4,531 84.6,537.2" fill="none" stroke="#ffffff" stroke-width="1.2" stroke-linejoin="round"/>
<line x1="77.2" y1="537.4" x2="80.4" y2="531" stroke="#aca899" stroke-width="1.2"/>
<rect x="11.8" y="543.6" width="1197" height="19.89" fill="#ebebeb"/>
<rect x="11.8" y="562.89" width="1197" height="19.89" fill="#ffffff"/>
<rect x="11.8" y="582.18" width="1197" height="19.89" fill="#ebebeb"/>
<rect x="11.8" y="601.47" width="1197" height="19.89" fill="#ffffff"/>
<rect x="11.8" y="620.76" width="1197" height="19.89" fill="#ebebeb"/>
<rect x="11.8" y="640.05" width="1197" height="19.89" fill="#ffffff"/>
<rect x="11.8" y="659.34" width="1197" height="19.89" fill="#ebebeb"/>
<rect x="11.8" y="678.63" width="1197" height="19.89" fill="#ffffff"/>
<rect x="11.8" y="697.92" width="1197" height="19.89" fill="#ebebeb"/>
<rect x="11.8" y="717.21" width="1197" height="19.89" fill="#ffffff"/>
<rect x="11.8" y="736.5" width="1197" height="19.89" fill="#ebebeb"/>
<rect x="11.8" y="755.79" width="1197" height="19.89" fill="#ffffff"/>
<rect x="11.8" y="775.08" width="1197" height="19.89" fill="#ebebeb"/>
<rect x="11.8" y="794.37" width="1197" height="19.89" fill="#ffffff"/>
<rect x="11.8" y="813.66" width="1197" height="19.89" fill="#ebebeb"/>
<rect x="11.8" y="562.89" width="1197" height="1.2" fill="#d2d2d2"/>
<rect x="11.8" y="582.18" width="1197" height="1.2" fill="#d2d2d2"/>
<rect x="11.8" y="601.47" width="1197" height="1.2" fill="#d2d2d2"/>
<rect x="11.8" y="620.76" width="1197" height="1.2" fill="#d2d2d2"/>
<rect x="11.8" y="640.05" width="1197" height="1.2" fill="#d2d2d2"/>
<rect x="11.8" y="659.34" width="1197" height="1.2" fill="#d2d2d2"/>
<rect x="11.8" y="678.63" width="1197" height="1.2" fill="#d2d2d2"/>
<rect x="11.8" y="697.92" width="1197" height="1.2" fill="#d2d2d2"/>
<rect x="11.8" y="717.21" width="1197" height="1.2" fill="#d2d2d2"/>
<rect x="11.8" y="736.5" width="1197" height="1.2" fill="#d2d2d2"/>
<rect x="11.8" y="755.79" width="1197" height="1.2" fill="#d2d2d2"/>
<rect x="11.8" y="775.08" width="1197" height="1.2" fill="#d2d2d2"/>
<rect x="11.8" y="794.37" width="1197" height="1.2" fill="#d2d2d2"/>
<rect x="11.8" y="813.66" width="1197" height="1.2" fill="#d2d2d2"/>
<rect x="11.8" y="832.95" width="1197" height="1.2" fill="#d2d2d2"/>
<rect x="115.9" y="543.7" width="1.3" height="289.85" fill="#d2d2d2"/>
<rect x="295.9" y="543.7" width="1.3" height="289.85" fill="#d2d2d2"/>
<rect x="377.7" y="543.7" width="1.3" height="289.85" fill="#d2d2d2"/>
<rect x="443.6" y="543.7" width="1.3" height="289.85" fill="#d2d2d2"/>
<rect x="525.1" y="543.7" width="1.3" height="289.85" fill="#d2d2d2"/>
<rect x="606.7" y="543.7" width="1.3" height="289.85" fill="#d2d2d2"/>
<rect x="688.9" y="543.7" width="1.3" height="289.85" fill="#d2d2d2"/>
<rect x="771" y="543.7" width="1.3" height="289.85" fill="#d2d2d2"/>
<rect x="951.1" y="543.7" width="1.3" height="289.85" fill="#d2d2d2"/>
<rect x="1033" y="543.7" width="1.3" height="289.85" fill="#d2d2d2"/>
<rect x="1114.1" y="543.7" width="1.3" height="289.85" fill="#d2d2d2"/>
<rect x="11.8" y="833.55" width="1197" height="7.45" fill="#c6c6c6"/>
<rect x="10.4" y="840.8" width="1215" height="1.1" fill="#1a1a1a"/>
<rect x="11" y="522.3" width="0.9" height="318.7" fill="#b9b6a6"/>
<linearGradient id="docg" x1="0" y1="0" x2="1" y2="1"><stop offset="0" stop-color="#ffffff"/><stop offset="0.6" stop-color="#fafafa"/><stop offset="1" stop-color="#dcdcdc"/></linearGradient>
<linearGradient id="sbg" x1="0" y1="0" x2="1" y2="0"><stop offset="0" stop-color="#f3f1ec"/><stop offset="0.4" stop-color="#fdfdfb"/><stop offset="1" stop-color="#f0eee6"/></linearGradient>
<rect x="1208.8" y="522.3" width="16.4" height="318.7" fill="url(#sbg)"/>
<linearGradient id="sbt" x1="0" y1="0" x2="1" y2="0"><stop offset="0" stop-color="#cfdcfd"/><stop offset="0.5" stop-color="#c3d3fb"/><stop offset="1" stop-color="#b4c7f6"/></linearGradient>
<rect x="1210.4" y="524.2" width="13.4" height="13.6" fill="url(#sbt)" stroke="#ffffff" stroke-width="0.9" rx="2"/>
<polyline points="1213.6,533 1217.1,529.2 1220.6,533" fill="none" stroke="#4d6185" stroke-width="1.9" stroke-linejoin="round"/>
<rect x="1210.4" y="677.8" width="13.4" height="136.4" fill="url(#sbt)" stroke="#ffffff" stroke-width="0.9" rx="2"/>
<rect x="1214.4" y="742.2" width="5.4" height="0.9" fill="#e6eeff"/>
<rect x="1214.4" y="744.1" width="5.4" height="0.9" fill="#e6eeff"/>
<rect x="1214.4" y="746" width="5.4" height="0.9" fill="#e6eeff"/>
<rect x="1214.4" y="747.9" width="5.4" height="0.9" fill="#e6eeff"/>
<rect x="1210.4" y="825.4" width="13.4" height="14.4" fill="url(#sbt)" stroke="#ffffff" stroke-width="0.9" rx="2"/>
<polyline points="1213.6,830.8 1217.1,834.6 1220.6,830.8" fill="none" stroke="#4d6185" stroke-width="1.9" stroke-linejoin="round"/>
<path d="M15.6 547.5 h7 l3.8 3.8 v9 h-10.8 z" fill="url(#docg)" stroke="#707070" stroke-width="1"/>
<path d="M22.6 547.5 v3.8 h3.8" fill="none" stroke="#707070" stroke-width="0.9"/>
<circle cx="25.5" cy="558.7" r="3.3" fill="#2a8fe6" stroke="#1560b0" stroke-width="0.7"/>
<circle cx="24.7" cy="557.7" r="1.1" fill="#ffffff" opacity="0.5"/>
<path d="M15.6 566.79 h7 l3.8 3.8 v9 h-10.8 z" fill="url(#docg)" stroke="#707070" stroke-width="1"/>
<path d="M22.6 566.79 v3.8 h3.8" fill="none" stroke="#707070" stroke-width="0.9"/>
<circle cx="25.5" cy="577.99" r="3.3" fill="#2a8fe6" stroke="#1560b0" stroke-width="0.7"/>
<circle cx="24.7" cy="576.99" r="1.1" fill="#ffffff" opacity="0.5"/>
<path d="M15.6 586.08 h7 l3.8 3.8 v9 h-10.8 z" fill="url(#docg)" stroke="#707070" stroke-width="1"/>
<path d="M22.6 586.08 v3.8 h3.8" fill="none" stroke="#707070" stroke-width="0.9"/>
<circle cx="25.5" cy="597.28" r="3.3" fill="#e03c14" stroke="#a02808" stroke-width="0.7"/>
<circle cx="24.7" cy="596.28" r="1.1" fill="#ffffff" opacity="0.5"/>
<path d="M15.6 605.37 h7 l3.8 3.8 v9 h-10.8 z" fill="url(#docg)" stroke="#707070" stroke-width="1"/>
<path d="M22.6 605.37 v3.8 h3.8" fill="none" stroke="#707070" stroke-width="0.9"/>
<circle cx="25.5" cy="616.57" r="3.3" fill="#2a8fe6" stroke="#1560b0" stroke-width="0.7"/>
<circle cx="24.7" cy="615.57" r="1.1" fill="#ffffff" opacity="0.5"/>
<path d="M15.6 624.66 h7 l3.8 3.8 v9 h-10.8 z" fill="url(#docg)" stroke="#707070" stroke-width="1"/>
<path d="M22.6 624.66 v3.8 h3.8" fill="none" stroke="#707070" stroke-width="0.9"/>
<circle cx="25.5" cy="635.86" r="3.3" fill="#e03c14" stroke="#a02808" stroke-width="0.7"/>
<circle cx="24.7" cy="634.86" r="1.1" fill="#ffffff" opacity="0.5"/>
<path d="M15.6 643.95 h7 l3.8 3.8 v9 h-10.8 z" fill="url(#docg)" stroke="#707070" stroke-width="1"/>
<path d="M22.6 643.95 v3.8 h3.8" fill="none" stroke="#707070" stroke-width="0.9"/>
<circle cx="25.5" cy="655.15" r="3.3" fill="#e03c14" stroke="#a02808" stroke-width="0.7"/>
<circle cx="24.7" cy="654.15" r="1.1" fill="#ffffff" opacity="0.5"/>
<path d="M15.6 663.24 h7 l3.8 3.8 v9 h-10.8 z" fill="url(#docg)" stroke="#707070" stroke-width="1"/>
<path d="M22.6 663.24 v3.8 h3.8" fill="none" stroke="#707070" stroke-width="0.9"/>
<circle cx="25.5" cy="674.44" r="3.3" fill="#2a8fe6" stroke="#1560b0" stroke-width="0.7"/>
<circle cx="24.7" cy="673.44" r="1.1" fill="#ffffff" opacity="0.5"/>
<path d="M15.6 682.53 h7 l3.8 3.8 v9 h-10.8 z" fill="url(#docg)" stroke="#707070" stroke-width="1"/>
<path d="M22.6 682.53 v3.8 h3.8" fill="none" stroke="#707070" stroke-width="0.9"/>
<circle cx="25.5" cy="693.73" r="3.3" fill="#e03c14" stroke="#a02808" stroke-width="0.7"/>
<circle cx="24.7" cy="692.73" r="1.1" fill="#ffffff" opacity="0.5"/>
<path d="M15.6 701.82 h7 l3.8 3.8 v9 h-10.8 z" fill="url(#docg)" stroke="#707070" stroke-width="1"/>
<path d="M22.6 701.82 v3.8 h3.8" fill="none" stroke="#707070" stroke-width="0.9"/>
<circle cx="25.5" cy="713.02" r="3.3" fill="#e03c14" stroke="#a02808" stroke-width="0.7"/>
<circle cx="24.7" cy="712.02" r="1.1" fill="#ffffff" opacity="0.5"/>
<path d="M15.6 721.11 h7 l3.8 3.8 v9 h-10.8 z" fill="url(#docg)" stroke="#707070" stroke-width="1"/>
<path d="M22.6 721.11 v3.8 h3.8" fill="none" stroke="#707070" stroke-width="0.9"/>
<circle cx="25.5" cy="732.31" r="3.3" fill="#2a8fe6" stroke="#1560b0" stroke-width="0.7"/>
<circle cx="24.7" cy="731.31" r="1.1" fill="#ffffff" opacity="0.5"/>
<path d="M15.6 740.4 h7 l3.8 3.8 v9 h-10.8 z" fill="url(#docg)" stroke="#707070" stroke-width="1"/>
<path d="M22.6 740.4 v3.8 h3.8" fill="none" stroke="#707070" stroke-width="0.9"/>
<circle cx="25.5" cy="751.6" r="3.3" fill="#e03c14" stroke="#a02808" stroke-width="0.7"/>
<circle cx="24.7" cy="750.6" r="1.1" fill="#ffffff" opacity="0.5"/>
<path d="M15.6 759.69 h7 l3.8 3.8 v9 h-10.8 z" fill="url(#docg)" stroke="#707070" stroke-width="1"/>
<path d="M22.6 759.69 v3.8 h3.8" fill="none" stroke="#707070" stroke-width="0.9"/>
<circle cx="25.5" cy="770.89" r="3.3" fill="#e03c14" stroke="#a02808" stroke-width="0.7"/>
<circle cx="24.7" cy="769.89" r="1.1" fill="#ffffff" opacity="0.5"/>
<path d="M15.6 778.98 h7 l3.8 3.8 v9 h-10.8 z" fill="url(#docg)" stroke="#707070" stroke-width="1"/>
<path d="M22.6 778.98 v3.8 h3.8" fill="none" stroke="#707070" stroke-width="0.9"/>
<circle cx="25.5" cy="790.18" r="3.3" fill="#2a8fe6" stroke="#1560b0" stroke-width="0.7"/>
<circle cx="24.7" cy="789.18" r="1.1" fill="#ffffff" opacity="0.5"/>
<path d="M15.6 798.27 h7 l3.8 3.8 v9 h-10.8 z" fill="url(#docg)" stroke="#707070" stroke-width="1"/>
<path d="M22.6 798.27 v3.8 h3.8" fill="none" stroke="#707070" stroke-width="0.9"/>
<circle cx="25.5" cy="809.47" r="3.3" fill="#2a8fe6" stroke="#1560b0" stroke-width="0.7"/>
<circle cx="24.7" cy="808.47" r="1.1" fill="#ffffff" opacity="0.5"/>
<path d="M15.6 817.56 h7 l3.8 3.8 v9 h-10.8 z" fill="url(#docg)" stroke="#707070" stroke-width="1"/>
<path d="M22.6 817.56 v3.8 h3.8" fill="none" stroke="#707070" stroke-width="0.9"/>
<circle cx="25.5" cy="828.76" r="3.3" fill="#2a8fe6" stroke="#1560b0" stroke-width="0.7"/>
<circle cx="24.7" cy="827.76" r="1.1" fill="#ffffff" opacity="0.5"/>
<rect x="58" y="857.9" width="64.6" height="1.1" fill="#6a6a60"/>
<rect x="121.5" y="842.4" width="1.1" height="16.6" fill="#6a6a60"/>
<rect x="57" y="840.6" width="64.6" height="17.4" fill="#ffffff"/>
<path d="M57.5 840.6 V857.5 H121.1 V840.6" fill="none" stroke="#1a1a1a" stroke-width="1"/>
<text x="24.2" y="853.63" font-family='"Liberation Sans", "Noto Sans CJK JP", sans-serif' font-size="11.2" fill="#8a887c" textLength="17.8" lengthAdjust="spacingAndGlyphs">取引</text>
<text x="66.2" y="853.63" font-family='"Liberation Sans", "Noto Sans CJK JP", sans-serif' font-size="11.2" fill="#000000" textLength="45.6" lengthAdjust="spacingAndGlyphs">口座履歴</text>
<text x="131" y="853.63" font-family='"Liberation Sans", "Noto Sans CJK JP", sans-serif' font-size="11.2" fill="#8a887c" textLength="34.4" lengthAdjust="spacingAndGlyphs">ニュース</text>
<text x="185" y="853.63" font-family='"Liberation Sans", "Noto Sans CJK JP", sans-serif' font-size="11.2" fill="#8a887c" textLength="58.6" lengthAdjust="spacingAndGlyphs">アラーム設定</text>
<text x="263.6" y="853.63" font-family='"Liberation Sans", "Noto Sans CJK JP", sans-serif' font-size="11.2" fill="#8a887c" textLength="58.8" lengthAdjust="spacingAndGlyphs">メールボックス</text>
<text x="341.5" y="853.63" font-family='"Liberation Sans", "Noto Sans CJK JP", sans-serif' font-size="11.2" fill="#8a887c" textLength="36" lengthAdjust="spacingAndGlyphs">Experts</text>
<text x="396" y="853.63" font-family='"Liberation Sans", "Noto Sans CJK JP", sans-serif' font-size="11.2" fill="#8a887c" textLength="47" lengthAdjust="spacingAndGlyphs">操作履歴</text>
</svg>
<div id="ui">
<span class="ctab" style="left:10.5px;top:501.4px;width:52.5px;color:#8a887c">USDJPY,H4</span>
<span class="ctab" style="left:84.5px;top:501.4px;width:61.6px;color:#000000">EURUSD,M15</span>
<span class="ctab" style="left:167.6px;top:501.4px;width:61px;color:#8a887c">GBPUSD,M15</span>
<span class="ctab" style="left:249.4px;top:501.4px;width:62.3px;color:#8a887c">AUDUSD,M15</span>
<div style="left:239.4px;top:502.4px;width:1px;height:11.6px;background:#8a887c"></div>
<div style="left:323.9px;top:502.4px;width:1px;height:11.6px;background:#8a887c"></div>
<div class="vtxt" style="left:-24.4px;top:824.5px;">ターミナル</div>
<span class="th" style="left:23px;top:525.9px;">注文番号</span>
<span class="th r" style="right:936.6px;top:525.9px;">時間</span>
<span class="th r" style="right:854.6px;top:525.9px;">取引種別</span>
<span class="th r" style="right:789.6px;top:525.9px;">数量</span>
<span class="th r" style="right:705.6px;top:525.9px;">通貨<span class="kn" style="position:static">ペア</span></span>
<span class="th r" style="right:624.8px;top:525.9px;">Price</span>
<span class="th" style="left:617px;top:525.9px;">S/L:決済逆...</span>
<span class="th" style="left:703.6px;top:525.9px;">T/P:決済指値</span>
<span class="th r" style="right:281.2px;top:525.9px;">時間</span>
<span class="th r" style="right:199.4px;top:525.9px;">Price</span>
<span class="th r" style="right:117.4px;top:525.9px;"><span class="kn" style="position:static">スワップ</span></span>
<span class="th r" style="right:25.8px;top:525.9px;">損益</span>
<span class="td" style="left:36px;top:546.3px;letter-spacing:0.42px">60773534</span>
<span class="td r" style="right:934.4px;top:546.3px;">2011.03.04 14:12</span>
<span class="td r" style="right:850.4px;top:546.3px;">buy</span>
<span class="td r" style="right:786.2px;top:546.3px;">0.50</span>
<span class="td r" style="right:704px;top:546.3px;">gbpusd</span>
<span class="td r" style="right:623.2px;top:546.3px;">1.63022</span>
<span class="td r" style="right:540.6px;top:546.3px;">0.00000</span>
<span class="td r" style="right:458.6px;top:546.3px;">0.00000</span>
<span class="td r" style="right:278.8px;top:546.3px;">2011.03.07 11:35</span>
<span class="td r" style="right:197.4px;top:546.3px;">1.63087</span>
<span class="td r" style="right:115.2px;top:546.3px;">−9</span>
<span class="td r" style="right:23px;top:546.3px;">2 669</span>
<span class="td" style="left:36px;top:565.59px;letter-spacing:0.42px">60873507</span>
<span class="td r" style="right:934.4px;top:565.59px;">2011.03.07 16:05</span>
<span class="td r" style="right:850.4px;top:565.59px;">buy</span>
<span class="td r" style="right:786.2px;top:565.59px;">0.50</span>
<span class="td r" style="right:704px;top:565.59px;">gbpusd</span>
<span class="td r" style="right:623.2px;top:565.59px;">1.62675</span>
<span class="td r" style="right:540.6px;top:565.59px;">0.00000</span>
<span class="td r" style="right:458.6px;top:565.59px;">0.00000</span>
<span class="td r" style="right:278.8px;top:565.59px;">2011.03.09 13:47</span>
<span class="td r" style="right:197.4px;top:565.59px;">1.62341</span>
<span class="td r" style="right:115.2px;top:565.59px;">−18</span>
<span class="td r" style="right:23px;top:565.59px;">−13 804</span>
<span class="td" style="left:36px;top:584.88px;letter-spacing:0.42px">60987772</span>
<span class="td r" style="right:934.4px;top:584.88px;">2011.03.08 13:49</span>
<span class="td r" style="right:850.4px;top:584.88px;">sell</span>
<span class="td r" style="right:786.2px;top:584.88px;">0.50</span>
<span class="td r" style="right:704px;top:584.88px;">audusd</span>
<span class="td r" style="right:623.2px;top:584.88px;">1.00950</span>
<span class="td r" style="right:540.6px;top:584.88px;">0.00000</span>
<span class="td r" style="right:458.6px;top:584.88px;">0.00000</span>
<span class="td r" style="right:278.8px;top:584.88px;">2011.03.08 14:08</span>
<span class="td r" style="right:197.4px;top:584.88px;">1.00926</span>
<span class="td r" style="right:115.2px;top:584.88px;">0</span>
<span class="td r" style="right:23px;top:584.88px;">991</span>
<span class="td" style="left:36px;top:604.17px;letter-spacing:0.42px">60994355</span>
<span class="td r" style="right:934.4px;top:604.17px;">2011.03.08 14:49</span>
<span class="td r" style="right:850.4px;top:604.17px;">buy</span>
<span class="td r" style="right:786.2px;top:604.17px;">0.50</span>
<span class="td r" style="right:704px;top:604.17px;">gbpusd</span>
<span class="td r" style="right:623.2px;top:604.17px;">1.61744</span>
<span class="td r" style="right:540.6px;top:604.17px;">0.00000</span>
<span class="td r" style="right:458.6px;top:604.17px;">0.00000</span>
<span class="td r" style="right:278.8px;top:604.17px;">2011.03.09 13:45</span>
<span class="td r" style="right:197.4px;top:604.17px;">1.62293</span>
<span class="td r" style="right:115.2px;top:604.17px;">−9</span>
<span class="td r" style="right:23px;top:604.17px;">22 695</span>
<span class="td" style="left:36px;top:623.46px;letter-spacing:0.42px">61086801</span>
<span class="td r" style="right:934.4px;top:623.46px;">2011.03.09 15:23</span>
<span class="td r" style="right:850.4px;top:623.46px;">sell</span>
<span class="td r" style="right:786.2px;top:623.46px;">0.50</span>
<span class="td r" style="right:704px;top:623.46px;">gbpusd</span>
<span class="td r" style="right:623.2px;top:623.46px;">1.62034</span>
<span class="td r" style="right:540.6px;top:623.46px;">0.00000</span>
<span class="td r" style="right:458.6px;top:623.46px;">0.00000</span>
<span class="td r" style="right:278.8px;top:623.46px;">2011.03.09 15:40</span>
<span class="td r" style="right:197.4px;top:623.46px;">1.62023</span>
<span class="td r" style="right:115.2px;top:623.46px;">0</span>
<span class="td r" style="right:23px;top:623.46px;">454</span>
<span class="td" style="left:36px;top:642.75px;letter-spacing:0.42px">61193563</span>
<span class="td r" style="right:934.4px;top:642.75px;">2011.03.10 15:13</span>
<span class="td r" style="right:850.4px;top:642.75px;">sell</span>
<span class="td r" style="right:786.2px;top:642.75px;">0.50</span>
<span class="td r" style="right:704px;top:642.75px;">eurusd</span>
<span class="td r" style="right:623.2px;top:642.75px;">1.38160</span>
<span class="td r" style="right:540.6px;top:642.75px;">0.00000</span>
<span class="td r" style="right:458.6px;top:642.75px;">0.00000</span>
<span class="td r" style="right:278.8px;top:642.75px;">2011.03.10 15:17</span>
<span class="td r" style="right:197.4px;top:642.75px;">1.38144</span>
<span class="td r" style="right:115.2px;top:642.75px;">0</span>
<span class="td r" style="right:23px;top:642.75px;">665</span>
<span class="td" style="left:36px;top:662.04px;letter-spacing:0.42px">61195705</span>
<span class="td r" style="right:934.4px;top:662.04px;">2011.03.10 15:31</span>
<span class="td r" style="right:850.4px;top:662.04px;">buy</span>
<span class="td r" style="right:786.2px;top:662.04px;">0.50</span>
<span class="td r" style="right:704px;top:662.04px;">gbpusd</span>
<span class="td r" style="right:623.2px;top:662.04px;">1.61146</span>
<span class="td r" style="right:540.6px;top:662.04px;">0.00000</span>
<span class="td r" style="right:458.6px;top:662.04px;">0.00000</span>
<span class="td r" style="right:278.8px;top:662.04px;">2011.03.10 15:31</span>
<span class="td r" style="right:197.4px;top:662.04px;">1.61168</span>
<span class="td r" style="right:115.2px;top:662.04px;">0</span>
<span class="td r" style="right:23px;top:662.04px;">914</span>
<span class="td" style="left:36px;top:681.33px;letter-spacing:0.42px">61207526</span>
<span class="td r" style="right:934.4px;top:681.33px;">2011.03.10 17:06</span>
<span class="td r" style="right:850.4px;top:681.33px;">sell</span>
<span class="td r" style="right:786.2px;top:681.33px;">0.50</span>
<span class="td r" style="right:704px;top:681.33px;">audusd</span>
<span class="td r" style="right:623.2px;top:681.33px;">1.00076</span>
<span class="td r" style="right:540.6px;top:681.33px;">0.00000</span>
<span class="td r" style="right:458.6px;top:681.33px;">0.00000</span>
<span class="td r" style="right:278.8px;top:681.33px;">2011.03.10 17:07</span>
<span class="td r" style="right:197.4px;top:681.33px;">1.00037</span>
<span class="td r" style="right:115.2px;top:681.33px;">0</span>
<span class="td r" style="right:23px;top:681.33px;">1 619</span>
<span class="td" style="left:36px;top:700.62px;letter-spacing:0.42px">61461469</span>
<span class="td r" style="right:934.4px;top:700.62px;">2011.03.14 10:16</span>
<span class="td r" style="right:850.4px;top:700.62px;">sell</span>
<span class="td r" style="right:786.2px;top:700.62px;">0.50</span>
<span class="td r" style="right:704px;top:700.62px;">gbpusd</span>
<span class="td r" style="right:623.2px;top:700.62px;">1.60332</span>
<span class="td r" style="right:540.6px;top:700.62px;">0.00000</span>
<span class="td r" style="right:458.6px;top:700.62px;">0.00000</span>
<span class="td r" style="right:278.8px;top:700.62px;">2011.03.15 11:27</span>
<span class="td r" style="right:197.4px;top:700.62px;">1.60293</span>
<span class="td r" style="right:115.2px;top:700.62px;">−96</span>
<span class="td r" style="right:23px;top:700.62px;">1 589</span>
<span class="td" style="left:36px;top:719.91px;letter-spacing:0.42px">61501519</span>
<span class="td r" style="right:934.4px;top:719.91px;">2011.03.14 17:25</span>
<span class="td r" style="right:850.4px;top:719.91px;">buy</span>
<span class="td r" style="right:786.2px;top:719.91px;">0.50</span>
<span class="td r" style="right:704px;top:719.91px;">audusd</span>
<span class="td r" style="right:623.2px;top:719.91px;">1.00666</span>
<span class="td r" style="right:540.6px;top:719.91px;">0.00000</span>
<span class="td r" style="right:458.6px;top:719.91px;">0.00000</span>
<span class="td r" style="right:278.8px;top:719.91px;">2011.03.14 17:39</span>
<span class="td r" style="right:197.4px;top:719.91px;">1.00700</span>
<span class="td r" style="right:115.2px;top:719.91px;">0</span>
<span class="td r" style="right:23px;top:719.91px;">1 390</span>
<span class="td" style="left:36px;top:739.2px;letter-spacing:0.42px">61566889</span>
<span class="td r" style="right:934.4px;top:739.2px;">2011.03.15 09:00</span>
<span class="td r" style="right:850.4px;top:739.2px;">sell</span>
<span class="td r" style="right:786.2px;top:739.2px;">0.50</span>
<span class="td r" style="right:704px;top:739.2px;">usdjpy</span>
<span class="td r" style="right:623.2px;top:739.2px;">81.599</span>
<span class="td r" style="right:540.6px;top:739.2px;">0.000</span>
<span class="td r" style="right:458.6px;top:739.2px;">0.000</span>
<span class="td r" style="right:278.8px;top:739.2px;">2011.03.15 09:29</span>
<span class="td r" style="right:197.4px;top:739.2px;">81.531</span>
<span class="td r" style="right:115.2px;top:739.2px;">0</span>
<span class="td r" style="right:23px;top:739.2px;">3 400</span>
<span class="td" style="left:36px;top:758.49px;letter-spacing:0.42px">61597942</span>
<span class="td r" style="right:934.4px;top:758.49px;">2011.03.15 13:58</span>
<span class="td r" style="right:850.4px;top:758.49px;">sell</span>
<span class="td r" style="right:786.2px;top:758.49px;">0.50</span>
<span class="td r" style="right:704px;top:758.49px;">usdjpy</span>
<span class="td r" style="right:623.2px;top:758.49px;">81.265</span>
<span class="td r" style="right:540.6px;top:758.49px;">0.000</span>
<span class="td r" style="right:458.6px;top:758.49px;">0.000</span>
<span class="td r" style="right:278.8px;top:758.49px;">2011.03.15 13:59</span>
<span class="td r" style="right:197.4px;top:758.49px;">81.212</span>
<span class="td r" style="right:115.2px;top:758.49px;">0</span>
<span class="td r" style="right:23px;top:758.49px;">2 650</span>
<span class="td" style="left:36px;top:777.78px;letter-spacing:0.42px">61601380</span>
<span class="td r" style="right:934.4px;top:777.78px;">2011.03.15 14:25</span>
<span class="td r" style="right:850.4px;top:777.78px;">buy</span>
<span class="td r" style="right:786.2px;top:777.78px;">0.50</span>
<span class="td r" style="right:704px;top:777.78px;">usdjpy</span>
<span class="td r" style="right:623.2px;top:777.78px;">80.957</span>
<span class="td r" style="right:540.6px;top:777.78px;">0.000</span>
<span class="td r" style="right:458.6px;top:777.78px;">0.000</span>
<span class="td r" style="right:278.8px;top:777.78px;">2011.03.15 14:26</span>
<span class="td r" style="right:197.4px;top:777.78px;">80.979</span>
<span class="td r" style="right:115.2px;top:777.78px;">0</span>
<span class="td r" style="right:23px;top:777.78px;">1 100</span>
<span class="td" style="left:36px;top:797.07px;letter-spacing:0.42px">61654253</span>
<span class="td r" style="right:934.4px;top:797.07px;">2011.03.16 01:54</span>
<span class="td r" style="right:850.4px;top:797.07px;">buy</span>
<span class="td r" style="right:786.2px;top:797.07px;">0.50</span>
<span class="td r" style="right:704px;top:797.07px;">usdjpy</span>
<span class="td r" style="right:623.2px;top:797.07px;">81.067</span>
<span class="td r" style="right:540.6px;top:797.07px;">0.000</span>
<span class="td r" style="right:458.6px;top:797.07px;">0.000</span>
<span class="td r" style="right:278.8px;top:797.07px;">2011.03.16 01:59</span>
<span class="td r" style="right:197.4px;top:797.07px;">81.094</span>
<span class="td r" style="right:115.2px;top:797.07px;">0</span>
<span class="td r" style="right:23px;top:797.07px;">1 350</span>
<span class="td" style="left:36px;top:816.36px;letter-spacing:0.42px">61692119</span>
<span class="td r" style="right:934.4px;top:816.36px;">2011.03.16 09:01</span>
<span class="td r" style="right:850.4px;top:816.36px;">buy</span>
<span class="td r" style="right:786.2px;top:816.36px;">0.50</span>
<span class="td r" style="right:704px;top:816.36px;">gbpusd</span>
<span class="td r" style="right:623.2px;top:816.36px;">1.60813</span>
<span class="td r" style="right:540.6px;top:816.36px;">0.00000</span>
<span class="td r" style="right:458.6px;top:816.36px;">0.00000</span>
<span class="td r" style="right:278.8px;top:816.36px;">2011.03.16 09:02</span>
<span class="td r" style="right:197.4px;top:816.36px;">1.60907</span>
<span class="td r" style="right:115.2px;top:816.36px;">0</span>
<span class="td r" style="right:23px;top:816.36px;">3 802</span>
<div class="sumclip" style="left:11.8px;top:833.55px;width:1197px;height:7.25px;"><span class="sum" style="left:23px;top:2.4px;">損益計: 24 947  クレジット計: 0  入金計: 0  出金計: 0</span><span class="sum r" style="right:5px;top:2.2px;">24 947</span></div>
<div style="left:44.4px;top:845px;width:1px;height:11px;background:#8a887c"></div>
<div style="left:175.7px;top:845px;width:1px;height:11px;background:#8a887c"></div>
<div style="left:254.6px;top:845px;width:1px;height:11px;background:#8a887c"></div>
<div style="left:333px;top:845px;width:1px;height:11px;background:#8a887c"></div>
<div style="left:387.6px;top:845px;width:1px;height:11px;background:#8a887c"></div>
<div style="left:453.5px;top:845px;width:1px;height:11px;background:#8a887c"></div>
</div>
</div>
</body></html>
